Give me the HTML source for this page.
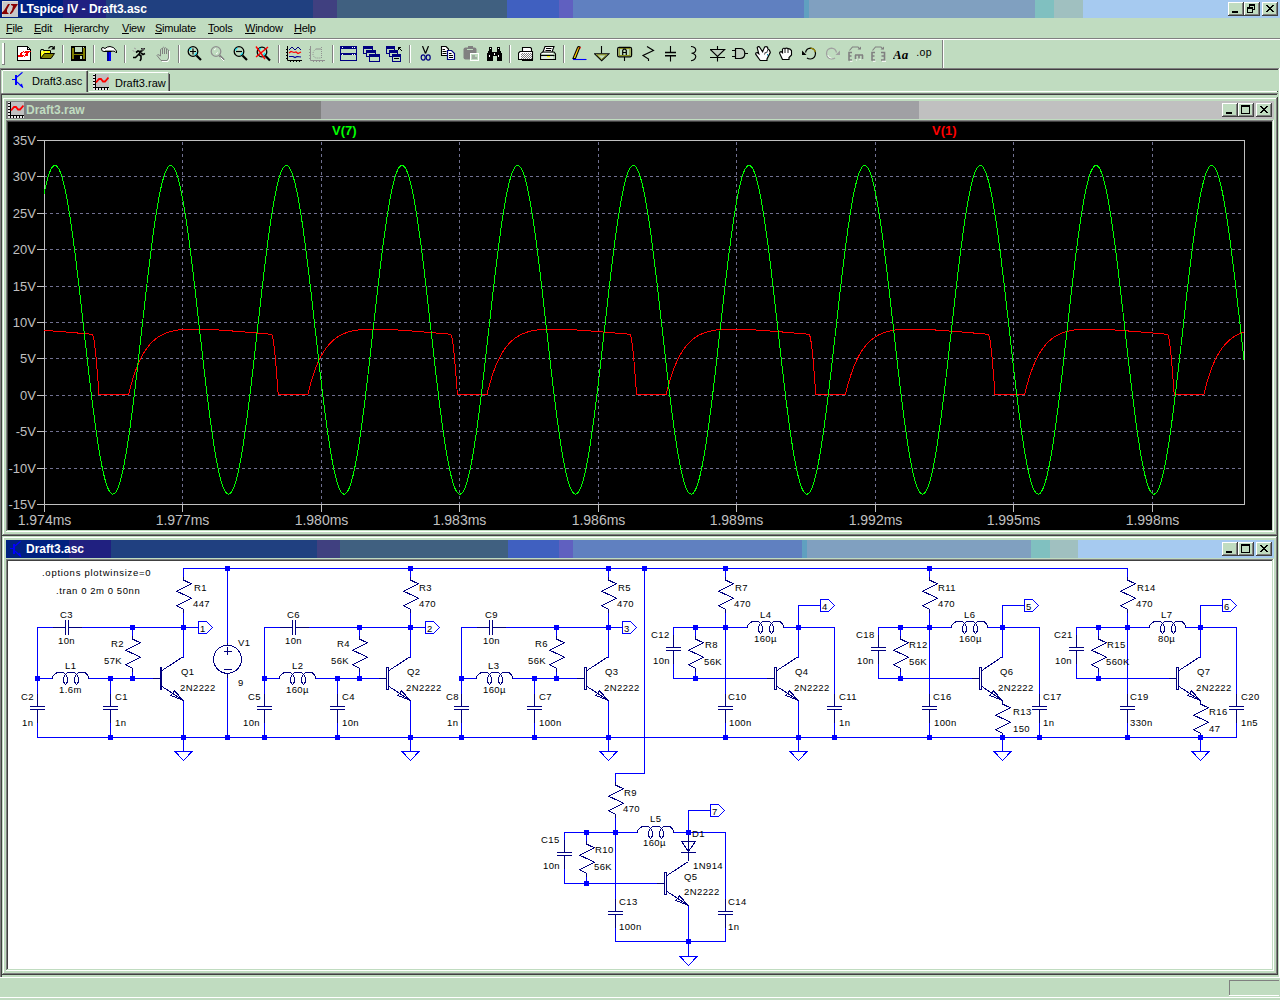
<!DOCTYPE html><html><head><meta charset="utf-8"><style>
html,body{margin:0;padding:0;}
body{width:1280px;height:1000px;position:relative;overflow:hidden;background:#c0dcc0;font-family:"Liberation Sans", sans-serif;}
div,span,svg{position:absolute;}
.t{position:absolute;white-space:nowrap;line-height:1;}
</style></head><body><div style="position:absolute;left:0px;top:0px;width:63px;height:18px;background:#002080"></div><div style="position:absolute;left:63px;top:0px;width:43px;height:18px;background:#202080"></div><div style="position:absolute;left:106px;top:0px;width:207px;height:18px;background:#204080"></div><div style="position:absolute;left:313px;top:0px;width:24px;height:18px;background:#404080"></div><div style="position:absolute;left:337px;top:0px;width:170px;height:18px;background:#406080"></div><div style="position:absolute;left:507px;top:0px;width:52px;height:18px;background:#4060c0"></div><div style="position:absolute;left:559px;top:0px;width:14px;height:18px;background:#6060c0"></div><div style="position:absolute;left:573px;top:0px;width:231px;height:18px;background:#6080c0"></div><div style="position:absolute;left:804px;top:0px;width:5px;height:18px;background:#60a0c0"></div><div style="position:absolute;left:809px;top:0px;width:226px;height:18px;background:#80a0c0"></div><div style="position:absolute;left:1035px;top:0px;width:19px;height:18px;background:#80c0c0"></div><div style="position:absolute;left:1054px;top:0px;width:29px;height:18px;background:#a0c0c0"></div><div style="position:absolute;left:1083px;top:0px;width:197px;height:18px;background:#a6caf0"></div><svg style="left:2px;top:1px" width="16" height="16" viewBox="0 0 16 16"><rect x="0" y="0" width="16" height="16" fill="#c8c8c8"/><rect x="0" y="0" width="16" height="1" fill="#e0dcd0"/><rect x="0" y="0" width="1" height="16" fill="#e0dcd0"/><path d="M6 3 H8 L5 8.5 L5 11 L7 13 H0 V11.5 L2 9.5 Z" fill="#880000"/><path d="M9 3 H16 L15 4.5 L12 9 L11 11 L9 13 H8 V12 L10 9 L11 5 L9 4 Z" fill="#880000"/></svg><span class="t" style="left:20px;top:3px;font-size:12px;font-weight:bold;color:#fff;">LTspice IV - Draft3.asc</span><div style="position:absolute;left:1228px;top:2px;width:16px;height:14px;background:#c0dcc0"></div><div style="position:absolute;left:1228px;top:2px;width:15px;height:1px;background:#fff"></div><div style="position:absolute;left:1228px;top:2px;width:1px;height:13px;background:#fff"></div><div style="position:absolute;left:1228px;top:15px;width:16px;height:1px;background:#404040"></div><div style="position:absolute;left:1243px;top:2px;width:1px;height:14px;background:#404040"></div><div style="position:absolute;left:1229px;top:14px;width:14px;height:1px;background:#808080"></div><div style="position:absolute;left:1242px;top:3px;width:1px;height:12px;background:#808080"></div><div style="position:absolute;left:1232px;top:11px;width:6px;height:2px;background:#000"></div><div style="position:absolute;left:1244px;top:2px;width:16px;height:14px;background:#c0dcc0"></div><div style="position:absolute;left:1244px;top:2px;width:15px;height:1px;background:#fff"></div><div style="position:absolute;left:1244px;top:2px;width:1px;height:13px;background:#fff"></div><div style="position:absolute;left:1244px;top:15px;width:16px;height:1px;background:#404040"></div><div style="position:absolute;left:1259px;top:2px;width:1px;height:14px;background:#404040"></div><div style="position:absolute;left:1245px;top:14px;width:14px;height:1px;background:#808080"></div><div style="position:absolute;left:1258px;top:3px;width:1px;height:12px;background:#808080"></div><div style="position:absolute;left:1249px;top:4px;width:6px;height:6px;border:1px solid #000;border-top-width:2px;box-sizing:border-box"></div><div style="position:absolute;left:1247px;top:7px;width:6px;height:6px;background:#c0dcc0;border:1px solid #000;border-top-width:2px;box-sizing:border-box"></div><div style="position:absolute;left:1262px;top:2px;width:16px;height:14px;background:#c0dcc0"></div><div style="position:absolute;left:1262px;top:2px;width:15px;height:1px;background:#fff"></div><div style="position:absolute;left:1262px;top:2px;width:1px;height:13px;background:#fff"></div><div style="position:absolute;left:1262px;top:15px;width:16px;height:1px;background:#404040"></div><div style="position:absolute;left:1277px;top:2px;width:1px;height:14px;background:#404040"></div><div style="position:absolute;left:1263px;top:14px;width:14px;height:1px;background:#808080"></div><div style="position:absolute;left:1276px;top:3px;width:1px;height:12px;background:#808080"></div><svg style="position:absolute;left:1266px;top:5px" width="8" height="7" shape-rendering="crispEdges"><path d="M0 0h2l2 2.5l2-2.5h2l-3 3.5l3 3.5h-2l-2-2.5l-2 2.5h-2l3-3.5z" fill="#000"/></svg><span class="t" style="left:6px;top:23px;font-size:11px;letter-spacing:-0.25px;color:#000;"><u>F</u>ile</span><span class="t" style="left:34px;top:23px;font-size:11px;letter-spacing:-0.25px;color:#000;"><u>E</u>dit</span><span class="t" style="left:64px;top:23px;font-size:11px;letter-spacing:-0.25px;color:#000;">H<u>i</u>erarchy</span><span class="t" style="left:122px;top:23px;font-size:11px;letter-spacing:-0.25px;color:#000;"><u>V</u>iew</span><span class="t" style="left:155px;top:23px;font-size:11px;letter-spacing:-0.25px;color:#000;"><u>S</u>imulate</span><span class="t" style="left:208px;top:23px;font-size:11px;letter-spacing:-0.25px;color:#000;"><u>T</u>ools</span><span class="t" style="left:245px;top:23px;font-size:11px;letter-spacing:-0.25px;color:#000;"><u>W</u>indow</span><span class="t" style="left:294px;top:23px;font-size:11px;letter-spacing:-0.25px;color:#000;"><u>H</u>elp</span><div style="position:absolute;left:0px;top:38px;width:1280px;height:1px;background:#808080"></div><div style="position:absolute;left:0px;top:39px;width:1280px;height:1px;background:#fff"></div><div style="position:absolute;left:2px;top:43px;width:2px;height:21px;background:#fff"></div><div style="position:absolute;left:4px;top:43px;width:1px;height:22px;background:#808080"></div><div style="position:absolute;left:2px;top:64px;width:3px;height:1px;background:#808080"></div><div style="position:absolute;left:62px;top:45px;width:1px;height:18px;background:#808080"></div><div style="position:absolute;left:63px;top:45px;width:1px;height:18px;background:#fff"></div><div style="position:absolute;left:93px;top:45px;width:1px;height:18px;background:#808080"></div><div style="position:absolute;left:94px;top:45px;width:1px;height:18px;background:#fff"></div><div style="position:absolute;left:124px;top:45px;width:1px;height:18px;background:#808080"></div><div style="position:absolute;left:125px;top:45px;width:1px;height:18px;background:#fff"></div><div style="position:absolute;left:178px;top:45px;width:1px;height:18px;background:#808080"></div><div style="position:absolute;left:179px;top:45px;width:1px;height:18px;background:#fff"></div><div style="position:absolute;left:278px;top:45px;width:1px;height:18px;background:#808080"></div><div style="position:absolute;left:279px;top:45px;width:1px;height:18px;background:#fff"></div><div style="position:absolute;left:332px;top:45px;width:1px;height:18px;background:#808080"></div><div style="position:absolute;left:333px;top:45px;width:1px;height:18px;background:#fff"></div><div style="position:absolute;left:409px;top:45px;width:1px;height:18px;background:#808080"></div><div style="position:absolute;left:410px;top:45px;width:1px;height:18px;background:#fff"></div><div style="position:absolute;left:509px;top:45px;width:1px;height:18px;background:#808080"></div><div style="position:absolute;left:510px;top:45px;width:1px;height:18px;background:#fff"></div><div style="position:absolute;left:563px;top:45px;width:1px;height:18px;background:#808080"></div><div style="position:absolute;left:564px;top:45px;width:1px;height:18px;background:#fff"></div><div style="position:absolute;left:942px;top:40px;width:1px;height:28px;background:#808080"></div><div style="position:absolute;left:943px;top:40px;width:1px;height:28px;background:#fff"></div><svg style="left:17px;top:46px" width="16" height="16" viewBox="0 0 16 16" shape-rendering="crispEdges"><path d="M0.5 0.5 H10.5 L13.5 3.5 V14.5 H0.5 Z" fill="#fff" stroke="#000"/><path d="M10.5 0.5 V3.5 H13.5" fill="none" stroke="#000"/><rect x="11" y="2" width="1" height="1" fill="#fff"/><rect x="6" y="5" width="1" height="1" fill="#ff0000"/><rect x="8" y="5" width="6" height="1" fill="#ff0000"/><rect x="4" y="6" width="2" height="1" fill="#ff0000"/><rect x="7" y="6" width="5" height="1" fill="#ff0000"/><rect x="3" y="7" width="2" height="1" fill="#ff0000"/><rect x="9" y="7" width="2" height="1" fill="#ff0000"/><rect x="3" y="8" width="2" height="1" fill="#ff0000"/><rect x="8" y="8" width="3" height="1" fill="#ff0000"/><rect x="1" y="9" width="6" height="1" fill="#ff0000"/><rect x="8" y="9" width="3" height="1" fill="#ff0000"/><rect x="1" y="10" width="5" height="1" fill="#ff0000"/><rect x="7" y="10" width="1" height="1" fill="#ff0000"/></svg><svg style="left:40px;top:46px" width="16" height="16" viewBox="0 0 16 16"><path d="M1 5 H10 V7.5 H4.5 L1 12 Z" fill="#ffff00"/><path d="M0.5 12.5 V4.5 H1 V3.5 H3.5 V4.5 H10.5 V7.5" fill="none" stroke="#000"/><path d="M4.5 7.5 H14.5 L11 12.5 H0.5 Z" fill="#808000" stroke="#000"/><path d="M1 6 H3 M5 6 H7 M2 8 H3" stroke="#fff" stroke-width="0.6"/><path d="M8.5 2.5 Q9.5 0.5 11.5 0.5 Q12.5 0.5 13.5 1.5" fill="none" stroke="#000" stroke-width="1.2"/><path d="M11 3.5 H14.8 V-0.5 Z" fill="#000"/></svg><svg style="left:71px;top:46px" width="16" height="16" viewBox="0 0 16 16" shape-rendering="crispEdges"><rect x="0" y="0" width="15" height="15" fill="#000"/><rect x="1" y="2" width="2" height="11" fill="#808000"/><rect x="12" y="2" width="2" height="11" fill="#808000"/><rect x="4" y="1" width="7" height="5" fill="#c0dcc0"/><rect x="3" y="8" width="9" height="1" fill="#808000"/><rect x="9" y="10" width="2" height="3" fill="#c0dcc0"/><rect x="12" y="1" width="1" height="1" fill="#c0dcc0"/></svg><svg style="left:101px;top:46px" width="17" height="16" viewBox="0 0 17 16"><path d="M0.5 3 Q0.5 1.5 2 1.5 L4 2.5 Q6 0.5 9 0.5 Q13 0.5 15.5 5 V7 L14 5.5 Q12 4.5 10 5.5 H5 L3 5.5 Q0.5 5.5 0.5 3 Z" fill="#fff" stroke="#000"/><path d="M4 4.5 H13" stroke="#a0a0a0"/><rect x="6" y="6" width="4" height="9" fill="#0000a0"/><rect x="8" y="6" width="2" height="9" fill="#0000ff"/></svg><svg style="left:132px;top:46px" width="16" height="16" viewBox="0 0 16 16"><path d="M1 11.5 H3.5 L7 8 L9 5 L10.5 5 M9 6 L6 5 L4 6.5 M9 7 L11 8.5 L13 7.5 M7 8.5 L9 10 L9 13 L8 15" fill="none" stroke="#000" stroke-width="1.6"/><path d="M9 2 H13 L12 4.5 H10 Z" fill="#000"/><circle cx="11" cy="3" r="0.7" fill="#fff"/><path d="M2 2 L4 3 M0.5 4.5 L2.5 5.5" stroke="#a0a0a0"/></svg><svg style="left:156px;top:46px" width="16" height="16" viewBox="0 0 16 16"><path d="M4.5 10 V3.5 Q5.5 2 6.5 3.5 V8 V2 Q7.5 0.5 8.5 2 V8 V2.5 Q9.5 1 10.5 2.5 V8 V4 Q11.5 2.5 12.5 4 V12 L11 14.5 H5 L1 9.5 Q1.5 8 3 9 Z" fill="none" stroke="#808080"/><path d="M13.5 5 V13 L12 15.5 H6" fill="none" stroke="#fff"/></svg><svg style="left:187px;top:46px" width="16" height="16" viewBox="0 0 16 16"><circle cx="6" cy="5.5" r="4.8" fill="none" stroke="#000" stroke-width="1.3"/><path d="M2.5 4.5 Q3 2.5 4.5 2 M9.5 6.5 Q9 8.5 7.5 9" stroke="#00e0ff" stroke-width="1.1" fill="none"/><path d="M3 5.5 H9 M6 2.5 V8.5" stroke="#000" stroke-width="1.2"/><path d="M9.5 9.5 L14 14" stroke="#000" stroke-width="2.2"/></svg><svg style="left:210px;top:46px" width="16" height="16" viewBox="0 0 16 16"><circle cx="6" cy="5.5" r="4.8" fill="none" stroke="#909090" stroke-width="1.3"/><path d="M4 4 L6 2.5 M6 8 L8 6.5" stroke="#fff"/><path d="M9.5 9.5 L14 14" stroke="#808080" stroke-width="2.2"/><path d="M10.5 11.5 L14 15" stroke="#fff"/></svg><svg style="left:233px;top:46px" width="16" height="16" viewBox="0 0 16 16"><circle cx="6" cy="5.5" r="4.8" fill="none" stroke="#000" stroke-width="1.3"/><path d="M2.5 4.5 Q3 2.5 4.5 2 M9.5 6.5 Q9 8.5 7.5 9" stroke="#00e0ff" stroke-width="1.1" fill="none"/><path d="M3 5.5 H9" stroke="#000" stroke-width="1.2"/><path d="M9.5 9.5 L14 14" stroke="#000" stroke-width="2.2"/></svg><svg style="left:255px;top:46px" width="16" height="16" viewBox="0 0 16 16"><circle cx="7" cy="6" r="4.8" fill="none" stroke="#000" stroke-width="1.3"/><path d="M4 4 Q5 2.5 6 2.5 M10 7 Q9 9 8 9" stroke="#00e0ff" stroke-width="1.5" fill="none"/><path d="M10.5 10 L15 14.5" stroke="#000" stroke-width="2.2"/><path d="M1 0.5 L10 13 M13 1 L1 11" stroke="#ff0000" stroke-width="1.4"/></svg><svg style="left:286px;top:46px" width="17" height="16" viewBox="0 0 17 16"><path d="M1.5 0 V14.5 H16" fill="none" stroke="#000"/><path d="M0 3.5 H1 M0 6.5 H1 M0 9.5 H1 M0 12.5 H1 M4.5 15 V16 M7.5 15 V16 M10.5 15 V16 M13.5 15 V16" stroke="#000"/><polyline points="3,4 6,1 9,4 12,1 15,4" fill="none" stroke="#000080"/><polyline points="3,7 5,5.5 8,6.5 10,6 12,7.5 15,6" fill="none" stroke="#ff0000" stroke-width="1.2"/><polyline points="3,10.5 7,10.5 9,11.5 11,10.5 15,11" fill="none" stroke="#0000a0" stroke-width="1.2"/></svg><svg style="left:309px;top:46px" width="17" height="16" viewBox="0 0 17 16"><path d="M1.5 0 V14.5 H16" fill="none" stroke="#909090"/><path d="M0 3.5 H1 M0 6.5 H1 M0 9.5 H1 M0 12.5 H1 M4.5 15 V16 M7.5 15 V16 M10.5 15 V16 M13.5 15 V16" stroke="#909090"/><path d="M12.5 1 V13 M7 3 Q4 5 4 8 Q4 11 7 12 H12" fill="none" stroke="#909090" stroke-dasharray="1 1"/><path d="M7 3 H12" stroke="#909090"/></svg><svg style="left:340px;top:46px" width="17" height="16" viewBox="0 0 17 16" shape-rendering="crispEdges"><rect x="0.5" y="0.5" width="16" height="14" fill="#c0dcc0" stroke="#000080"/><rect x="1" y="1" width="15" height="2" fill="#000080"/><rect x="1" y="7" width="15" height="2" fill="#000080"/><rect x="2" y="1" width="1" height="1" fill="#fff"/><rect x="12" y="1" width="1" height="1" fill="#fff"/><rect x="14" y="1" width="1" height="1" fill="#fff"/><rect x="2" y="8" width="1" height="1" fill="#fff"/><rect x="12" y="8" width="1" height="1" fill="#fff"/><rect x="14" y="8" width="1" height="1" fill="#fff"/></svg><svg style="left:363px;top:46px" width="17" height="16" viewBox="0 0 17 16" shape-rendering="crispEdges"><rect x="0.5" y="0.5" width="9" height="7" fill="#c0dcc0" stroke="#000080"/><rect x="1" y="1" width="9" height="2" fill="#000080"/><rect x="3.5" y="4.5" width="9" height="6" fill="#c0dcc0" stroke="#000080"/><rect x="4" y="5" width="9" height="2" fill="#000080"/><rect x="6.5" y="8.5" width="10" height="7" fill="#c0dcc0" stroke="#000080"/><rect x="7" y="9" width="10" height="2" fill="#000080"/></svg><svg style="left:386px;top:46px" width="17" height="16" viewBox="0 0 17 16" shape-rendering="crispEdges"><rect x="0.5" y="0.5" width="8" height="7" fill="#c0dcc0" stroke="#000080"/><rect x="1" y="1" width="8" height="2" fill="#000080"/><rect x="3.5" y="4.5" width="8" height="6" fill="#c0dcc0" stroke="#000080"/><rect x="4" y="5" width="8" height="2" fill="#000080"/><rect x="6.5" y="8.5" width="8" height="7" fill="#c0dcc0" stroke="#000080"/><rect x="7" y="9" width="8" height="2" fill="#000080"/><rect x="8" y="12" width="5" height="1" fill="#000"/><path d="M12.5 1.5 L16 5 M12.5 1.5 V4 M12.5 1.5 H15" stroke="#000" fill="none" stroke-width="1.1"/></svg><svg style="left:420px;top:46px" width="12" height="16" viewBox="0 0 12 16"><path d="M2.5 0 L5.5 7.5 M8.5 0 L5.5 7.5" stroke="#000" stroke-width="1.2"/><ellipse cx="3.2" cy="11.5" rx="2" ry="2.6" fill="none" stroke="#000080" stroke-width="1.2"/><ellipse cx="8.2" cy="11.5" rx="2" ry="2.6" fill="none" stroke="#000080" stroke-width="1.2"/></svg><svg style="left:440px;top:46px" width="17" height="16" viewBox="0 0 17 16"><path d="M1.5 0.5 H6 L8.5 3 V9.5 H1.5 Z" fill="#fff" stroke="#000" stroke-width="1.1"/><path d="M2.5 3.5 H5 M2.5 5.5 H6.5 M2.5 7.5 H6.5" stroke="#000"/><path d="M7.5 4.5 H11.5 L14.5 7.5 V13.5 H7.5 Z" fill="#fff" stroke="#000080" stroke-width="1.2"/><path d="M9 7.5 H11.5 M9 9.5 H13 M9 11.5 H13" stroke="#000"/></svg><svg style="left:463px;top:46px" width="17" height="16" viewBox="0 0 17 16"><rect x="0.5" y="1.5" width="13" height="12" rx="2" fill="#808080"/><rect x="5" y="0" width="5" height="2" fill="#808080"/><path d="M4 3.5 H10" stroke="#c0dcc0"/><rect x="7.5" y="7.5" width="8" height="7" fill="#c0dcc0" stroke="#fff"/><path d="M9 10 H12 M9 12 H14" stroke="#808080"/></svg><svg style="left:487px;top:46px" width="16" height="16" viewBox="0 0 16 16" shape-rendering="crispEdges"><path d="M0 15 V8 L2 4 V1 H5 V6 H10 V1 H13 V4 L15 8 V15 H9.5 V10 H5.5 V15 Z" fill="#000"/><rect x="2" y="9" width="1" height="2" fill="#fff"/><rect x="11" y="9" width="1" height="2" fill="#fff"/><rect x="3" y="2" width="1" height="1" fill="#fff"/><rect x="11" y="2" width="1" height="1" fill="#fff"/><rect x="7" y="7" width="1" height="2" fill="#fff"/></svg><svg style="left:518px;top:46px" width="16" height="16" viewBox="0 0 16 16"><path d="M4.5 5 V1.5 H12.5 L13.5 2.5 V5" fill="#fff" stroke="#000" stroke-width="1.1"/><path d="M0.5 13.5 V7 L2 5.5 H14.5 V13.5 Z" fill="#fff" stroke="#000" stroke-width="1.1"/><rect x="4" y="7" width="1" height="1" fill="#808080"/><rect x="6" y="7" width="1" height="1" fill="#808080"/><rect x="8" y="7" width="1" height="1" fill="#808080"/><rect x="10" y="7" width="1" height="1" fill="#808080"/><rect x="12" y="7" width="1" height="1" fill="#808080"/><rect x="3" y="8" width="1" height="1" fill="#808080"/><rect x="5" y="8" width="1" height="1" fill="#808080"/><rect x="7" y="8" width="1" height="1" fill="#808080"/><rect x="9" y="8" width="1" height="1" fill="#808080"/><rect x="11" y="8" width="1" height="1" fill="#808080"/><rect x="13" y="8" width="1" height="1" fill="#808080"/><rect x="4" y="9" width="1" height="1" fill="#808080"/><rect x="6" y="9" width="1" height="1" fill="#808080"/><rect x="8" y="9" width="1" height="1" fill="#808080"/><rect x="10" y="9" width="1" height="1" fill="#808080"/><rect x="12" y="9" width="1" height="1" fill="#808080"/><rect x="3" y="10" width="1" height="1" fill="#808080"/><rect x="5" y="10" width="1" height="1" fill="#808080"/><rect x="7" y="10" width="1" height="1" fill="#808080"/><rect x="9" y="10" width="1" height="1" fill="#808080"/><rect x="11" y="10" width="1" height="1" fill="#808080"/><rect x="13" y="10" width="1" height="1" fill="#808080"/><rect x="4" y="11" width="1" height="1" fill="#808080"/><rect x="6" y="11" width="1" height="1" fill="#808080"/><rect x="8" y="11" width="1" height="1" fill="#808080"/><rect x="10" y="11" width="1" height="1" fill="#808080"/><rect x="12" y="11" width="1" height="1" fill="#808080"/><rect x="3" y="12" width="1" height="1" fill="#808080"/><rect x="5" y="12" width="1" height="1" fill="#808080"/><rect x="7" y="12" width="1" height="1" fill="#808080"/><rect x="9" y="12" width="1" height="1" fill="#808080"/><rect x="11" y="12" width="1" height="1" fill="#808080"/><rect x="13" y="12" width="1" height="1" fill="#808080"/><rect x="4" y="13.5" width="11" height="1.5" fill="#000"/></svg><svg style="left:540px;top:46px" width="17" height="16" viewBox="0 0 17 16"><path d="M3 6 L5 0.5 H14 L12 6" fill="#fff" stroke="#000" stroke-width="1.1"/><path d="M6 2.5 H11.5 M5.5 4.5 H11" stroke="#000" stroke-width="1"/><path d="M0.5 13.5 V8 L2.5 6 H14 L15.5 8 V13.5 Z" fill="#c0dcc0" stroke="#000" stroke-width="1.1"/><path d="M1.5 7.5 H13 M1.5 12 H13" stroke="#fff" stroke-width="1"/><path d="M1 9.5 H14.5" stroke="#000" stroke-width="1.2"/><path d="M1.5 10.7 H13" stroke="#e0f0e0" stroke-width="1"/><rect x="7" y="10" width="3" height="1.2" fill="#ffff00"/></svg><svg style="left:572px;top:46px" width="16" height="16" viewBox="0 0 16 16"><path d="M1 12.5 L5.5 1.5 Q6.5 0 8 1 L3.5 12.5 Z" fill="#ffff00" stroke="#000" stroke-width="1.1"/><path d="M2.5 10 L6.5 2" stroke="#ff0000" stroke-width="0.7" stroke-dasharray="1 1.5"/><rect x="7.5" y="1" width="1.2" height="1.5" fill="#ff0000"/><path d="M1 13.5 H14.5" stroke="#0000ff" stroke-width="1.1"/></svg><svg style="left:594px;top:46px" width="16" height="16" viewBox="0 0 16 16"><path d="M7.5 0 V7.5" stroke="#000" stroke-width="1.1"/><path d="M0.5 7.8 H15 L7.7 14.7 Z" fill="#c0dcc0" stroke="#000" stroke-width="1.1"/><path d="M2.8 8.8 H12.6 L7.7 13.3 Z" fill="none" stroke="#808000" stroke-width="0.9"/></svg><svg style="left:617px;top:46px" width="16" height="16" viewBox="0 0 16 16"><rect x="0.6" y="1.3" width="14" height="9.6" rx="1.6" fill="#c0dcc0" stroke="#000" stroke-width="1.2"/><rect x="2.2" y="2.6" width="10.8" height="7" fill="none" stroke="#808000" stroke-width="0.9"/><path d="M5.7 9 V4.5 L6.7 3.2 H8.3 L9.3 4.5 V9 M5.7 6.5 H9.3" fill="none" stroke="#000" stroke-width="1.2"/><path d="M7.5 11 V15" stroke="#000" stroke-width="1.1"/></svg><svg style="left:642px;top:46px" width="14" height="16" viewBox="0 0 14 16"><polyline points="5,0.5 11.5,4.5 1,9.5 6.5,13 6.5,15" fill="none" stroke="#000" stroke-width="1.15"/></svg><svg style="left:663px;top:46px" width="16" height="16" viewBox="0 0 16 16"><path d="M7.5 0 V6 M7.5 10 V15.5" stroke="#000" stroke-width="1.1"/><path d="M2 6.5 H13 M2 9.8 H13" stroke="#000" stroke-width="1.6"/></svg><svg style="left:690px;top:46px" width="10" height="16" viewBox="0 0 10 16"><path d="M1 0.5 Q5.5 1 5.8 4 Q5.5 7 1.5 7.2 Q5.5 7.6 5.8 10.5 Q5.5 14 1 14.7" fill="none" stroke="#000" stroke-width="1.15"/></svg><svg style="left:710px;top:46px" width="16" height="16" viewBox="0 0 16 16"><path d="M7.5 0 V3.5 M7.5 10 V15.5 M0 11.5 H15" stroke="#000" stroke-width="1.1"/><path d="M0.3 3.5 H14.7 L7.5 10.5 Z" fill="#c0d0c0" stroke="#000" stroke-width="1.1"/></svg><svg style="left:732px;top:46px" width="17" height="16" viewBox="0 0 17 16"><path d="M3.5 2.5 H8 Q12.8 2.5 12.8 7.5 Q12.8 12.5 8 12.5 H3.5 Z" fill="#c0d0c0" stroke="#000" stroke-width="1.2"/><path d="M0 4.5 H3.5 M0 10.5 H3.5 M12.8 7.5 H16" stroke="#000" stroke-width="1.1"/></svg><svg style="left:755px;top:46px" width="17" height="16" viewBox="0 0 17 16"><path d="M5.2 14.5 L0.7 8.2 Q0.5 6.5 2.2 6.6 L3.8 7.8 L2.2 1.6 Q2.8 0.2 4.3 0.7 L7.6 5.8 L9.6 1.1 Q11.2 0.1 12.6 1.3 L12.8 3 Q14.8 3.5 15.3 6.6 L12 13 V14.5 Z" fill="#fff" stroke="#000" stroke-width="1.15"/><path d="M10.5 6 L9.5 8.5 M12.8 4 L11.5 7" stroke="#000" stroke-width="0.8"/><rect x="12" y="8" width="1" height="1.5" fill="#00a0c0"/></svg><svg style="left:779px;top:46px" width="15" height="16" viewBox="0 0 15 16"><path d="M3.5 13.5 L0.6 7.2 Q0.6 5.6 2.5 5.7 L3.5 6.6 V3.2 Q4.5 1.6 6 2.6 Q7.5 1.6 9 2.6 Q11 2.4 12.5 4.6 V9 L10 11.5 V13.5 Z" fill="#fff" stroke="#000" stroke-width="1.15"/><path d="M6 3 V7 M9 3 V7" stroke="#000" stroke-width="0.9"/></svg><svg style="left:801px;top:46px" width="16" height="16" viewBox="0 0 16 16"><path d="M4.5 6.5 Q5.5 2.5 9.5 2.2 Q14.3 2.5 14.5 7.5 Q14.2 12.5 9.5 13 Q7.2 13 6 12" fill="none" stroke="#000" stroke-width="1.2"/><path d="M9.5 2.2 Q13.5 2.5 14.3 6" fill="none" stroke="#a09000" stroke-width="1.2"/><path d="M1 4.5 V9 H5.5 Z" fill="#000"/></svg><svg style="left:825px;top:46px" width="16" height="16" viewBox="0 0 16 16"><path d="M11.5 6.5 Q10.5 2.5 6.5 2.2 Q1.7 2.5 1.5 7.5 Q1.8 12.5 6.5 13 Q8.8 13 10 12" fill="none" stroke="#a0a0a0" stroke-width="1.2"/><path d="M15 4.5 V9 H10.5 Z" fill="#a0a0a0"/><path d="M2.8 9 Q3.5 12 6.5 12.2" fill="none" stroke="#fff" stroke-width="0.8"/></svg><svg style="left:847px;top:46px" width="17" height="16" viewBox="0 0 17 16"><path d="M2 6.5 V14 M1.2 6.5 H5 M1.2 10 H4.5 M1.2 14 H5 M8 9 H16 M8.5 9 V13 M12 9 V12.5 M15.5 9 V13" fill="none" stroke="#808080" stroke-width="1.6"/><path d="M3 15.3 H5.5 M9.5 13.5 V14.5 M13 12.8 V14" stroke="#fff"/><path d="M2.5 4.5 L5.5 1 H11 L12.5 3" fill="none" stroke="#808080" stroke-width="1.1"/><path d="M10.5 3.5 H14 V0.5 Z" fill="#808080"/></svg><svg style="left:870px;top:46px" width="17" height="16" viewBox="0 0 17 16"><path d="M2 6.5 V14 M1.2 6.5 H5 M1.2 10 H4.5 M1.2 14 H5 M14.5 6.5 V14 M11 6.5 H15.3 M11.5 10 H15.3 M11 14 H15.3" fill="none" stroke="#808080" stroke-width="1.6"/><path d="M3 15.3 H5.5 M12 15.3 H16" stroke="#fff"/><path d="M2.5 4.5 L5.5 1 H11 L12.5 3" fill="none" stroke="#808080" stroke-width="1.1"/><path d="M10.5 3.5 H14 V0.5 Z" fill="#808080"/></svg><svg style="left:893px;top:46px" width="18" height="16" viewBox="0 0 18 16"><text x="0" y="12.5" font-size="13" font-family="Liberation Serif" font-style="italic" font-weight="bold" fill="#000">Aa</text></svg><svg style="left:916px;top:46px" width="18" height="16" viewBox="0 0 18 16"><text x="0.3" y="10" font-size="10.5" letter-spacing="0.4" font-family="Liberation Sans" fill="#000">.op</text></svg><div style="position:absolute;left:0px;top:68px;width:1279px;height:1px;background:#808080"></div><div style="position:absolute;left:0px;top:69px;width:1278px;height:1px;background:#404040"></div><div style="position:absolute;left:89px;top:72px;width:80px;height:19px;background:#c0dcc0"></div><div style="position:absolute;left:89px;top:72px;width:79px;height:1px;background:#fff"></div><div style="position:absolute;left:168px;top:73px;width:1px;height:18px;background:#808080"></div><div style="position:absolute;left:169px;top:74px;width:1px;height:17px;background:#404040"></div><div style="position:absolute;left:89px;top:91px;width:1188px;height:1px;background:#fff"></div><div style="position:absolute;left:1277px;top:91px;width:1px;height:1px;background:#404040"></div><div style="position:absolute;left:0px;top:68px;width:1px;height:25px;background:#808080"></div><div style="position:absolute;left:2px;top:70px;width:86px;height:23px;background:#c0dcc0"></div><div style="position:absolute;left:3px;top:70px;width:84px;height:1px;background:#fff"></div><div style="position:absolute;left:2px;top:71px;width:1px;height:22px;background:#fff"></div><div style="position:absolute;left:87px;top:71px;width:1px;height:21px;background:#404040"></div><div style="position:absolute;left:86px;top:71px;width:1px;height:21px;background:#808080"></div><svg style="left:12px;top:72px" width="13" height="17" viewBox="0 0 13 17"><rect x="3" y="3" width="2" height="10" fill="#0000ff"/><rect x="0" y="7" width="3" height="1" fill="#0000ff"/><path d="M5 5 L10.5 0.3 M5 10 L11 15.7" stroke="#0000ff" stroke-width="1.1" fill="none"/><path d="M7.5 13.5 L10 11.5 L11 15.5 Z" fill="#0000ff"/></svg><span class="t" style="left:32px;top:76px;font-size:11px;color:#000;">Draft3.asc</span><svg style="left:93px;top:74px" width="16" height="16" viewBox="0 0 16 16"><rect x="0" y="0" width="2" height="16" fill="#e8e8e8"/><rect x="0" y="14" width="16" height="2" fill="#e8e8e8"/><rect x="3" y="0" width="13" height="13" fill="#c0c0c0"/><rect x="2" y="0" width="1" height="16" fill="#000"/><rect x="0" y="13" width="16" height="1" fill="#000"/><rect x="0" y="1" width="2" height="1" fill="#000"/><rect x="0" y="4" width="2" height="1" fill="#000"/><rect x="0" y="7" width="2" height="1" fill="#000"/><rect x="0" y="10" width="2" height="1" fill="#000"/><rect x="5" y="14" width="1" height="2" fill="#000"/><rect x="8" y="14" width="1" height="2" fill="#000"/><rect x="11" y="14" width="1" height="2" fill="#000"/><rect x="14" y="14" width="1" height="2" fill="#000"/><polyline points="3,8.5 6,5 8,5 10,7.5 12,7.5 15.5,3.5" fill="none" stroke="#ff0000" stroke-width="1.8"/></svg><span class="t" style="left:115px;top:78px;font-size:11px;color:#000;">Draft3.raw</span><div style="position:absolute;left:0px;top:93px;width:1278px;height:1px;background:#808080"></div><div style="position:absolute;left:0px;top:94px;width:1277px;height:1px;background:#404040"></div><div style="position:absolute;left:1279px;top:68px;width:1px;height:910px;background:#fff"></div><div style="position:absolute;left:0px;top:93px;width:1px;height:885px;background:#808080"></div><div style="position:absolute;left:1px;top:94px;width:1px;height:883px;background:#404040"></div><div style="position:absolute;left:2px;top:97px;width:1276px;height:439px;background:#c0dcc0"></div><div style="position:absolute;left:3px;top:98px;width:1273px;height:1px;background:#fff"></div><div style="position:absolute;left:3px;top:98px;width:1px;height:436px;background:#fff"></div><div style="position:absolute;left:3px;top:534px;width:1274px;height:1px;background:#808080"></div><div style="position:absolute;left:1276px;top:98px;width:1px;height:437px;background:#808080"></div><div style="position:absolute;left:2px;top:535px;width:1276px;height:1px;background:#404040"></div><div style="position:absolute;left:1277px;top:97px;width:1px;height:439px;background:#404040"></div><div style="position:absolute;left:6px;top:101px;width:315px;height:18px;background:#808080"></div><div style="position:absolute;left:321px;top:101px;width:598px;height:18px;background:#a0a0a4"></div><div style="position:absolute;left:919px;top:101px;width:355px;height:18px;background:#c0c0c0"></div><svg style="left:8px;top:102px" width="16" height="16" viewBox="0 0 16 16"><rect x="0" y="0" width="2" height="16" fill="#e8e8e8"/><rect x="0" y="14" width="16" height="2" fill="#e8e8e8"/><rect x="3" y="0" width="13" height="13" fill="#c0c0c0"/><rect x="2" y="0" width="1" height="16" fill="#000"/><rect x="0" y="13" width="16" height="1" fill="#000"/><rect x="0" y="1" width="2" height="1" fill="#000"/><rect x="0" y="4" width="2" height="1" fill="#000"/><rect x="0" y="7" width="2" height="1" fill="#000"/><rect x="0" y="10" width="2" height="1" fill="#000"/><rect x="5" y="14" width="1" height="2" fill="#000"/><rect x="8" y="14" width="1" height="2" fill="#000"/><rect x="11" y="14" width="1" height="2" fill="#000"/><rect x="14" y="14" width="1" height="2" fill="#000"/><polyline points="3,8.5 6,5 8,5 10,7.5 12,7.5 15.5,3.5" fill="none" stroke="#ff0000" stroke-width="1.8"/></svg><span class="t" style="left:26px;top:104px;font-size:12px;font-weight:bold;color:#c0dcc0;">Draft3.raw</span><div style="position:absolute;left:1222px;top:103px;width:16px;height:14px;background:#c0dcc0"></div><div style="position:absolute;left:1222px;top:103px;width:15px;height:1px;background:#fff"></div><div style="position:absolute;left:1222px;top:103px;width:1px;height:13px;background:#fff"></div><div style="position:absolute;left:1222px;top:116px;width:16px;height:1px;background:#404040"></div><div style="position:absolute;left:1237px;top:103px;width:1px;height:14px;background:#404040"></div><div style="position:absolute;left:1223px;top:115px;width:14px;height:1px;background:#808080"></div><div style="position:absolute;left:1236px;top:104px;width:1px;height:12px;background:#808080"></div><div style="position:absolute;left:1226px;top:112px;width:6px;height:2px;background:#000"></div><div style="position:absolute;left:1238px;top:103px;width:16px;height:14px;background:#c0dcc0"></div><div style="position:absolute;left:1238px;top:103px;width:15px;height:1px;background:#fff"></div><div style="position:absolute;left:1238px;top:103px;width:1px;height:13px;background:#fff"></div><div style="position:absolute;left:1238px;top:116px;width:16px;height:1px;background:#404040"></div><div style="position:absolute;left:1253px;top:103px;width:1px;height:14px;background:#404040"></div><div style="position:absolute;left:1239px;top:115px;width:14px;height:1px;background:#808080"></div><div style="position:absolute;left:1252px;top:104px;width:1px;height:12px;background:#808080"></div><div style="position:absolute;left:1241px;top:105px;width:9px;height:9px;border:1px solid #000;border-top-width:2px;box-sizing:border-box"></div><div style="position:absolute;left:1256px;top:103px;width:16px;height:14px;background:#c0dcc0"></div><div style="position:absolute;left:1256px;top:103px;width:15px;height:1px;background:#fff"></div><div style="position:absolute;left:1256px;top:103px;width:1px;height:13px;background:#fff"></div><div style="position:absolute;left:1256px;top:116px;width:16px;height:1px;background:#404040"></div><div style="position:absolute;left:1271px;top:103px;width:1px;height:14px;background:#404040"></div><div style="position:absolute;left:1257px;top:115px;width:14px;height:1px;background:#808080"></div><div style="position:absolute;left:1270px;top:104px;width:1px;height:12px;background:#808080"></div><svg style="position:absolute;left:1260px;top:106px" width="8" height="7" shape-rendering="crispEdges"><path d="M0 0h2l2 2.5l2-2.5h2l-3 3.5l3 3.5h-2l-2-2.5l-2 2.5h-2l3-3.5z" fill="#000"/></svg><div style="position:absolute;left:6px;top:120px;width:1267px;height:1px;background:#808080"></div><div style="position:absolute;left:6px;top:120px;width:1px;height:411px;background:#808080"></div><div style="position:absolute;left:7px;top:121px;width:1265px;height:1px;background:#404040"></div><div style="position:absolute;left:7px;top:121px;width:1px;height:409px;background:#404040"></div><div style="position:absolute;left:7px;top:530px;width:1266px;height:1px;background:#c0dcc0"></div><div style="position:absolute;left:1272px;top:121px;width:1px;height:410px;background:#c0dcc0"></div><div style="position:absolute;left:6px;top:531px;width:1268px;height:1px;background:#fff"></div><div style="position:absolute;left:1273px;top:120px;width:1px;height:412px;background:#fff"></div><div style="position:absolute;left:8px;top:122px;width:1264px;height:408px;background:#000"></div><svg style="left:8px;top:122px" width="1264" height="408" viewBox="8 122 1264 408" shape-rendering="crispEdges" font-family="Liberation Sans" font-size="13" fill="#c0c0c0"><line x1="45" y1="176.5" x2="1244" y2="176.5" stroke="#707090" stroke-dasharray="3 3" stroke-dashoffset="-5"/><line x1="45" y1="213.5" x2="1244" y2="213.5" stroke="#707090" stroke-dasharray="3 3" stroke-dashoffset="-5"/><line x1="45" y1="249.5" x2="1244" y2="249.5" stroke="#707090" stroke-dasharray="3 3" stroke-dashoffset="-5"/><line x1="45" y1="286.5" x2="1244" y2="286.5" stroke="#707090" stroke-dasharray="3 3" stroke-dashoffset="-5"/><line x1="45" y1="322.5" x2="1244" y2="322.5" stroke="#707090" stroke-dasharray="3 3" stroke-dashoffset="-5"/><line x1="45" y1="358.5" x2="1244" y2="358.5" stroke="#707090" stroke-dasharray="3 3" stroke-dashoffset="-5"/><line x1="45" y1="395.5" x2="1244" y2="395.5" stroke="#707090" stroke-dasharray="3 3" stroke-dashoffset="-5"/><line x1="45" y1="431.5" x2="1244" y2="431.5" stroke="#707090" stroke-dasharray="3 3" stroke-dashoffset="-5"/><line x1="45" y1="468.5" x2="1244" y2="468.5" stroke="#707090" stroke-dasharray="3 3" stroke-dashoffset="-5"/><line x1="182.5" y1="141" x2="182.5" y2="504" stroke="#707090" stroke-dasharray="3 3" stroke-dashoffset="-1"/><line x1="321.5" y1="141" x2="321.5" y2="504" stroke="#707090" stroke-dasharray="3 3" stroke-dashoffset="-1"/><line x1="459.5" y1="141" x2="459.5" y2="504" stroke="#707090" stroke-dasharray="3 3" stroke-dashoffset="-1"/><line x1="598.5" y1="141" x2="598.5" y2="504" stroke="#707090" stroke-dasharray="3 3" stroke-dashoffset="-1"/><line x1="736.5" y1="141" x2="736.5" y2="504" stroke="#707090" stroke-dasharray="3 3" stroke-dashoffset="-1"/><line x1="875.5" y1="141" x2="875.5" y2="504" stroke="#707090" stroke-dasharray="3 3" stroke-dashoffset="-1"/><line x1="1013.5" y1="141" x2="1013.5" y2="504" stroke="#707090" stroke-dasharray="3 3" stroke-dashoffset="-1"/><line x1="1152.5" y1="141" x2="1152.5" y2="504" stroke="#707090" stroke-dasharray="3 3" stroke-dashoffset="-1"/><rect x="44.5" y="140.5" width="1200" height="364" fill="none" stroke="#c0c0c0"/><line x1="37" y1="140.5" x2="44" y2="140.5" stroke="#c0c0c0"/><text x="36" y="145" text-anchor="end">35V</text><line x1="37" y1="176.5" x2="44" y2="176.5" stroke="#c0c0c0"/><text x="36" y="181" text-anchor="end">30V</text><line x1="37" y1="213.5" x2="44" y2="213.5" stroke="#c0c0c0"/><text x="36" y="218" text-anchor="end">25V</text><line x1="37" y1="249.5" x2="44" y2="249.5" stroke="#c0c0c0"/><text x="36" y="254" text-anchor="end">20V</text><line x1="37" y1="286.5" x2="44" y2="286.5" stroke="#c0c0c0"/><text x="36" y="291" text-anchor="end">15V</text><line x1="37" y1="322.5" x2="44" y2="322.5" stroke="#c0c0c0"/><text x="36" y="327" text-anchor="end">10V</text><line x1="37" y1="358.5" x2="44" y2="358.5" stroke="#c0c0c0"/><text x="36" y="363" text-anchor="end">5V</text><line x1="37" y1="395.5" x2="44" y2="395.5" stroke="#c0c0c0"/><text x="36" y="400" text-anchor="end">0V</text><line x1="37" y1="431.5" x2="44" y2="431.5" stroke="#c0c0c0"/><text x="36" y="436" text-anchor="end">-5V</text><line x1="37" y1="468.5" x2="44" y2="468.5" stroke="#c0c0c0"/><text x="36" y="473" text-anchor="end">-10V</text><line x1="37" y1="504.5" x2="44" y2="504.5" stroke="#c0c0c0"/><text x="36" y="509" text-anchor="end">-15V</text><line x1="44.5" y1="504" x2="44.5" y2="512" stroke="#c0c0c0"/><text x="44.5" y="525" text-anchor="middle" style="font-size:14px">1.974ms</text><line x1="182.5" y1="504" x2="182.5" y2="512" stroke="#c0c0c0"/><text x="182.5" y="525" text-anchor="middle" style="font-size:14px">1.977ms</text><line x1="321.5" y1="504" x2="321.5" y2="512" stroke="#c0c0c0"/><text x="321.5" y="525" text-anchor="middle" style="font-size:14px">1.980ms</text><line x1="459.5" y1="504" x2="459.5" y2="512" stroke="#c0c0c0"/><text x="459.5" y="525" text-anchor="middle" style="font-size:14px">1.983ms</text><line x1="598.5" y1="504" x2="598.5" y2="512" stroke="#c0c0c0"/><text x="598.5" y="525" text-anchor="middle" style="font-size:14px">1.986ms</text><line x1="736.5" y1="504" x2="736.5" y2="512" stroke="#c0c0c0"/><text x="736.5" y="525" text-anchor="middle" style="font-size:14px">1.989ms</text><line x1="875.5" y1="504" x2="875.5" y2="512" stroke="#c0c0c0"/><text x="875.5" y="525" text-anchor="middle" style="font-size:14px">1.992ms</text><line x1="1013.5" y1="504" x2="1013.5" y2="512" stroke="#c0c0c0"/><text x="1013.5" y="525" text-anchor="middle" style="font-size:14px">1.995ms</text><line x1="1152.5" y1="504" x2="1152.5" y2="512" stroke="#c0c0c0"/><text x="1152.5" y="525" text-anchor="middle" style="font-size:14px">1.998ms</text><polyline points="44.00,330.32 44.25,330.34 44.50,330.35 44.75,330.37 45.00,330.39 45.25,330.41 45.50,330.43 45.75,330.44 46.00,330.46 46.25,330.48 46.50,330.50 46.75,330.52 47.00,330.54 47.25,330.55 47.50,330.57 47.75,330.59 48.00,330.61 48.25,330.63 48.50,330.65 48.75,330.67 49.00,330.68 49.25,330.70 49.50,330.72 49.75,330.74 50.00,330.76 50.25,330.78 50.50,330.80 50.75,330.82 51.00,330.84 51.25,330.86 51.50,330.87 51.75,330.89 52.00,330.91 52.25,330.93 52.50,330.95 52.75,330.97 53.00,330.99 53.25,331.01 53.50,331.03 53.75,331.05 54.00,331.07 54.25,331.09 54.50,331.11 54.75,331.13 55.00,331.15 55.25,331.17 55.50,331.19 55.75,331.21 56.00,331.23 56.25,331.25 56.50,331.27 56.75,331.29 57.00,331.31 57.25,331.33 57.50,331.35 57.75,331.37 58.00,331.39 58.25,331.41 58.50,331.43 58.75,331.45 59.00,331.47 59.25,331.49 59.50,331.51 59.75,331.53 60.00,331.55 60.25,331.57 60.50,331.59 60.75,331.61 61.00,331.63 61.25,331.65 61.50,331.67 61.75,331.69 62.00,331.71 62.25,331.73 62.50,331.75 62.75,331.77 63.00,331.79 63.25,331.81 63.50,331.83 63.75,331.85 64.00,331.87 64.25,331.89 64.50,331.91 64.75,331.93 65.00,331.96 65.25,331.98 65.50,332.00 65.75,332.02 66.00,332.04 66.25,332.06 66.50,332.08 66.75,332.10 67.00,332.12 67.25,332.14 67.50,332.16 67.75,332.18 68.00,332.20 68.25,332.23 68.50,332.25 68.75,332.27 69.00,332.29 69.25,332.31 69.50,332.33 69.75,332.35 70.00,332.37 70.25,332.39 70.50,332.41 70.75,332.43 71.00,332.46 71.25,332.48 71.50,332.50 71.75,332.52 72.00,332.54 72.25,332.56 72.50,332.58 72.75,332.60 73.00,332.62 73.25,332.65 73.50,332.67 73.75,332.69 74.00,332.71 74.25,332.73 74.50,332.75 74.75,332.77 75.00,332.79 75.25,332.81 75.50,332.84 75.75,332.86 76.00,332.88 76.25,332.90 76.50,332.92 76.75,332.94 77.00,332.96 77.25,332.98 77.50,333.01 77.75,333.03 78.00,333.05 78.25,333.07 78.50,333.09 78.75,333.11 79.00,333.13 79.25,333.15 79.50,333.18 79.75,333.20 80.00,333.22 80.25,333.24 80.50,333.26 80.75,333.28 81.00,333.30 81.25,333.33 81.50,333.35 81.75,333.37 82.00,333.39 82.25,333.41 82.50,333.43 82.75,333.45 83.00,333.48 83.25,333.50 83.50,333.52 83.75,333.54 84.00,333.56 84.25,333.58 84.50,333.60 84.75,333.63 85.00,333.65 85.25,333.67 85.50,333.69 85.75,333.71 86.00,333.73 86.25,333.75 86.50,333.78 86.75,333.80 87.00,333.82 87.25,333.84 87.50,333.86 87.75,333.88 88.00,333.90 88.25,333.93 88.50,333.95 88.75,333.97 89.00,333.99 89.25,334.01 89.50,334.03 89.75,334.06 90.00,334.08 90.25,334.10 90.50,334.12 90.75,334.14 91.00,334.16 91.25,334.19 91.50,334.21 91.75,334.23 92.00,334.25 92.25,334.35 92.50,334.63 92.75,335.11 93.00,335.77 93.25,336.62 93.50,337.65 93.75,338.86 94.00,340.25 94.25,341.81 94.50,343.53 94.75,345.42 95.00,347.46 95.25,349.65 95.50,351.98 95.75,354.45 96.00,357.05 96.25,359.76 96.50,362.59 96.75,365.51 97.00,368.53 97.25,371.63 97.50,374.80 97.75,378.04 98.00,381.33 98.25,384.66 98.50,388.02 98.75,391.40 99.00,394.80 99.25,394.80 99.50,394.80 99.75,394.80 100.00,394.80 100.25,394.80 100.50,394.80 100.75,394.80 101.00,394.80 101.25,394.80 101.50,394.80 101.75,394.80 102.00,394.80 102.25,394.80 102.50,394.80 102.75,394.80 103.00,394.80 103.25,394.80 103.50,394.80 103.75,394.80 104.00,394.80 104.25,394.80 104.50,394.80 104.75,394.80 105.00,394.80 105.25,394.80 105.50,394.80 105.75,394.80 106.00,394.80 106.25,394.80 106.50,394.80 106.75,394.80 107.00,394.80 107.25,394.80 107.50,394.80 107.75,394.80 108.00,394.80 108.25,394.80 108.50,394.80 108.75,394.80 109.00,394.80 109.25,394.80 109.50,394.80 109.75,394.80 110.00,394.80 110.25,394.80 110.50,394.80 110.75,394.80 111.00,394.80 111.25,394.80 111.50,394.80 111.75,394.80 112.00,394.80 112.25,394.80 112.50,394.80 112.75,394.80 113.00,394.80 113.25,394.80 113.50,394.80 113.75,394.80 114.00,394.80 114.25,394.80 114.50,394.80 114.75,394.80 115.00,394.80 115.25,394.80 115.50,394.80 115.75,394.80 116.00,394.80 116.25,394.80 116.50,394.80 116.75,394.80 117.00,394.80 117.25,394.80 117.50,394.80 117.75,394.80 118.00,394.80 118.25,394.80 118.50,394.80 118.75,394.80 119.00,394.80 119.25,394.80 119.50,394.80 119.75,394.80 120.00,394.80 120.25,394.80 120.50,394.80 120.75,394.80 121.00,394.80 121.25,394.80 121.50,394.80 121.75,394.80 122.00,394.80 122.25,394.80 122.50,394.80 122.75,394.80 123.00,394.80 123.25,394.80 123.50,394.80 123.75,394.80 124.00,394.80 124.25,394.80 124.50,394.80 124.75,394.80 125.00,394.80 125.25,394.80 125.50,394.80 125.75,394.80 126.00,394.80 126.25,394.80 126.50,394.80 126.75,394.80 127.00,394.80 127.25,394.82 127.50,394.84 127.75,394.87 128.00,394.89 128.25,394.91 128.50,394.93 128.75,393.88 129.00,392.85 129.25,391.84 129.50,390.84 129.75,389.85 130.00,388.88 130.25,387.93 130.50,386.99 130.75,386.06 131.00,385.14 131.25,384.24 131.50,383.36 131.75,382.48 132.00,381.62 132.25,380.78 132.50,379.94 132.75,379.12 133.00,378.31 133.25,377.51 133.50,376.72 133.75,375.95 134.00,375.19 134.25,374.44 134.50,373.70 134.75,372.97 135.00,372.25 135.25,371.54 135.50,370.85 135.75,370.16 136.00,369.49 136.25,368.82 136.50,368.17 136.75,367.52 137.00,366.89 137.25,366.26 137.50,365.64 137.75,365.04 138.00,364.44 138.25,363.85 138.50,363.27 138.75,362.70 139.00,362.14 139.25,361.58 139.50,361.04 139.75,360.50 140.00,359.97 140.25,359.45 140.50,358.93 140.75,358.43 141.00,357.93 141.25,357.44 141.50,356.96 141.75,356.48 142.00,356.02 142.25,355.55 142.50,355.10 142.75,354.65 143.00,354.21 143.25,353.78 143.50,353.35 143.75,352.93 144.00,352.52 144.25,352.11 144.50,351.71 144.75,351.32 145.00,350.93 145.25,350.54 145.50,350.17 145.75,349.80 146.00,349.43 146.25,349.07 146.50,348.72 146.75,348.37 147.00,348.03 147.25,347.69 147.50,347.36 147.75,347.03 148.00,346.71 148.25,346.39 148.50,346.08 148.75,345.77 149.00,345.47 149.25,345.17 149.50,344.87 149.75,344.59 150.00,344.30 150.25,344.02 150.50,343.75 150.75,343.48 151.00,343.21 151.25,342.95 151.50,342.69 151.75,342.43 152.00,342.18 152.25,341.94 152.50,341.69 152.75,341.46 153.00,341.22 153.25,340.99 153.50,340.76 153.75,340.54 154.00,340.32 154.25,340.10 154.50,339.89 154.75,339.68 155.00,339.47 155.25,339.27 155.50,339.07 155.75,338.88 156.00,338.68 156.25,338.49 156.50,338.31 156.75,338.12 157.00,337.94 157.25,337.76 157.50,337.59 157.75,337.42 158.00,337.25 158.25,337.08 158.50,336.92 158.75,336.76 159.00,336.60 159.25,336.44 159.50,336.29 159.75,336.14 160.00,335.99 160.25,335.84 160.50,335.70 160.75,335.56 161.00,335.42 161.25,335.29 161.50,335.15 161.75,335.02 162.00,334.89 162.25,334.76 162.50,334.64 162.75,334.52 163.00,334.40 163.25,334.28 163.50,334.16 163.75,334.05 164.00,333.93 164.25,333.82 164.50,333.71 164.75,333.61 165.00,333.50 165.25,333.40 165.50,333.30 165.75,333.20 166.00,333.10 166.25,333.01 166.50,332.91 166.75,332.82 167.00,332.73 167.25,332.64 167.50,332.55 167.75,332.47 168.00,332.38 168.25,332.30 168.50,332.22 168.75,332.14 169.00,332.06 169.25,331.98 169.50,331.91 169.75,331.83 170.00,331.76 170.25,331.69 170.50,331.62 170.75,331.55 171.00,331.49 171.25,331.42 171.50,331.36 171.75,331.29 172.00,331.23 172.25,331.17 172.50,331.11 172.75,331.05 173.00,330.99 173.25,330.94 173.50,330.88 173.75,330.83 174.00,330.78 174.25,330.72 174.50,330.67 174.75,330.62 175.00,330.58 175.25,330.53 175.50,330.48 175.75,330.44 176.00,330.39 176.25,330.35 176.50,330.31 176.75,330.26 177.00,330.22 177.25,330.18 177.50,330.15 177.75,330.11 178.00,330.07 178.25,330.03 178.50,330.00 178.75,329.96 179.00,329.93 179.25,329.90 179.50,329.87 179.75,329.83 180.00,329.80 180.25,329.77 180.50,329.74 180.75,329.72 181.00,329.69 181.25,329.66 181.50,329.64 181.75,329.61 182.00,329.59 182.25,329.56 182.50,329.54 182.75,329.52 183.00,329.49 183.25,329.47 183.50,329.45 183.75,329.43 184.00,329.41 184.25,329.39 184.50,329.37 184.75,329.36 185.00,329.34 185.25,329.32 185.50,329.31 185.75,329.29 186.00,329.28 186.25,329.26 186.50,329.25 186.75,329.23 187.00,329.22 187.25,329.21 187.50,329.20 187.75,329.19 188.00,329.17 188.25,329.16 188.50,329.15 188.75,329.14 189.00,329.14 189.25,329.13 189.50,329.12 189.75,329.11 190.00,329.10 190.25,329.10 190.50,329.09 190.75,329.08 191.00,329.08 191.25,329.07 191.50,329.07 191.75,329.06 192.00,329.06 192.25,329.06 192.50,329.05 192.75,329.05 193.00,329.05 193.25,329.05 193.50,329.04 193.75,329.04 194.00,329.04 194.25,329.04 194.50,329.04 194.75,329.04 195.00,329.04 195.25,329.04 195.50,329.04 195.75,329.04 196.00,329.04 196.25,329.05 196.50,329.05 196.75,329.05 197.00,329.05 197.25,329.06 197.50,329.06 197.75,329.06 198.00,329.07 198.25,329.07 198.50,329.07 198.75,329.08 199.00,329.08 199.25,329.09 199.50,329.09 199.75,329.10 200.00,329.10 200.25,329.11 200.50,329.12 200.75,329.12 201.00,329.13 201.25,329.14 201.50,329.14 201.75,329.15 202.00,329.16 202.25,329.17 202.50,329.17 202.75,329.18 203.00,329.19 203.25,329.20 203.50,329.21 203.75,329.22 204.00,329.22 204.25,329.23 204.50,329.24 204.75,329.25 205.00,329.26 205.25,329.27 205.50,329.28 205.75,329.29 206.00,329.30 206.25,329.31 206.50,329.33 206.75,329.34 207.00,329.35 207.25,329.36 207.50,329.37 207.75,329.38 208.00,329.39 208.25,329.41 208.50,329.42 208.75,329.43 209.00,329.44 209.25,329.45 209.50,329.47 209.75,329.48 210.00,329.49 210.25,329.51 210.50,329.52 210.75,329.53 211.00,329.55 211.25,329.56 211.50,329.57 211.75,329.59 212.00,329.60 212.25,329.61 212.50,329.63 212.75,329.64 213.00,329.66 213.25,329.67 213.50,329.69 213.75,329.70 214.00,329.72 214.25,329.73 214.50,329.74 214.75,329.76 215.00,329.78 215.25,329.79 215.50,329.81 215.75,329.82 216.00,329.84 216.25,329.85 216.50,329.87 216.75,329.88 217.00,329.90 217.25,329.92 217.50,329.93 217.75,329.95 218.00,329.96 218.25,329.98 218.50,330.00 218.75,330.01 219.00,330.03 219.25,330.05 219.50,330.06 219.75,330.08 220.00,330.10 220.25,330.11 220.50,330.13 220.75,330.15 221.00,330.16 221.25,330.18 221.50,330.20 221.75,330.22 222.00,330.23 222.25,330.25 222.50,330.27 222.75,330.29 223.00,330.30 223.25,330.32 223.50,330.34 223.75,330.36 224.00,330.38 224.25,330.39 224.50,330.41 224.75,330.43 225.00,330.45 225.25,330.47 225.50,330.48 225.75,330.50 226.00,330.52 226.25,330.54 226.50,330.56 226.75,330.58 227.00,330.59 227.25,330.61 227.50,330.63 227.75,330.65 228.00,330.67 228.25,330.69 228.50,330.71 228.75,330.73 229.00,330.74 229.25,330.76 229.50,330.78 229.75,330.80 230.00,330.82 230.25,330.84 230.50,330.86 230.75,330.88 231.00,330.90 231.25,330.92 231.50,330.94 231.75,330.96 232.00,330.97 232.25,330.99 232.50,331.01 232.75,331.03 233.00,331.05 233.25,331.07 233.50,331.09 233.75,331.11 234.00,331.13 234.25,331.15 234.50,331.17 234.75,331.19 235.00,331.21 235.25,331.23 235.50,331.25 235.75,331.27 236.00,331.29 236.25,331.31 236.50,331.33 236.75,331.35 237.00,331.37 237.25,331.39 237.50,331.41 237.75,331.43 238.00,331.45 238.25,331.47 238.50,331.49 238.75,331.51 239.00,331.53 239.25,331.55 239.50,331.57 239.75,331.59 240.00,331.61 240.25,331.63 240.50,331.65 240.75,331.67 241.00,331.69 241.25,331.71 241.50,331.73 241.75,331.75 242.00,331.77 242.25,331.80 242.50,331.82 242.75,331.84 243.00,331.86 243.25,331.88 243.50,331.90 243.75,331.92 244.00,331.94 244.25,331.96 244.50,331.98 244.75,332.00 245.00,332.02 245.25,332.04 245.50,332.06 245.75,332.08 246.00,332.10 246.25,332.13 246.50,332.15 246.75,332.17 247.00,332.19 247.25,332.21 247.50,332.23 247.75,332.25 248.00,332.27 248.25,332.29 248.50,332.31 248.75,332.33 249.00,332.36 249.25,332.38 249.50,332.40 249.75,332.42 250.00,332.44 250.25,332.46 250.50,332.48 250.75,332.50 251.00,332.52 251.25,332.54 251.50,332.57 251.75,332.59 252.00,332.61 252.25,332.63 252.50,332.65 252.75,332.67 253.00,332.69 253.25,332.71 253.50,332.73 253.75,332.76 254.00,332.78 254.25,332.80 254.50,332.82 254.75,332.84 255.00,332.86 255.25,332.88 255.50,332.90 255.75,332.92 256.00,332.95 256.25,332.97 256.50,332.99 256.75,333.01 257.00,333.03 257.25,333.05 257.50,333.07 257.75,333.09 258.00,333.12 258.25,333.14 258.50,333.16 258.75,333.18 259.00,333.20 259.25,333.22 259.50,333.24 259.75,333.27 260.00,333.29 260.25,333.31 260.50,333.33 260.75,333.35 261.00,333.37 261.25,333.39 261.50,333.42 261.75,333.44 262.00,333.46 262.25,333.48 262.50,333.50 262.75,333.52 263.00,333.54 263.25,333.57 263.50,333.59 263.75,333.61 264.00,333.63 264.25,333.65 264.50,333.67 264.75,333.69 265.00,333.72 265.25,333.74 265.50,333.76 265.75,333.78 266.00,333.80 266.25,333.82 266.50,333.84 266.75,333.87 267.00,333.89 267.25,333.91 267.50,333.93 267.75,333.95 268.00,333.97 268.25,334.00 268.50,334.02 268.75,334.04 269.00,334.06 269.25,334.08 269.50,334.10 269.75,334.12 270.00,334.15 270.25,334.17 270.50,334.19 270.75,334.21 271.00,334.23 271.25,334.25 271.50,334.39 271.75,334.71 272.00,335.22 272.25,335.92 272.50,336.81 272.75,337.88 273.00,339.12 273.25,340.54 273.50,342.14 273.75,343.90 274.00,345.81 274.25,347.89 274.50,350.11 274.75,352.47 275.00,354.96 275.25,357.58 275.50,360.32 275.75,363.16 276.00,366.11 276.25,369.14 276.50,372.26 276.75,375.44 277.00,378.69 277.25,381.99 277.50,385.33 277.75,388.70 278.00,392.08 278.25,394.80 278.50,394.80 278.75,394.80 279.00,394.80 279.25,394.80 279.50,394.80 279.75,394.80 280.00,394.80 280.25,394.80 280.50,394.80 280.75,394.80 281.00,394.80 281.25,394.80 281.50,394.80 281.75,394.80 282.00,394.80 282.25,394.80 282.50,394.80 282.75,394.80 283.00,394.80 283.25,394.80 283.50,394.80 283.75,394.80 284.00,394.80 284.25,394.80 284.50,394.80 284.75,394.80 285.00,394.80 285.25,394.80 285.50,394.80 285.75,394.80 286.00,394.80 286.25,394.80 286.50,394.80 286.75,394.80 287.00,394.80 287.25,394.80 287.50,394.80 287.75,394.80 288.00,394.80 288.25,394.80 288.50,394.80 288.75,394.80 289.00,394.80 289.25,394.80 289.50,394.80 289.75,394.80 290.00,394.80 290.25,394.80 290.50,394.80 290.75,394.80 291.00,394.80 291.25,394.80 291.50,394.80 291.75,394.80 292.00,394.80 292.25,394.80 292.50,394.80 292.75,394.80 293.00,394.80 293.25,394.80 293.50,394.80 293.75,394.80 294.00,394.80 294.25,394.80 294.50,394.80 294.75,394.80 295.00,394.80 295.25,394.80 295.50,394.80 295.75,394.80 296.00,394.80 296.25,394.80 296.50,394.80 296.75,394.80 297.00,394.80 297.25,394.80 297.50,394.80 297.75,394.80 298.00,394.80 298.25,394.80 298.50,394.80 298.75,394.80 299.00,394.80 299.25,394.80 299.50,394.80 299.75,394.80 300.00,394.80 300.25,394.80 300.50,394.80 300.75,394.80 301.00,394.80 301.25,394.80 301.50,394.80 301.75,394.80 302.00,394.80 302.25,394.80 302.50,394.80 302.75,394.80 303.00,394.80 303.25,394.80 303.50,394.80 303.75,394.80 304.00,394.80 304.25,394.80 304.50,394.80 304.75,394.80 305.00,394.80 305.25,394.80 305.50,394.80 305.75,394.80 306.00,394.80 306.25,394.80 306.50,394.83 306.75,394.85 307.00,394.87 307.25,394.89 307.50,394.91 307.75,394.72 308.00,393.68 308.25,392.65 308.50,391.64 308.75,390.64 309.00,389.66 309.25,388.69 309.50,387.74 309.75,386.80 310.00,385.87 310.25,384.96 310.50,384.07 310.75,383.18 311.00,382.31 311.25,381.45 311.50,380.61 311.75,379.78 312.00,378.96 312.25,378.15 312.50,377.35 312.75,376.57 313.00,375.80 313.25,375.04 313.50,374.29 313.75,373.55 314.00,372.82 314.25,372.11 314.50,371.40 314.75,370.71 315.00,370.03 315.25,369.35 315.50,368.69 315.75,368.04 316.00,367.39 316.25,366.76 316.50,366.14 316.75,365.52 317.00,364.92 317.25,364.32 317.50,363.73 317.75,363.15 318.00,362.58 318.25,362.02 318.50,361.47 318.75,360.93 319.00,360.39 319.25,359.86 319.50,359.34 319.75,358.83 320.00,358.33 320.25,357.83 320.50,357.34 320.75,356.86 321.00,356.39 321.25,355.92 321.50,355.46 321.75,355.01 322.00,354.56 322.25,354.13 322.50,353.69 322.75,353.27 323.00,352.85 323.25,352.44 323.50,352.03 323.75,351.63 324.00,351.24 324.25,350.85 324.50,350.47 324.75,350.09 325.00,349.72 325.25,349.36 325.50,349.00 325.75,348.65 326.00,348.30 326.25,347.96 326.50,347.62 326.75,347.29 327.00,346.96 327.25,346.64 327.50,346.32 327.75,346.01 328.00,345.71 328.25,345.41 328.50,345.11 328.75,344.82 329.00,344.53 329.25,344.24 329.50,343.97 329.75,343.69 330.00,343.42 330.25,343.16 330.50,342.89 330.75,342.64 331.00,342.38 331.25,342.13 331.50,341.89 331.75,341.65 332.00,341.41 332.25,341.18 332.50,340.94 332.75,340.72 333.00,340.50 333.25,340.28 333.50,340.06 333.75,339.85 334.00,339.64 334.25,339.43 334.50,339.23 334.75,339.03 335.00,338.84 335.25,338.64 335.50,338.45 335.75,338.27 336.00,338.09 336.25,337.91 336.50,337.73 336.75,337.55 337.00,337.38 337.25,337.21 337.50,337.05 337.75,336.88 338.00,336.72 338.25,336.57 338.50,336.41 338.75,336.26 339.00,336.11 339.25,335.96 339.50,335.81 339.75,335.67 340.00,335.53 340.25,335.39 340.50,335.26 340.75,335.13 341.00,334.99 341.25,334.87 341.50,334.74 341.75,334.61 342.00,334.49 342.25,334.37 342.50,334.25 342.75,334.14 343.00,334.02 343.25,333.91 343.50,333.80 343.75,333.69 344.00,333.59 344.25,333.48 344.50,333.38 344.75,333.28 345.00,333.18 345.25,333.08 345.50,332.99 345.75,332.89 346.00,332.80 346.25,332.71 346.50,332.62 346.75,332.54 347.00,332.45 347.25,332.37 347.50,332.28 347.75,332.20 348.00,332.12 348.25,332.05 348.50,331.97 348.75,331.89 349.00,331.82 349.25,331.75 349.50,331.68 349.75,331.61 350.00,331.54 350.25,331.47 350.50,331.41 350.75,331.34 351.00,331.28 351.25,331.22 351.50,331.16 351.75,331.10 352.00,331.04 352.25,330.98 352.50,330.93 352.75,330.87 353.00,330.82 353.25,330.77 353.50,330.71 353.75,330.66 354.00,330.61 354.25,330.57 354.50,330.52 354.75,330.47 355.00,330.43 355.25,330.38 355.50,330.34 355.75,330.30 356.00,330.26 356.25,330.22 356.50,330.18 356.75,330.14 357.00,330.10 357.25,330.06 357.50,330.03 357.75,329.99 358.00,329.96 358.25,329.92 358.50,329.89 358.75,329.86 359.00,329.83 359.25,329.80 359.50,329.77 359.75,329.74 360.00,329.71 360.25,329.68 360.50,329.66 360.75,329.63 361.00,329.61 361.25,329.58 361.50,329.56 361.75,329.53 362.00,329.51 362.25,329.49 362.50,329.47 362.75,329.45 363.00,329.43 363.25,329.41 363.50,329.39 363.75,329.37 364.00,329.35 364.25,329.34 364.50,329.32 364.75,329.30 365.00,329.29 365.25,329.27 365.50,329.26 365.75,329.24 366.00,329.23 366.25,329.22 366.50,329.21 366.75,329.19 367.00,329.18 367.25,329.17 367.50,329.16 367.75,329.15 368.00,329.14 368.25,329.13 368.50,329.13 368.75,329.12 369.00,329.11 369.25,329.10 369.50,329.10 369.75,329.09 370.00,329.08 370.25,329.08 370.50,329.07 370.75,329.07 371.00,329.06 371.25,329.06 371.50,329.06 371.75,329.05 372.00,329.05 372.25,329.05 372.50,329.05 372.75,329.04 373.00,329.04 373.25,329.04 373.50,329.04 373.75,329.04 374.00,329.04 374.25,329.04 374.50,329.04 374.75,329.04 375.00,329.04 375.25,329.04 375.50,329.05 375.75,329.05 376.00,329.05 376.25,329.05 376.50,329.06 376.75,329.06 377.00,329.06 377.25,329.07 377.50,329.07 377.75,329.07 378.00,329.08 378.25,329.08 378.50,329.09 378.75,329.09 379.00,329.10 379.25,329.11 379.50,329.11 379.75,329.12 380.00,329.12 380.25,329.13 380.50,329.14 380.75,329.14 381.00,329.15 381.25,329.16 381.50,329.17 381.75,329.17 382.00,329.18 382.25,329.19 382.50,329.20 382.75,329.21 383.00,329.22 383.25,329.23 383.50,329.24 383.75,329.25 384.00,329.26 384.25,329.26 384.50,329.27 384.75,329.29 385.00,329.30 385.25,329.31 385.50,329.32 385.75,329.33 386.00,329.34 386.25,329.35 386.50,329.36 386.75,329.37 387.00,329.38 387.25,329.40 387.50,329.41 387.75,329.42 388.00,329.43 388.25,329.44 388.50,329.46 388.75,329.47 389.00,329.48 389.25,329.50 389.50,329.51 389.75,329.52 390.00,329.53 390.25,329.55 390.50,329.56 390.75,329.58 391.00,329.59 391.25,329.60 391.50,329.62 391.75,329.63 392.00,329.65 392.25,329.66 392.50,329.67 392.75,329.69 393.00,329.70 393.25,329.72 393.50,329.73 393.75,329.75 394.00,329.76 394.25,329.78 394.50,329.79 394.75,329.81 395.00,329.82 395.25,329.84 395.50,329.86 395.75,329.87 396.00,329.89 396.25,329.90 396.50,329.92 396.75,329.93 397.00,329.95 397.25,329.97 397.50,329.98 397.75,330.00 398.00,330.02 398.25,330.03 398.50,330.05 398.75,330.07 399.00,330.08 399.25,330.10 399.50,330.12 399.75,330.13 400.00,330.15 400.25,330.17 400.50,330.19 400.75,330.20 401.00,330.22 401.25,330.24 401.50,330.26 401.75,330.27 402.00,330.29 402.25,330.31 402.50,330.33 402.75,330.34 403.00,330.36 403.25,330.38 403.50,330.40 403.75,330.42 404.00,330.43 404.25,330.45 404.50,330.47 404.75,330.49 405.00,330.51 405.25,330.52 405.50,330.54 405.75,330.56 406.00,330.58 406.25,330.60 406.50,330.62 406.75,330.64 407.00,330.65 407.25,330.67 407.50,330.69 407.75,330.71 408.00,330.73 408.25,330.75 408.50,330.77 408.75,330.79 409.00,330.81 409.25,330.82 409.50,330.84 409.75,330.86 410.00,330.88 410.25,330.90 410.50,330.92 410.75,330.94 411.00,330.96 411.25,330.98 411.50,331.00 411.75,331.02 412.00,331.04 412.25,331.06 412.50,331.08 412.75,331.10 413.00,331.12 413.25,331.14 413.50,331.15 413.75,331.17 414.00,331.19 414.25,331.21 414.50,331.23 414.75,331.25 415.00,331.27 415.25,331.29 415.50,331.31 415.75,331.33 416.00,331.35 416.25,331.37 416.50,331.39 416.75,331.41 417.00,331.43 417.25,331.45 417.50,331.47 417.75,331.49 418.00,331.51 418.25,331.53 418.50,331.55 418.75,331.57 419.00,331.60 419.25,331.62 419.50,331.64 419.75,331.66 420.00,331.68 420.25,331.70 420.50,331.72 420.75,331.74 421.00,331.76 421.25,331.78 421.50,331.80 421.75,331.82 422.00,331.84 422.25,331.86 422.50,331.88 422.75,331.90 423.00,331.92 423.25,331.94 423.50,331.96 423.75,331.98 424.00,332.01 424.25,332.03 424.50,332.05 424.75,332.07 425.00,332.09 425.25,332.11 425.50,332.13 425.75,332.15 426.00,332.17 426.25,332.19 426.50,332.21 426.75,332.23 427.00,332.25 427.25,332.28 427.50,332.30 427.75,332.32 428.00,332.34 428.25,332.36 428.50,332.38 428.75,332.40 429.00,332.42 429.25,332.44 429.50,332.46 429.75,332.49 430.00,332.51 430.25,332.53 430.50,332.55 430.75,332.57 431.00,332.59 431.25,332.61 431.50,332.63 431.75,332.65 432.00,332.67 432.25,332.70 432.50,332.72 432.75,332.74 433.00,332.76 433.25,332.78 433.50,332.80 433.75,332.82 434.00,332.84 434.25,332.87 434.50,332.89 434.75,332.91 435.00,332.93 435.25,332.95 435.50,332.97 435.75,332.99 436.00,333.01 436.25,333.04 436.50,333.06 436.75,333.08 437.00,333.10 437.25,333.12 437.50,333.14 437.75,333.16 438.00,333.18 438.25,333.21 438.50,333.23 438.75,333.25 439.00,333.27 439.25,333.29 439.50,333.31 439.75,333.33 440.00,333.36 440.25,333.38 440.50,333.40 440.75,333.42 441.00,333.44 441.25,333.46 441.50,333.48 441.75,333.51 442.00,333.53 442.25,333.55 442.50,333.57 442.75,333.59 443.00,333.61 443.25,333.63 443.50,333.66 443.75,333.68 444.00,333.70 444.25,333.72 444.50,333.74 444.75,333.76 445.00,333.78 445.25,333.81 445.50,333.83 445.75,333.85 446.00,333.87 446.25,333.89 446.50,333.91 446.75,333.93 447.00,333.96 447.25,333.98 447.50,334.00 447.75,334.02 448.00,334.04 448.25,334.06 448.50,334.09 448.75,334.11 449.00,334.13 449.25,334.15 449.50,334.17 449.75,334.19 450.00,334.22 450.25,334.24 450.50,334.27 450.75,334.44 451.00,334.80 451.25,335.35 451.50,336.09 451.75,337.01 452.00,338.11 452.25,339.39 452.50,340.85 452.75,342.48 453.00,344.27 453.25,346.22 453.50,348.32 453.75,350.57 454.00,352.96 454.25,355.48 454.50,358.12 454.75,360.88 455.00,363.74 455.25,366.71 455.50,369.76 455.75,372.89 456.00,376.09 456.25,379.35 456.50,382.65 456.75,386.00 457.00,389.37 457.25,392.76 457.50,394.80 457.75,394.80 458.00,394.80 458.25,394.80 458.50,394.80 458.75,394.80 459.00,394.80 459.25,394.80 459.50,394.80 459.75,394.80 460.00,394.80 460.25,394.80 460.50,394.80 460.75,394.80 461.00,394.80 461.25,394.80 461.50,394.80 461.75,394.80 462.00,394.80 462.25,394.80 462.50,394.80 462.75,394.80 463.00,394.80 463.25,394.80 463.50,394.80 463.75,394.80 464.00,394.80 464.25,394.80 464.50,394.80 464.75,394.80 465.00,394.80 465.25,394.80 465.50,394.80 465.75,394.80 466.00,394.80 466.25,394.80 466.50,394.80 466.75,394.80 467.00,394.80 467.25,394.80 467.50,394.80 467.75,394.80 468.00,394.80 468.25,394.80 468.50,394.80 468.75,394.80 469.00,394.80 469.25,394.80 469.50,394.80 469.75,394.80 470.00,394.80 470.25,394.80 470.50,394.80 470.75,394.80 471.00,394.80 471.25,394.80 471.50,394.80 471.75,394.80 472.00,394.80 472.25,394.80 472.50,394.80 472.75,394.80 473.00,394.80 473.25,394.80 473.50,394.80 473.75,394.80 474.00,394.80 474.25,394.80 474.50,394.80 474.75,394.80 475.00,394.80 475.25,394.80 475.50,394.80 475.75,394.80 476.00,394.80 476.25,394.80 476.50,394.80 476.75,394.80 477.00,394.80 477.25,394.80 477.50,394.80 477.75,394.80 478.00,394.80 478.25,394.80 478.50,394.80 478.75,394.80 479.00,394.80 479.25,394.80 479.50,394.80 479.75,394.80 480.00,394.80 480.25,394.80 480.50,394.80 480.75,394.80 481.00,394.80 481.25,394.80 481.50,394.80 481.75,394.80 482.00,394.80 482.25,394.80 482.50,394.80 482.75,394.80 483.00,394.80 483.25,394.80 483.50,394.80 483.75,394.80 484.00,394.80 484.25,394.80 484.50,394.80 484.75,394.80 485.00,394.80 485.25,394.80 485.50,394.81 485.75,394.83 486.00,394.85 486.25,394.87 486.50,394.90 486.75,394.92 487.00,394.51 487.25,393.47 487.50,392.45 487.75,391.44 488.00,390.44 488.25,389.46 488.50,388.50 488.75,387.55 489.00,386.61 489.25,385.69 489.50,384.78 489.75,383.89 490.00,383.01 490.25,382.14 490.50,381.28 490.75,380.44 491.00,379.61 491.25,378.79 491.50,377.99 491.75,377.19 492.00,376.41 492.25,375.64 492.50,374.89 492.75,374.14 493.00,373.40 493.25,372.68 493.50,371.97 493.75,371.26 494.00,370.57 494.25,369.89 494.50,369.22 494.75,368.56 495.00,367.91 495.25,367.27 495.50,366.63 495.75,366.01 496.00,365.40 496.25,364.80 496.50,364.20 496.75,363.62 497.00,363.04 497.25,362.47 497.50,361.91 497.75,361.36 498.00,360.82 498.25,360.29 498.50,359.76 498.75,359.24 499.00,358.73 499.25,358.23 499.50,357.73 499.75,357.25 500.00,356.77 500.25,356.30 500.50,355.83 500.75,355.37 501.00,354.92 501.25,354.48 501.50,354.04 501.75,353.61 502.00,353.18 502.25,352.77 502.50,352.36 502.75,351.95 503.00,351.55 503.25,351.16 503.50,350.77 503.75,350.39 504.00,350.02 504.25,349.65 504.50,349.29 504.75,348.93 505.00,348.58 505.25,348.23 505.50,347.89 505.75,347.55 506.00,347.22 506.25,346.90 506.50,346.58 506.75,346.26 507.00,345.95 507.25,345.65 507.50,345.35 507.75,345.05 508.00,344.76 508.25,344.47 508.50,344.19 508.75,343.91 509.00,343.64 509.25,343.37 509.50,343.10 509.75,342.84 510.00,342.59 510.25,342.33 510.50,342.08 510.75,341.84 511.00,341.60 511.25,341.36 511.50,341.13 511.75,340.90 512.00,340.67 512.25,340.45 512.50,340.23 512.75,340.02 513.00,339.81 513.25,339.60 513.50,339.39 513.75,339.19 514.00,338.99 514.25,338.80 514.50,338.61 514.75,338.42 515.00,338.23 515.25,338.05 515.50,337.87 515.75,337.69 516.00,337.52 516.25,337.35 516.50,337.18 516.75,337.01 517.00,336.85 517.25,336.69 517.50,336.53 517.75,336.38 518.00,336.23 518.25,336.08 518.50,335.93 518.75,335.79 519.00,335.64 519.25,335.50 519.50,335.37 519.75,335.23 520.00,335.10 520.25,334.97 520.50,334.84 520.75,334.71 521.00,334.59 521.25,334.47 521.50,334.35 521.75,334.23 522.00,334.11 522.25,334.00 522.50,333.89 522.75,333.78 523.00,333.67 523.25,333.57 523.50,333.46 523.75,333.36 524.00,333.26 524.25,333.16 524.50,333.06 524.75,332.97 525.00,332.88 525.25,332.78 525.50,332.69 525.75,332.60 526.00,332.52 526.25,332.43 526.50,332.35 526.75,332.27 527.00,332.19 527.25,332.11 527.50,332.03 527.75,331.95 528.00,331.88 528.25,331.81 528.50,331.73 528.75,331.66 529.00,331.59 529.25,331.53 529.50,331.46 529.75,331.39 530.00,331.33 530.25,331.27 530.50,331.21 530.75,331.14 531.00,331.09 531.25,331.03 531.50,330.97 531.75,330.92 532.00,330.86 532.25,330.81 532.50,330.76 532.75,330.70 533.00,330.65 533.25,330.60 533.50,330.56 533.75,330.51 534.00,330.46 534.25,330.42 534.50,330.37 534.75,330.33 535.00,330.29 535.25,330.25 535.50,330.21 535.75,330.17 536.00,330.13 536.25,330.09 536.50,330.06 536.75,330.02 537.00,329.98 537.25,329.95 537.50,329.92 537.75,329.88 538.00,329.85 538.25,329.82 538.50,329.79 538.75,329.76 539.00,329.73 539.25,329.70 539.50,329.68 539.75,329.65 540.00,329.63 540.25,329.60 540.50,329.58 540.75,329.55 541.00,329.53 541.25,329.51 541.50,329.48 541.75,329.46 542.00,329.44 542.25,329.42 542.50,329.40 542.75,329.38 543.00,329.37 543.25,329.35 543.50,329.33 543.75,329.32 544.00,329.30 544.25,329.28 544.50,329.27 544.75,329.26 545.00,329.24 545.25,329.23 545.50,329.22 545.75,329.20 546.00,329.19 546.25,329.18 546.50,329.17 546.75,329.16 547.00,329.15 547.25,329.14 547.50,329.13 547.75,329.12 548.00,329.12 548.25,329.11 548.50,329.10 548.75,329.09 549.00,329.09 549.25,329.08 549.50,329.08 549.75,329.07 550.00,329.07 550.25,329.06 550.50,329.06 550.75,329.06 551.00,329.05 551.25,329.05 551.50,329.05 551.75,329.05 552.00,329.04 552.25,329.04 552.50,329.04 552.75,329.04 553.00,329.04 553.25,329.04 553.50,329.04 553.75,329.04 554.00,329.04 554.25,329.04 554.50,329.04 554.75,329.05 555.00,329.05 555.25,329.05 555.50,329.05 555.75,329.06 556.00,329.06 556.25,329.06 556.50,329.07 556.75,329.07 557.00,329.08 557.25,329.08 557.50,329.08 557.75,329.09 558.00,329.10 558.25,329.10 558.50,329.11 558.75,329.11 559.00,329.12 559.25,329.13 559.50,329.13 559.75,329.14 560.00,329.15 560.25,329.15 560.50,329.16 560.75,329.17 561.00,329.18 561.25,329.18 561.50,329.19 561.75,329.20 562.00,329.21 562.25,329.22 562.50,329.23 562.75,329.24 563.00,329.25 563.25,329.26 563.50,329.27 563.75,329.28 564.00,329.29 564.25,329.30 564.50,329.31 564.75,329.32 565.00,329.33 565.25,329.34 565.50,329.35 565.75,329.36 566.00,329.37 566.25,329.39 566.50,329.40 566.75,329.41 567.00,329.42 567.25,329.43 567.50,329.45 567.75,329.46 568.00,329.47 568.25,329.48 568.50,329.50 568.75,329.51 569.00,329.52 569.25,329.54 569.50,329.55 569.75,329.56 570.00,329.58 570.25,329.59 570.50,329.61 570.75,329.62 571.00,329.63 571.25,329.65 571.50,329.66 571.75,329.68 572.00,329.69 572.25,329.71 572.50,329.72 572.75,329.74 573.00,329.75 573.25,329.77 573.50,329.78 573.75,329.80 574.00,329.81 574.25,329.83 574.50,329.84 574.75,329.86 575.00,329.87 575.25,329.89 575.50,329.91 575.75,329.92 576.00,329.94 576.25,329.95 576.50,329.97 576.75,329.99 577.00,330.00 577.25,330.02 577.50,330.04 577.75,330.05 578.00,330.07 578.25,330.09 578.50,330.10 578.75,330.12 579.00,330.14 579.25,330.15 579.50,330.17 579.75,330.19 580.00,330.21 580.25,330.22 580.50,330.24 580.75,330.26 581.00,330.28 581.25,330.29 581.50,330.31 581.75,330.33 582.00,330.35 582.25,330.36 582.50,330.38 582.75,330.40 583.00,330.42 583.25,330.44 583.50,330.46 583.75,330.47 584.00,330.49 584.25,330.51 584.50,330.53 584.75,330.55 585.00,330.57 585.25,330.58 585.50,330.60 585.75,330.62 586.00,330.64 586.25,330.66 586.50,330.68 586.75,330.70 587.00,330.71 587.25,330.73 587.50,330.75 587.75,330.77 588.00,330.79 588.25,330.81 588.50,330.83 588.75,330.85 589.00,330.87 589.25,330.89 589.50,330.91 589.75,330.92 590.00,330.94 590.25,330.96 590.50,330.98 590.75,331.00 591.00,331.02 591.25,331.04 591.50,331.06 591.75,331.08 592.00,331.10 592.25,331.12 592.50,331.14 592.75,331.16 593.00,331.18 593.25,331.20 593.50,331.22 593.75,331.24 594.00,331.26 594.25,331.28 594.50,331.30 594.75,331.32 595.00,331.34 595.25,331.36 595.50,331.38 595.75,331.40 596.00,331.42 596.25,331.44 596.50,331.46 596.75,331.48 597.00,331.50 597.25,331.52 597.50,331.54 597.75,331.56 598.00,331.58 598.25,331.60 598.50,331.62 598.75,331.64 599.00,331.66 599.25,331.68 599.50,331.70 599.75,331.72 600.00,331.74 600.25,331.76 600.50,331.78 600.75,331.80 601.00,331.82 601.25,331.84 601.50,331.86 601.75,331.89 602.00,331.91 602.25,331.93 602.50,331.95 602.75,331.97 603.00,331.99 603.25,332.01 603.50,332.03 603.75,332.05 604.00,332.07 604.25,332.09 604.50,332.11 604.75,332.13 605.00,332.15 605.25,332.18 605.50,332.20 605.75,332.22 606.00,332.24 606.25,332.26 606.50,332.28 606.75,332.30 607.00,332.32 607.25,332.34 607.50,332.36 607.75,332.38 608.00,332.41 608.25,332.43 608.50,332.45 608.75,332.47 609.00,332.49 609.25,332.51 609.50,332.53 609.75,332.55 610.00,332.57 610.25,332.59 610.50,332.62 610.75,332.64 611.00,332.66 611.25,332.68 611.50,332.70 611.75,332.72 612.00,332.74 612.25,332.76 612.50,332.78 612.75,332.81 613.00,332.83 613.25,332.85 613.50,332.87 613.75,332.89 614.00,332.91 614.25,332.93 614.50,332.95 614.75,332.98 615.00,333.00 615.25,333.02 615.50,333.04 615.75,333.06 616.00,333.08 616.25,333.10 616.50,333.12 616.75,333.15 617.00,333.17 617.25,333.19 617.50,333.21 617.75,333.23 618.00,333.25 618.25,333.27 618.50,333.30 618.75,333.32 619.00,333.34 619.25,333.36 619.50,333.38 619.75,333.40 620.00,333.42 620.25,333.45 620.50,333.47 620.75,333.49 621.00,333.51 621.25,333.53 621.50,333.55 621.75,333.57 622.00,333.60 622.25,333.62 622.50,333.64 622.75,333.66 623.00,333.68 623.25,333.70 623.50,333.72 623.75,333.75 624.00,333.77 624.25,333.79 624.50,333.81 624.75,333.83 625.00,333.85 625.25,333.87 625.50,333.90 625.75,333.92 626.00,333.94 626.25,333.96 626.50,333.98 626.75,334.00 627.00,334.03 627.25,334.05 627.50,334.07 627.75,334.09 628.00,334.11 628.25,334.13 628.50,334.15 628.75,334.18 629.00,334.20 629.25,334.22 629.50,334.24 629.75,334.28 630.00,334.49 630.25,334.89 630.50,335.48 630.75,336.25 631.00,337.21 631.25,338.35 631.50,339.67 631.75,341.16 632.00,342.82 632.25,344.64 632.50,346.62 632.75,348.76 633.00,351.03 633.25,353.45 633.50,355.99 633.75,358.66 634.00,361.44 634.25,364.33 634.50,367.31 634.75,370.38 635.00,373.52 635.25,376.74 635.50,380.01 635.75,383.32 636.00,386.67 636.25,390.05 636.50,393.44 636.75,394.80 637.00,394.80 637.25,394.80 637.50,394.80 637.75,394.80 638.00,394.80 638.25,394.80 638.50,394.80 638.75,394.80 639.00,394.80 639.25,394.80 639.50,394.80 639.75,394.80 640.00,394.80 640.25,394.80 640.50,394.80 640.75,394.80 641.00,394.80 641.25,394.80 641.50,394.80 641.75,394.80 642.00,394.80 642.25,394.80 642.50,394.80 642.75,394.80 643.00,394.80 643.25,394.80 643.50,394.80 643.75,394.80 644.00,394.80 644.25,394.80 644.50,394.80 644.75,394.80 645.00,394.80 645.25,394.80 645.50,394.80 645.75,394.80 646.00,394.80 646.25,394.80 646.50,394.80 646.75,394.80 647.00,394.80 647.25,394.80 647.50,394.80 647.75,394.80 648.00,394.80 648.25,394.80 648.50,394.80 648.75,394.80 649.00,394.80 649.25,394.80 649.50,394.80 649.75,394.80 650.00,394.80 650.25,394.80 650.50,394.80 650.75,394.80 651.00,394.80 651.25,394.80 651.50,394.80 651.75,394.80 652.00,394.80 652.25,394.80 652.50,394.80 652.75,394.80 653.00,394.80 653.25,394.80 653.50,394.80 653.75,394.80 654.00,394.80 654.25,394.80 654.50,394.80 654.75,394.80 655.00,394.80 655.25,394.80 655.50,394.80 655.75,394.80 656.00,394.80 656.25,394.80 656.50,394.80 656.75,394.80 657.00,394.80 657.25,394.80 657.50,394.80 657.75,394.80 658.00,394.80 658.25,394.80 658.50,394.80 658.75,394.80 659.00,394.80 659.25,394.80 659.50,394.80 659.75,394.80 660.00,394.80 660.25,394.80 660.50,394.80 660.75,394.80 661.00,394.80 661.25,394.80 661.50,394.80 661.75,394.80 662.00,394.80 662.25,394.80 662.50,394.80 662.75,394.80 663.00,394.80 663.25,394.80 663.50,394.80 663.75,394.80 664.00,394.80 664.25,394.80 664.50,394.80 664.75,394.81 665.00,394.83 665.25,394.86 665.50,394.88 665.75,394.90 666.00,394.92 666.25,394.30 666.50,393.26 666.75,392.24 667.00,391.24 667.25,390.25 667.50,389.27 667.75,388.31 668.00,387.36 668.25,386.43 668.50,385.51 668.75,384.60 669.00,383.71 669.25,382.83 669.50,381.97 669.75,381.11 670.00,380.27 670.25,379.45 670.50,378.63 670.75,377.83 671.00,377.04 671.25,376.26 671.50,375.49 671.75,374.74 672.00,373.99 672.25,373.26 672.50,372.54 672.75,371.83 673.00,371.13 673.25,370.44 673.50,369.76 673.75,369.09 674.00,368.43 674.25,367.78 674.50,367.14 674.75,366.51 675.00,365.89 675.25,365.28 675.50,364.68 675.75,364.08 676.00,363.50 676.25,362.93 676.50,362.36 676.75,361.80 677.00,361.25 677.25,360.71 677.50,360.18 677.75,359.66 678.00,359.14 678.25,358.63 678.50,358.13 678.75,357.64 679.00,357.15 679.25,356.67 679.50,356.20 679.75,355.74 680.00,355.28 680.25,354.83 680.50,354.39 680.75,353.95 681.00,353.52 681.25,353.10 681.50,352.68 681.75,352.27 682.00,351.87 682.25,351.47 682.50,351.08 682.75,350.70 683.00,350.32 683.25,349.94 683.50,349.58 683.75,349.21 684.00,348.86 684.25,348.51 684.50,348.16 684.75,347.82 685.00,347.49 685.25,347.16 685.50,346.83 685.75,346.51 686.00,346.20 686.25,345.89 686.50,345.59 686.75,345.29 687.00,344.99 687.25,344.70 687.50,344.41 687.75,344.13 688.00,343.86 688.25,343.58 688.50,343.31 688.75,343.05 689.00,342.79 689.25,342.53 689.50,342.28 689.75,342.04 690.00,341.79 690.25,341.55 690.50,341.31 690.75,341.08 691.00,340.85 691.25,340.63 691.50,340.41 691.75,340.19 692.00,339.98 692.25,339.76 692.50,339.56 692.75,339.35 693.00,339.15 693.25,338.95 693.50,338.76 693.75,338.57 694.00,338.38 694.25,338.19 694.50,338.01 694.75,337.83 695.00,337.66 695.25,337.48 695.50,337.31 695.75,337.15 696.00,336.98 696.25,336.82 696.50,336.66 696.75,336.50 697.00,336.35 697.25,336.20 697.50,336.05 697.75,335.90 698.00,335.76 698.25,335.62 698.50,335.48 698.75,335.34 699.00,335.20 699.25,335.07 699.50,334.94 699.75,334.81 700.00,334.69 700.25,334.57 700.50,334.44 700.75,334.32 701.00,334.21 701.25,334.09 701.50,333.98 701.75,333.87 702.00,333.76 702.25,333.65 702.50,333.54 702.75,333.44 703.00,333.34 703.25,333.24 703.50,333.14 703.75,333.04 704.00,332.95 704.25,332.86 704.50,332.77 704.75,332.68 705.00,332.59 705.25,332.50 705.50,332.42 705.75,332.33 706.00,332.25 706.25,332.17 706.50,332.09 706.75,332.01 707.00,331.94 707.25,331.86 707.50,331.79 707.75,331.72 708.00,331.65 708.25,331.58 708.50,331.51 708.75,331.45 709.00,331.38 709.25,331.32 709.50,331.25 709.75,331.19 710.00,331.13 710.25,331.07 710.50,331.02 710.75,330.96 711.00,330.90 711.25,330.85 711.50,330.80 711.75,330.74 712.00,330.69 712.25,330.64 712.50,330.60 712.75,330.55 713.00,330.50 713.25,330.45 713.50,330.41 713.75,330.37 714.00,330.32 714.25,330.28 714.50,330.24 714.75,330.20 715.00,330.16 715.25,330.12 715.50,330.08 715.75,330.05 716.00,330.01 716.25,329.98 716.50,329.94 716.75,329.91 717.00,329.88 717.25,329.85 717.50,329.82 717.75,329.79 718.00,329.76 718.25,329.73 718.50,329.70 718.75,329.67 719.00,329.65 719.25,329.62 719.50,329.60 719.75,329.57 720.00,329.55 720.25,329.52 720.50,329.50 720.75,329.48 721.00,329.46 721.25,329.44 721.50,329.42 721.75,329.40 722.00,329.38 722.25,329.36 722.50,329.35 722.75,329.33 723.00,329.31 723.25,329.30 723.50,329.28 723.75,329.27 724.00,329.25 724.25,329.24 724.50,329.23 724.75,329.21 725.00,329.20 725.25,329.19 725.50,329.18 725.75,329.17 726.00,329.16 726.25,329.15 726.50,329.14 726.75,329.13 727.00,329.12 727.25,329.11 727.50,329.11 727.75,329.10 728.00,329.09 728.25,329.09 728.50,329.08 728.75,329.08 729.00,329.07 729.25,329.07 729.50,329.06 729.75,329.06 730.00,329.05 730.25,329.05 730.50,329.05 730.75,329.05 731.00,329.04 731.25,329.04 731.50,329.04 731.75,329.04 732.00,329.04 732.25,329.04 732.50,329.04 732.75,329.04 733.00,329.04 733.25,329.04 733.50,329.04 733.75,329.04 734.00,329.05 734.25,329.05 734.50,329.05 734.75,329.05 735.00,329.06 735.25,329.06 735.50,329.06 735.75,329.07 736.00,329.07 736.25,329.08 736.50,329.08 736.75,329.09 737.00,329.09 737.25,329.10 737.50,329.10 737.75,329.11 738.00,329.11 738.25,329.12 738.50,329.13 738.75,329.13 739.00,329.14 739.25,329.15 739.50,329.15 739.75,329.16 740.00,329.17 740.25,329.18 740.50,329.19 740.75,329.19 741.00,329.20 741.25,329.21 741.50,329.22 741.75,329.23 742.00,329.24 742.25,329.25 742.50,329.26 742.75,329.27 743.00,329.28 743.25,329.29 743.50,329.30 743.75,329.31 744.00,329.32 744.25,329.33 744.50,329.34 744.75,329.35 745.00,329.37 745.25,329.38 745.50,329.39 745.75,329.40 746.00,329.41 746.25,329.42 746.50,329.44 746.75,329.45 747.00,329.46 747.25,329.47 747.50,329.49 747.75,329.50 748.00,329.51 748.25,329.53 748.50,329.54 748.75,329.55 749.00,329.57 749.25,329.58 749.50,329.59 749.75,329.61 750.00,329.62 750.25,329.64 750.50,329.65 750.75,329.67 751.00,329.68 751.25,329.69 751.50,329.71 751.75,329.72 752.00,329.74 752.25,329.75 752.50,329.77 752.75,329.78 753.00,329.80 753.25,329.81 753.50,329.83 753.75,329.85 754.00,329.86 754.25,329.88 754.50,329.89 754.75,329.91 755.00,329.93 755.25,329.94 755.50,329.96 755.75,329.97 756.00,329.99 756.25,330.01 756.50,330.02 756.75,330.04 757.00,330.06 757.25,330.07 757.50,330.09 757.75,330.11 758.00,330.12 758.25,330.14 758.50,330.16 758.75,330.18 759.00,330.19 759.25,330.21 759.50,330.23 759.75,330.24 760.00,330.26 760.25,330.28 760.50,330.30 760.75,330.32 761.00,330.33 761.25,330.35 761.50,330.37 761.75,330.39 762.00,330.40 762.25,330.42 762.50,330.44 762.75,330.46 763.00,330.48 763.25,330.50 763.50,330.51 763.75,330.53 764.00,330.55 764.25,330.57 764.50,330.59 764.75,330.61 765.00,330.62 765.25,330.64 765.50,330.66 765.75,330.68 766.00,330.70 766.25,330.72 766.50,330.74 766.75,330.76 767.00,330.78 767.25,330.79 767.50,330.81 767.75,330.83 768.00,330.85 768.25,330.87 768.50,330.89 768.75,330.91 769.00,330.93 769.25,330.95 769.50,330.97 769.75,330.99 770.00,331.01 770.25,331.03 770.50,331.04 770.75,331.06 771.00,331.08 771.25,331.10 771.50,331.12 771.75,331.14 772.00,331.16 772.25,331.18 772.50,331.20 772.75,331.22 773.00,331.24 773.25,331.26 773.50,331.28 773.75,331.30 774.00,331.32 774.25,331.34 774.50,331.36 774.75,331.38 775.00,331.40 775.25,331.42 775.50,331.44 775.75,331.46 776.00,331.48 776.25,331.50 776.50,331.52 776.75,331.54 777.00,331.56 777.25,331.58 777.50,331.60 777.75,331.62 778.00,331.64 778.25,331.66 778.50,331.68 778.75,331.71 779.00,331.73 779.25,331.75 779.50,331.77 779.75,331.79 780.00,331.81 780.25,331.83 780.50,331.85 780.75,331.87 781.00,331.89 781.25,331.91 781.50,331.93 781.75,331.95 782.00,331.97 782.25,331.99 782.50,332.01 782.75,332.03 783.00,332.05 783.25,332.08 783.50,332.10 783.75,332.12 784.00,332.14 784.25,332.16 784.50,332.18 784.75,332.20 785.00,332.22 785.25,332.24 785.50,332.26 785.75,332.28 786.00,332.30 786.25,332.33 786.50,332.35 786.75,332.37 787.00,332.39 787.25,332.41 787.50,332.43 787.75,332.45 788.00,332.47 788.25,332.49 788.50,332.51 788.75,332.54 789.00,332.56 789.25,332.58 789.50,332.60 789.75,332.62 790.00,332.64 790.25,332.66 790.50,332.68 790.75,332.70 791.00,332.73 791.25,332.75 791.50,332.77 791.75,332.79 792.00,332.81 792.25,332.83 792.50,332.85 792.75,332.87 793.00,332.89 793.25,332.92 793.50,332.94 793.75,332.96 794.00,332.98 794.25,333.00 794.50,333.02 794.75,333.04 795.00,333.07 795.25,333.09 795.50,333.11 795.75,333.13 796.00,333.15 796.25,333.17 796.50,333.19 796.75,333.21 797.00,333.24 797.25,333.26 797.50,333.28 797.75,333.30 798.00,333.32 798.25,333.34 798.50,333.36 798.75,333.39 799.00,333.41 799.25,333.43 799.50,333.45 799.75,333.47 800.00,333.49 800.25,333.51 800.50,333.54 800.75,333.56 801.00,333.58 801.25,333.60 801.50,333.62 801.75,333.64 802.00,333.66 802.25,333.69 802.50,333.71 802.75,333.73 803.00,333.75 803.25,333.77 803.50,333.79 803.75,333.81 804.00,333.84 804.25,333.86 804.50,333.88 804.75,333.90 805.00,333.92 805.25,333.94 805.50,333.97 805.75,333.99 806.00,334.01 806.25,334.03 806.50,334.05 806.75,334.07 807.00,334.09 807.25,334.12 807.50,334.14 807.75,334.16 808.00,334.18 808.25,334.20 808.50,334.22 808.75,334.25 809.00,334.31 809.25,334.56 809.50,335.00 809.75,335.62 810.00,336.43 810.25,337.43 810.50,338.60 810.75,339.95 811.00,341.48 811.25,343.17 811.50,345.03 811.75,347.04 812.00,349.20 812.25,351.51 812.50,353.95 812.75,356.52 813.00,359.21 813.25,362.01 813.50,364.92 813.75,367.92 814.00,371.00 814.25,374.16 814.50,377.39 814.75,380.66 815.00,383.99 815.25,387.35 815.50,390.73 815.75,394.12 816.00,394.80 816.25,394.80 816.50,394.80 816.75,394.80 817.00,394.80 817.25,394.80 817.50,394.80 817.75,394.80 818.00,394.80 818.25,394.80 818.50,394.80 818.75,394.80 819.00,394.80 819.25,394.80 819.50,394.80 819.75,394.80 820.00,394.80 820.25,394.80 820.50,394.80 820.75,394.80 821.00,394.80 821.25,394.80 821.50,394.80 821.75,394.80 822.00,394.80 822.25,394.80 822.50,394.80 822.75,394.80 823.00,394.80 823.25,394.80 823.50,394.80 823.75,394.80 824.00,394.80 824.25,394.80 824.50,394.80 824.75,394.80 825.00,394.80 825.25,394.80 825.50,394.80 825.75,394.80 826.00,394.80 826.25,394.80 826.50,394.80 826.75,394.80 827.00,394.80 827.25,394.80 827.50,394.80 827.75,394.80 828.00,394.80 828.25,394.80 828.50,394.80 828.75,394.80 829.00,394.80 829.25,394.80 829.50,394.80 829.75,394.80 830.00,394.80 830.25,394.80 830.50,394.80 830.75,394.80 831.00,394.80 831.25,394.80 831.50,394.80 831.75,394.80 832.00,394.80 832.25,394.80 832.50,394.80 832.75,394.80 833.00,394.80 833.25,394.80 833.50,394.80 833.75,394.80 834.00,394.80 834.25,394.80 834.50,394.80 834.75,394.80 835.00,394.80 835.25,394.80 835.50,394.80 835.75,394.80 836.00,394.80 836.25,394.80 836.50,394.80 836.75,394.80 837.00,394.80 837.25,394.80 837.50,394.80 837.75,394.80 838.00,394.80 838.25,394.80 838.50,394.80 838.75,394.80 839.00,394.80 839.25,394.80 839.50,394.80 839.75,394.80 840.00,394.80 840.25,394.80 840.50,394.80 840.75,394.80 841.00,394.80 841.25,394.80 841.50,394.80 841.75,394.80 842.00,394.80 842.25,394.80 842.50,394.80 842.75,394.80 843.00,394.80 843.25,394.80 843.50,394.80 843.75,394.80 844.00,394.82 844.25,394.84 844.50,394.86 844.75,394.88 845.00,394.90 845.25,394.93 845.50,394.09 845.75,393.06 846.00,392.04 846.25,391.04 846.50,390.05 846.75,389.08 847.00,388.12 847.25,387.17 847.50,386.24 847.75,385.33 848.00,384.42 848.25,383.53 848.50,382.66 848.75,381.79 849.00,380.94 849.25,380.11 849.50,379.28 849.75,378.47 850.00,377.67 850.25,376.88 850.50,376.10 850.75,375.34 851.00,374.59 851.25,373.84 851.50,373.11 851.75,372.39 852.00,371.68 852.25,370.99 852.50,370.30 852.75,369.62 853.00,368.95 853.25,368.30 853.50,367.65 853.75,367.01 854.00,366.38 854.25,365.77 854.50,365.16 854.75,364.56 855.00,363.97 855.25,363.38 855.50,362.81 855.75,362.25 856.00,361.69 856.25,361.14 856.50,360.60 856.75,360.07 857.00,359.55 857.25,359.04 857.50,358.53 857.75,358.03 858.00,357.54 858.25,357.05 858.50,356.58 858.75,356.11 859.00,355.65 859.25,355.19 859.50,354.74 859.75,354.30 860.00,353.87 860.25,353.44 860.50,353.02 860.75,352.60 861.00,352.19 861.25,351.79 861.50,351.39 861.75,351.00 862.00,350.62 862.25,350.24 862.50,349.87 862.75,349.50 863.00,349.14 863.25,348.79 863.50,348.44 863.75,348.09 864.00,347.75 864.25,347.42 864.50,347.09 864.75,346.77 865.00,346.45 865.25,346.14 865.50,345.83 865.75,345.53 866.00,345.23 866.25,344.93 866.50,344.64 866.75,344.36 867.00,344.08 867.25,343.80 867.50,343.53 867.75,343.26 868.00,343.00 868.25,342.74 868.50,342.48 868.75,342.23 869.00,341.99 869.25,341.74 869.50,341.50 869.75,341.27 870.00,341.04 870.25,340.81 870.50,340.58 870.75,340.36 871.00,340.15 871.25,339.93 871.50,339.72 871.75,339.52 872.00,339.31 872.25,339.11 872.50,338.91 872.75,338.72 873.00,338.53 873.25,338.34 873.50,338.16 873.75,337.98 874.00,337.80 874.25,337.62 874.50,337.45 874.75,337.28 875.00,337.11 875.25,336.95 875.50,336.79 875.75,336.63 876.00,336.47 876.25,336.32 876.50,336.17 876.75,336.02 877.00,335.87 877.25,335.73 877.50,335.59 877.75,335.45 878.00,335.31 878.25,335.18 878.50,335.05 878.75,334.92 879.00,334.79 879.25,334.66 879.50,334.54 879.75,334.42 880.00,334.30 880.25,334.18 880.50,334.07 880.75,333.96 881.00,333.85 881.25,333.74 881.50,333.63 881.75,333.52 882.00,333.42 882.25,333.32 882.50,333.22 882.75,333.12 883.00,333.03 883.25,332.93 883.50,332.84 883.75,332.75 884.00,332.66 884.25,332.57 884.50,332.48 884.75,332.40 885.00,332.32 885.25,332.23 885.50,332.15 885.75,332.08 886.00,332.00 886.25,331.92 886.50,331.85 886.75,331.78 887.00,331.70 887.25,331.63 887.50,331.57 887.75,331.50 888.00,331.43 888.25,331.37 888.50,331.30 888.75,331.24 889.00,331.18 889.25,331.12 889.50,331.06 889.75,331.01 890.00,330.95 890.25,330.89 890.50,330.84 890.75,330.79 891.00,330.73 891.25,330.68 891.50,330.63 891.75,330.59 892.00,330.54 892.25,330.49 892.50,330.45 892.75,330.40 893.00,330.36 893.25,330.31 893.50,330.27 893.75,330.23 894.00,330.19 894.25,330.15 894.50,330.11 894.75,330.08 895.00,330.04 895.25,330.01 895.50,329.97 895.75,329.94 896.00,329.90 896.25,329.87 896.50,329.84 896.75,329.81 897.00,329.78 897.25,329.75 897.50,329.72 897.75,329.69 898.00,329.67 898.25,329.64 898.50,329.62 898.75,329.59 899.00,329.57 899.25,329.54 899.50,329.52 899.75,329.50 900.00,329.48 900.25,329.45 900.50,329.43 900.75,329.41 901.00,329.40 901.25,329.38 901.50,329.36 901.75,329.34 902.00,329.33 902.25,329.31 902.50,329.29 902.75,329.28 903.00,329.26 903.25,329.25 903.50,329.24 903.75,329.22 904.00,329.21 904.25,329.20 904.50,329.19 904.75,329.18 905.00,329.17 905.25,329.16 905.50,329.15 905.75,329.14 906.00,329.13 906.25,329.12 906.50,329.11 906.75,329.11 907.00,329.10 907.25,329.09 907.50,329.09 907.75,329.08 908.00,329.07 908.25,329.07 908.50,329.07 908.75,329.06 909.00,329.06 909.25,329.05 909.50,329.05 909.75,329.05 910.00,329.05 910.25,329.04 910.50,329.04 910.75,329.04 911.00,329.04 911.25,329.04 911.50,329.04 911.75,329.04 912.00,329.04 912.25,329.04 912.50,329.04 912.75,329.04 913.00,329.05 913.25,329.05 913.50,329.05 913.75,329.05 914.00,329.05 914.25,329.06 914.50,329.06 914.75,329.06 915.00,329.07 915.25,329.07 915.50,329.08 915.75,329.08 916.00,329.09 916.25,329.09 916.50,329.10 916.75,329.10 917.00,329.11 917.25,329.11 917.50,329.12 917.75,329.13 918.00,329.13 918.25,329.14 918.50,329.15 918.75,329.16 919.00,329.16 919.25,329.17 919.50,329.18 919.75,329.19 920.00,329.20 920.25,329.21 920.50,329.21 920.75,329.22 921.00,329.23 921.25,329.24 921.50,329.25 921.75,329.26 922.00,329.27 922.25,329.28 922.50,329.29 922.75,329.30 923.00,329.31 923.25,329.32 923.50,329.33 923.75,329.35 924.00,329.36 924.25,329.37 924.50,329.38 924.75,329.39 925.00,329.40 925.25,329.41 925.50,329.43 925.75,329.44 926.00,329.45 926.25,329.46 926.50,329.48 926.75,329.49 927.00,329.50 927.25,329.52 927.50,329.53 927.75,329.54 928.00,329.56 928.25,329.57 928.50,329.58 928.75,329.60 929.00,329.61 929.25,329.63 929.50,329.64 929.75,329.65 930.00,329.67 930.25,329.68 930.50,329.70 930.75,329.71 931.00,329.73 931.25,329.74 931.50,329.76 931.75,329.77 932.00,329.79 932.25,329.80 932.50,329.82 932.75,329.83 933.00,329.85 933.25,329.86 933.50,329.88 933.75,329.90 934.00,329.91 934.25,329.93 934.50,329.94 934.75,329.96 935.00,329.98 935.25,329.99 935.50,330.01 935.75,330.03 936.00,330.04 936.25,330.06 936.50,330.08 936.75,330.09 937.00,330.11 937.25,330.13 937.50,330.14 937.75,330.16 938.00,330.18 938.25,330.20 938.50,330.21 938.75,330.23 939.00,330.25 939.25,330.27 939.50,330.28 939.75,330.30 940.00,330.32 940.25,330.34 940.50,330.35 940.75,330.37 941.00,330.39 941.25,330.41 941.50,330.43 941.75,330.44 942.00,330.46 942.25,330.48 942.50,330.50 942.75,330.52 943.00,330.54 943.25,330.55 943.50,330.57 943.75,330.59 944.00,330.61 944.25,330.63 944.50,330.65 944.75,330.67 945.00,330.68 945.25,330.70 945.50,330.72 945.75,330.74 946.00,330.76 946.25,330.78 946.50,330.80 946.75,330.82 947.00,330.84 947.25,330.86 947.50,330.87 947.75,330.89 948.00,330.91 948.25,330.93 948.50,330.95 948.75,330.97 949.00,330.99 949.25,331.01 949.50,331.03 949.75,331.05 950.00,331.07 950.25,331.09 950.50,331.11 950.75,331.13 951.00,331.15 951.25,331.17 951.50,331.19 951.75,331.21 952.00,331.23 952.25,331.25 952.50,331.27 952.75,331.29 953.00,331.31 953.25,331.33 953.50,331.35 953.75,331.37 954.00,331.39 954.25,331.41 954.50,331.43 954.75,331.45 955.00,331.47 955.25,331.49 955.50,331.51 955.75,331.53 956.00,331.55 956.25,331.57 956.50,331.59 956.75,331.61 957.00,331.63 957.25,331.65 957.50,331.67 957.75,331.69 958.00,331.71 958.25,331.73 958.50,331.75 958.75,331.77 959.00,331.79 959.25,331.81 959.50,331.83 959.75,331.85 960.00,331.87 960.25,331.89 960.50,331.91 960.75,331.93 961.00,331.96 961.25,331.98 961.50,332.00 961.75,332.02 962.00,332.04 962.25,332.06 962.50,332.08 962.75,332.10 963.00,332.12 963.25,332.14 963.50,332.16 963.75,332.18 964.00,332.20 964.25,332.23 964.50,332.25 964.75,332.27 965.00,332.29 965.25,332.31 965.50,332.33 965.75,332.35 966.00,332.37 966.25,332.39 966.50,332.41 966.75,332.43 967.00,332.46 967.25,332.48 967.50,332.50 967.75,332.52 968.00,332.54 968.25,332.56 968.50,332.58 968.75,332.60 969.00,332.62 969.25,332.65 969.50,332.67 969.75,332.69 970.00,332.71 970.25,332.73 970.50,332.75 970.75,332.77 971.00,332.79 971.25,332.81 971.50,332.84 971.75,332.86 972.00,332.88 972.25,332.90 972.50,332.92 972.75,332.94 973.00,332.96 973.25,332.98 973.50,333.01 973.75,333.03 974.00,333.05 974.25,333.07 974.50,333.09 974.75,333.11 975.00,333.13 975.25,333.15 975.50,333.18 975.75,333.20 976.00,333.22 976.25,333.24 976.50,333.26 976.75,333.28 977.00,333.30 977.25,333.33 977.50,333.35 977.75,333.37 978.00,333.39 978.25,333.41 978.50,333.43 978.75,333.45 979.00,333.48 979.25,333.50 979.50,333.52 979.75,333.54 980.00,333.56 980.25,333.58 980.50,333.60 980.75,333.63 981.00,333.65 981.25,333.67 981.50,333.69 981.75,333.71 982.00,333.73 982.25,333.75 982.50,333.78 982.75,333.80 983.00,333.82 983.25,333.84 983.50,333.86 983.75,333.88 984.00,333.90 984.25,333.93 984.50,333.95 984.75,333.97 985.00,333.99 985.25,334.01 985.50,334.03 985.75,334.06 986.00,334.08 986.25,334.10 986.50,334.12 986.75,334.14 987.00,334.16 987.25,334.19 987.50,334.21 987.75,334.23 988.00,334.25 988.25,334.35 988.50,334.63 988.75,335.11 989.00,335.77 989.25,336.62 989.50,337.65 989.75,338.86 990.00,340.25 990.25,341.81 990.50,343.53 990.75,345.42 991.00,347.46 991.25,349.65 991.50,351.98 991.75,354.45 992.00,357.05 992.25,359.76 992.50,362.59 992.75,365.51 993.00,368.53 993.25,371.63 993.50,374.80 993.75,378.04 994.00,381.33 994.25,384.66 994.50,388.02 994.75,391.40 995.00,394.80 995.25,394.80 995.50,394.80 995.75,394.80 996.00,394.80 996.25,394.80 996.50,394.80 996.75,394.80 997.00,394.80 997.25,394.80 997.50,394.80 997.75,394.80 998.00,394.80 998.25,394.80 998.50,394.80 998.75,394.80 999.00,394.80 999.25,394.80 999.50,394.80 999.75,394.80 1000.00,394.80 1000.25,394.80 1000.50,394.80 1000.75,394.80 1001.00,394.80 1001.25,394.80 1001.50,394.80 1001.75,394.80 1002.00,394.80 1002.25,394.80 1002.50,394.80 1002.75,394.80 1003.00,394.80 1003.25,394.80 1003.50,394.80 1003.75,394.80 1004.00,394.80 1004.25,394.80 1004.50,394.80 1004.75,394.80 1005.00,394.80 1005.25,394.80 1005.50,394.80 1005.75,394.80 1006.00,394.80 1006.25,394.80 1006.50,394.80 1006.75,394.80 1007.00,394.80 1007.25,394.80 1007.50,394.80 1007.75,394.80 1008.00,394.80 1008.25,394.80 1008.50,394.80 1008.75,394.80 1009.00,394.80 1009.25,394.80 1009.50,394.80 1009.75,394.80 1010.00,394.80 1010.25,394.80 1010.50,394.80 1010.75,394.80 1011.00,394.80 1011.25,394.80 1011.50,394.80 1011.75,394.80 1012.00,394.80 1012.25,394.80 1012.50,394.80 1012.75,394.80 1013.00,394.80 1013.25,394.80 1013.50,394.80 1013.75,394.80 1014.00,394.80 1014.25,394.80 1014.50,394.80 1014.75,394.80 1015.00,394.80 1015.25,394.80 1015.50,394.80 1015.75,394.80 1016.00,394.80 1016.25,394.80 1016.50,394.80 1016.75,394.80 1017.00,394.80 1017.25,394.80 1017.50,394.80 1017.75,394.80 1018.00,394.80 1018.25,394.80 1018.50,394.80 1018.75,394.80 1019.00,394.80 1019.25,394.80 1019.50,394.80 1019.75,394.80 1020.00,394.80 1020.25,394.80 1020.50,394.80 1020.75,394.80 1021.00,394.80 1021.25,394.80 1021.50,394.80 1021.75,394.80 1022.00,394.80 1022.25,394.80 1022.50,394.80 1022.75,394.80 1023.00,394.80 1023.25,394.82 1023.50,394.84 1023.75,394.87 1024.00,394.89 1024.25,394.91 1024.50,394.93 1024.75,393.88 1025.00,392.85 1025.25,391.84 1025.50,390.84 1025.75,389.85 1026.00,388.88 1026.25,387.93 1026.50,386.99 1026.75,386.06 1027.00,385.14 1027.25,384.24 1027.50,383.36 1027.75,382.48 1028.00,381.62 1028.25,380.78 1028.50,379.94 1028.75,379.12 1029.00,378.31 1029.25,377.51 1029.50,376.72 1029.75,375.95 1030.00,375.19 1030.25,374.44 1030.50,373.70 1030.75,372.97 1031.00,372.25 1031.25,371.54 1031.50,370.85 1031.75,370.16 1032.00,369.49 1032.25,368.82 1032.50,368.17 1032.75,367.52 1033.00,366.89 1033.25,366.26 1033.50,365.64 1033.75,365.04 1034.00,364.44 1034.25,363.85 1034.50,363.27 1034.75,362.70 1035.00,362.14 1035.25,361.58 1035.50,361.04 1035.75,360.50 1036.00,359.97 1036.25,359.45 1036.50,358.93 1036.75,358.43 1037.00,357.93 1037.25,357.44 1037.50,356.96 1037.75,356.48 1038.00,356.02 1038.25,355.55 1038.50,355.10 1038.75,354.65 1039.00,354.21 1039.25,353.78 1039.50,353.35 1039.75,352.93 1040.00,352.52 1040.25,352.11 1040.50,351.71 1040.75,351.32 1041.00,350.93 1041.25,350.54 1041.50,350.17 1041.75,349.80 1042.00,349.43 1042.25,349.07 1042.50,348.72 1042.75,348.37 1043.00,348.03 1043.25,347.69 1043.50,347.36 1043.75,347.03 1044.00,346.71 1044.25,346.39 1044.50,346.08 1044.75,345.77 1045.00,345.47 1045.25,345.17 1045.50,344.87 1045.75,344.59 1046.00,344.30 1046.25,344.02 1046.50,343.75 1046.75,343.48 1047.00,343.21 1047.25,342.95 1047.50,342.69 1047.75,342.43 1048.00,342.18 1048.25,341.94 1048.50,341.69 1048.75,341.46 1049.00,341.22 1049.25,340.99 1049.50,340.76 1049.75,340.54 1050.00,340.32 1050.25,340.10 1050.50,339.89 1050.75,339.68 1051.00,339.47 1051.25,339.27 1051.50,339.07 1051.75,338.88 1052.00,338.68 1052.25,338.49 1052.50,338.31 1052.75,338.12 1053.00,337.94 1053.25,337.76 1053.50,337.59 1053.75,337.42 1054.00,337.25 1054.25,337.08 1054.50,336.92 1054.75,336.76 1055.00,336.60 1055.25,336.44 1055.50,336.29 1055.75,336.14 1056.00,335.99 1056.25,335.84 1056.50,335.70 1056.75,335.56 1057.00,335.42 1057.25,335.29 1057.50,335.15 1057.75,335.02 1058.00,334.89 1058.25,334.76 1058.50,334.64 1058.75,334.52 1059.00,334.40 1059.25,334.28 1059.50,334.16 1059.75,334.05 1060.00,333.93 1060.25,333.82 1060.50,333.71 1060.75,333.61 1061.00,333.50 1061.25,333.40 1061.50,333.30 1061.75,333.20 1062.00,333.10 1062.25,333.01 1062.50,332.91 1062.75,332.82 1063.00,332.73 1063.25,332.64 1063.50,332.55 1063.75,332.47 1064.00,332.38 1064.25,332.30 1064.50,332.22 1064.75,332.14 1065.00,332.06 1065.25,331.98 1065.50,331.91 1065.75,331.83 1066.00,331.76 1066.25,331.69 1066.50,331.62 1066.75,331.55 1067.00,331.49 1067.25,331.42 1067.50,331.36 1067.75,331.29 1068.00,331.23 1068.25,331.17 1068.50,331.11 1068.75,331.05 1069.00,330.99 1069.25,330.94 1069.50,330.88 1069.75,330.83 1070.00,330.78 1070.25,330.72 1070.50,330.67 1070.75,330.62 1071.00,330.58 1071.25,330.53 1071.50,330.48 1071.75,330.44 1072.00,330.39 1072.25,330.35 1072.50,330.31 1072.75,330.26 1073.00,330.22 1073.25,330.18 1073.50,330.15 1073.75,330.11 1074.00,330.07 1074.25,330.03 1074.50,330.00 1074.75,329.96 1075.00,329.93 1075.25,329.90 1075.50,329.87 1075.75,329.83 1076.00,329.80 1076.25,329.77 1076.50,329.74 1076.75,329.72 1077.00,329.69 1077.25,329.66 1077.50,329.64 1077.75,329.61 1078.00,329.59 1078.25,329.56 1078.50,329.54 1078.75,329.52 1079.00,329.49 1079.25,329.47 1079.50,329.45 1079.75,329.43 1080.00,329.41 1080.25,329.39 1080.50,329.37 1080.75,329.36 1081.00,329.34 1081.25,329.32 1081.50,329.31 1081.75,329.29 1082.00,329.28 1082.25,329.26 1082.50,329.25 1082.75,329.23 1083.00,329.22 1083.25,329.21 1083.50,329.20 1083.75,329.19 1084.00,329.17 1084.25,329.16 1084.50,329.15 1084.75,329.14 1085.00,329.14 1085.25,329.13 1085.50,329.12 1085.75,329.11 1086.00,329.10 1086.25,329.10 1086.50,329.09 1086.75,329.08 1087.00,329.08 1087.25,329.07 1087.50,329.07 1087.75,329.06 1088.00,329.06 1088.25,329.06 1088.50,329.05 1088.75,329.05 1089.00,329.05 1089.25,329.05 1089.50,329.04 1089.75,329.04 1090.00,329.04 1090.25,329.04 1090.50,329.04 1090.75,329.04 1091.00,329.04 1091.25,329.04 1091.50,329.04 1091.75,329.04 1092.00,329.04 1092.25,329.05 1092.50,329.05 1092.75,329.05 1093.00,329.05 1093.25,329.06 1093.50,329.06 1093.75,329.06 1094.00,329.07 1094.25,329.07 1094.50,329.07 1094.75,329.08 1095.00,329.08 1095.25,329.09 1095.50,329.09 1095.75,329.10 1096.00,329.10 1096.25,329.11 1096.50,329.12 1096.75,329.12 1097.00,329.13 1097.25,329.14 1097.50,329.14 1097.75,329.15 1098.00,329.16 1098.25,329.17 1098.50,329.17 1098.75,329.18 1099.00,329.19 1099.25,329.20 1099.50,329.21 1099.75,329.22 1100.00,329.22 1100.25,329.23 1100.50,329.24 1100.75,329.25 1101.00,329.26 1101.25,329.27 1101.50,329.28 1101.75,329.29 1102.00,329.30 1102.25,329.31 1102.50,329.33 1102.75,329.34 1103.00,329.35 1103.25,329.36 1103.50,329.37 1103.75,329.38 1104.00,329.39 1104.25,329.41 1104.50,329.42 1104.75,329.43 1105.00,329.44 1105.25,329.45 1105.50,329.47 1105.75,329.48 1106.00,329.49 1106.25,329.51 1106.50,329.52 1106.75,329.53 1107.00,329.55 1107.25,329.56 1107.50,329.57 1107.75,329.59 1108.00,329.60 1108.25,329.61 1108.50,329.63 1108.75,329.64 1109.00,329.66 1109.25,329.67 1109.50,329.69 1109.75,329.70 1110.00,329.72 1110.25,329.73 1110.50,329.74 1110.75,329.76 1111.00,329.78 1111.25,329.79 1111.50,329.81 1111.75,329.82 1112.00,329.84 1112.25,329.85 1112.50,329.87 1112.75,329.88 1113.00,329.90 1113.25,329.92 1113.50,329.93 1113.75,329.95 1114.00,329.96 1114.25,329.98 1114.50,330.00 1114.75,330.01 1115.00,330.03 1115.25,330.05 1115.50,330.06 1115.75,330.08 1116.00,330.10 1116.25,330.11 1116.50,330.13 1116.75,330.15 1117.00,330.16 1117.25,330.18 1117.50,330.20 1117.75,330.22 1118.00,330.23 1118.25,330.25 1118.50,330.27 1118.75,330.29 1119.00,330.30 1119.25,330.32 1119.50,330.34 1119.75,330.36 1120.00,330.38 1120.25,330.39 1120.50,330.41 1120.75,330.43 1121.00,330.45 1121.25,330.47 1121.50,330.48 1121.75,330.50 1122.00,330.52 1122.25,330.54 1122.50,330.56 1122.75,330.58 1123.00,330.59 1123.25,330.61 1123.50,330.63 1123.75,330.65 1124.00,330.67 1124.25,330.69 1124.50,330.71 1124.75,330.73 1125.00,330.74 1125.25,330.76 1125.50,330.78 1125.75,330.80 1126.00,330.82 1126.25,330.84 1126.50,330.86 1126.75,330.88 1127.00,330.90 1127.25,330.92 1127.50,330.94 1127.75,330.96 1128.00,330.97 1128.25,330.99 1128.50,331.01 1128.75,331.03 1129.00,331.05 1129.25,331.07 1129.50,331.09 1129.75,331.11 1130.00,331.13 1130.25,331.15 1130.50,331.17 1130.75,331.19 1131.00,331.21 1131.25,331.23 1131.50,331.25 1131.75,331.27 1132.00,331.29 1132.25,331.31 1132.50,331.33 1132.75,331.35 1133.00,331.37 1133.25,331.39 1133.50,331.41 1133.75,331.43 1134.00,331.45 1134.25,331.47 1134.50,331.49 1134.75,331.51 1135.00,331.53 1135.25,331.55 1135.50,331.57 1135.75,331.59 1136.00,331.61 1136.25,331.63 1136.50,331.65 1136.75,331.67 1137.00,331.69 1137.25,331.71 1137.50,331.73 1137.75,331.75 1138.00,331.77 1138.25,331.80 1138.50,331.82 1138.75,331.84 1139.00,331.86 1139.25,331.88 1139.50,331.90 1139.75,331.92 1140.00,331.94 1140.25,331.96 1140.50,331.98 1140.75,332.00 1141.00,332.02 1141.25,332.04 1141.50,332.06 1141.75,332.08 1142.00,332.10 1142.25,332.13 1142.50,332.15 1142.75,332.17 1143.00,332.19 1143.25,332.21 1143.50,332.23 1143.75,332.25 1144.00,332.27 1144.25,332.29 1144.50,332.31 1144.75,332.33 1145.00,332.36 1145.25,332.38 1145.50,332.40 1145.75,332.42 1146.00,332.44 1146.25,332.46 1146.50,332.48 1146.75,332.50 1147.00,332.52 1147.25,332.54 1147.50,332.57 1147.75,332.59 1148.00,332.61 1148.25,332.63 1148.50,332.65 1148.75,332.67 1149.00,332.69 1149.25,332.71 1149.50,332.73 1149.75,332.76 1150.00,332.78 1150.25,332.80 1150.50,332.82 1150.75,332.84 1151.00,332.86 1151.25,332.88 1151.50,332.90 1151.75,332.92 1152.00,332.95 1152.25,332.97 1152.50,332.99 1152.75,333.01 1153.00,333.03 1153.25,333.05 1153.50,333.07 1153.75,333.09 1154.00,333.12 1154.25,333.14 1154.50,333.16 1154.75,333.18 1155.00,333.20 1155.25,333.22 1155.50,333.24 1155.75,333.27 1156.00,333.29 1156.25,333.31 1156.50,333.33 1156.75,333.35 1157.00,333.37 1157.25,333.39 1157.50,333.42 1157.75,333.44 1158.00,333.46 1158.25,333.48 1158.50,333.50 1158.75,333.52 1159.00,333.54 1159.25,333.57 1159.50,333.59 1159.75,333.61 1160.00,333.63 1160.25,333.65 1160.50,333.67 1160.75,333.69 1161.00,333.72 1161.25,333.74 1161.50,333.76 1161.75,333.78 1162.00,333.80 1162.25,333.82 1162.50,333.84 1162.75,333.87 1163.00,333.89 1163.25,333.91 1163.50,333.93 1163.75,333.95 1164.00,333.97 1164.25,334.00 1164.50,334.02 1164.75,334.04 1165.00,334.06 1165.25,334.08 1165.50,334.10 1165.75,334.12 1166.00,334.15 1166.25,334.17 1166.50,334.19 1166.75,334.21 1167.00,334.23 1167.25,334.25 1167.50,334.39 1167.75,334.71 1168.00,335.22 1168.25,335.92 1168.50,336.81 1168.75,337.88 1169.00,339.12 1169.25,340.54 1169.50,342.14 1169.75,343.90 1170.00,345.81 1170.25,347.89 1170.50,350.11 1170.75,352.47 1171.00,354.96 1171.25,357.58 1171.50,360.32 1171.75,363.16 1172.00,366.11 1172.25,369.14 1172.50,372.26 1172.75,375.44 1173.00,378.69 1173.25,381.99 1173.50,385.33 1173.75,388.70 1174.00,392.08 1174.25,394.80 1174.50,394.80 1174.75,394.80 1175.00,394.80 1175.25,394.80 1175.50,394.80 1175.75,394.80 1176.00,394.80 1176.25,394.80 1176.50,394.80 1176.75,394.80 1177.00,394.80 1177.25,394.80 1177.50,394.80 1177.75,394.80 1178.00,394.80 1178.25,394.80 1178.50,394.80 1178.75,394.80 1179.00,394.80 1179.25,394.80 1179.50,394.80 1179.75,394.80 1180.00,394.80 1180.25,394.80 1180.50,394.80 1180.75,394.80 1181.00,394.80 1181.25,394.80 1181.50,394.80 1181.75,394.80 1182.00,394.80 1182.25,394.80 1182.50,394.80 1182.75,394.80 1183.00,394.80 1183.25,394.80 1183.50,394.80 1183.75,394.80 1184.00,394.80 1184.25,394.80 1184.50,394.80 1184.75,394.80 1185.00,394.80 1185.25,394.80 1185.50,394.80 1185.75,394.80 1186.00,394.80 1186.25,394.80 1186.50,394.80 1186.75,394.80 1187.00,394.80 1187.25,394.80 1187.50,394.80 1187.75,394.80 1188.00,394.80 1188.25,394.80 1188.50,394.80 1188.75,394.80 1189.00,394.80 1189.25,394.80 1189.50,394.80 1189.75,394.80 1190.00,394.80 1190.25,394.80 1190.50,394.80 1190.75,394.80 1191.00,394.80 1191.25,394.80 1191.50,394.80 1191.75,394.80 1192.00,394.80 1192.25,394.80 1192.50,394.80 1192.75,394.80 1193.00,394.80 1193.25,394.80 1193.50,394.80 1193.75,394.80 1194.00,394.80 1194.25,394.80 1194.50,394.80 1194.75,394.80 1195.00,394.80 1195.25,394.80 1195.50,394.80 1195.75,394.80 1196.00,394.80 1196.25,394.80 1196.50,394.80 1196.75,394.80 1197.00,394.80 1197.25,394.80 1197.50,394.80 1197.75,394.80 1198.00,394.80 1198.25,394.80 1198.50,394.80 1198.75,394.80 1199.00,394.80 1199.25,394.80 1199.50,394.80 1199.75,394.80 1200.00,394.80 1200.25,394.80 1200.50,394.80 1200.75,394.80 1201.00,394.80 1201.25,394.80 1201.50,394.80 1201.75,394.80 1202.00,394.80 1202.25,394.80 1202.50,394.83 1202.75,394.85 1203.00,394.87 1203.25,394.89 1203.50,394.91 1203.75,394.72 1204.00,393.68 1204.25,392.65 1204.50,391.64 1204.75,390.64 1205.00,389.66 1205.25,388.69 1205.50,387.74 1205.75,386.80 1206.00,385.87 1206.25,384.96 1206.50,384.07 1206.75,383.18 1207.00,382.31 1207.25,381.45 1207.50,380.61 1207.75,379.78 1208.00,378.96 1208.25,378.15 1208.50,377.35 1208.75,376.57 1209.00,375.80 1209.25,375.04 1209.50,374.29 1209.75,373.55 1210.00,372.82 1210.25,372.11 1210.50,371.40 1210.75,370.71 1211.00,370.03 1211.25,369.35 1211.50,368.69 1211.75,368.04 1212.00,367.39 1212.25,366.76 1212.50,366.14 1212.75,365.52 1213.00,364.92 1213.25,364.32 1213.50,363.73 1213.75,363.15 1214.00,362.58 1214.25,362.02 1214.50,361.47 1214.75,360.93 1215.00,360.39 1215.25,359.86 1215.50,359.34 1215.75,358.83 1216.00,358.33 1216.25,357.83 1216.50,357.34 1216.75,356.86 1217.00,356.39 1217.25,355.92 1217.50,355.46 1217.75,355.01 1218.00,354.56 1218.25,354.13 1218.50,353.69 1218.75,353.27 1219.00,352.85 1219.25,352.44 1219.50,352.03 1219.75,351.63 1220.00,351.24 1220.25,350.85 1220.50,350.47 1220.75,350.09 1221.00,349.72 1221.25,349.36 1221.50,349.00 1221.75,348.65 1222.00,348.30 1222.25,347.96 1222.50,347.62 1222.75,347.29 1223.00,346.96 1223.25,346.64 1223.50,346.32 1223.75,346.01 1224.00,345.71 1224.25,345.41 1224.50,345.11 1224.75,344.82 1225.00,344.53 1225.25,344.24 1225.50,343.97 1225.75,343.69 1226.00,343.42 1226.25,343.16 1226.50,342.89 1226.75,342.64 1227.00,342.38 1227.25,342.13 1227.50,341.89 1227.75,341.65 1228.00,341.41 1228.25,341.18 1228.50,340.94 1228.75,340.72 1229.00,340.50 1229.25,340.28 1229.50,340.06 1229.75,339.85 1230.00,339.64 1230.25,339.43 1230.50,339.23 1230.75,339.03 1231.00,338.84 1231.25,338.64 1231.50,338.45 1231.75,338.27 1232.00,338.09 1232.25,337.91 1232.50,337.73 1232.75,337.55 1233.00,337.38 1233.25,337.21 1233.50,337.05 1233.75,336.88 1234.00,336.72 1234.25,336.57 1234.50,336.41 1234.75,336.26 1235.00,336.11 1235.25,335.96 1235.50,335.81 1235.75,335.67 1236.00,335.53 1236.25,335.39 1236.50,335.26 1236.75,335.13 1237.00,334.99 1237.25,334.87 1237.50,334.74 1237.75,334.61 1238.00,334.49 1238.25,334.37 1238.50,334.25 1238.75,334.14 1239.00,334.02 1239.25,333.91 1239.50,333.80 1239.75,333.69 1240.00,333.59 1240.25,333.48 1240.50,333.38 1240.75,333.28 1241.00,333.18 1241.25,333.08 1241.50,332.99 1241.75,332.89 1242.00,332.80 1242.25,332.71 1242.50,332.62 1242.75,332.54 1243.00,332.45 1243.25,332.37 1243.50,332.28 1243.75,332.20 1244.00,332.12" fill="none" stroke="#ff0000" stroke-width="1"/><polyline points="44.00,193.95 44.25,192.71 44.50,191.49 44.75,190.30 45.00,189.13 45.25,187.99 45.50,186.88 45.75,185.79 46.00,184.73 46.25,183.69 46.50,182.69 46.75,181.70 47.00,180.75 47.25,179.83 47.50,178.93 47.75,178.06 48.00,177.22 48.25,176.40 48.50,175.62 48.75,174.86 49.00,174.13 49.25,173.43 49.50,172.76 49.75,172.12 50.00,171.50 50.25,170.92 50.50,170.36 50.75,169.84 51.00,169.34 51.25,168.88 51.50,168.44 51.75,168.03 52.00,167.66 52.25,167.31 52.50,166.99 52.75,166.71 53.00,166.45 53.25,166.22 53.50,166.03 53.75,165.86 54.00,165.72 54.25,165.62 54.50,165.54 54.75,165.50 55.00,165.48 55.25,165.50 55.50,165.54 55.75,165.62 56.00,165.72 56.25,165.86 56.50,166.03 56.75,166.22 57.00,166.45 57.25,166.71 57.50,166.99 57.75,167.31 58.00,167.66 58.25,168.03 58.50,168.44 58.75,168.88 59.00,169.34 59.25,169.84 59.50,170.36 59.75,170.92 60.00,171.50 60.25,172.12 60.50,172.76 60.75,173.43 61.00,174.13 61.25,174.86 61.50,175.62 61.75,176.40 62.00,177.22 62.25,178.06 62.50,178.93 62.75,179.83 63.00,180.75 63.25,181.70 63.50,182.69 63.75,183.69 64.00,184.73 64.25,185.79 64.50,186.88 64.75,187.99 65.00,189.13 65.25,190.30 65.50,191.49 65.75,192.71 66.00,193.95 66.25,195.22 66.50,196.51 66.75,197.83 67.00,199.17 67.25,200.53 67.50,201.92 67.75,203.34 68.00,204.77 68.25,206.23 68.50,207.71 68.75,209.22 69.00,210.75 69.25,212.30 69.50,213.87 69.75,215.46 70.00,217.07 70.25,218.70 70.50,220.36 70.75,222.03 71.00,223.73 71.25,225.44 71.50,227.17 71.75,228.93 72.00,230.70 72.25,232.49 72.50,234.29 72.75,236.12 73.00,237.96 73.25,239.82 73.50,241.69 73.75,243.59 74.00,245.49 74.25,247.42 74.50,249.35 74.75,251.31 75.00,253.27 75.25,255.26 75.50,257.25 75.75,259.26 76.00,261.28 76.25,263.32 76.50,265.36 76.75,267.42 77.00,269.49 77.25,271.57 77.50,273.66 77.75,275.77 78.00,277.88 78.25,280.00 78.50,282.13 78.75,284.27 79.00,286.42 79.25,288.58 79.50,290.74 79.75,292.91 80.00,295.09 80.25,297.27 80.50,299.46 80.75,301.66 81.00,303.86 81.25,306.06 81.50,308.27 81.75,310.49 82.00,312.71 82.25,314.93 82.50,317.15 82.75,319.38 83.00,321.60 83.25,323.83 83.50,326.06 83.75,328.29 84.00,330.53 84.25,332.76 84.50,334.99 84.75,337.22 85.00,339.45 85.25,341.67 85.50,343.90 85.75,346.12 86.00,348.34 86.25,350.55 86.50,352.76 86.75,354.97 87.00,357.17 87.25,359.37 87.50,361.56 87.75,363.75 88.00,365.93 88.25,368.10 88.50,370.27 88.75,372.43 89.00,374.58 89.25,376.72 89.50,378.85 89.75,380.98 90.00,383.10 90.25,385.20 90.50,387.30 90.75,389.38 91.00,391.46 91.25,393.52 91.50,395.57 91.75,397.61 92.00,399.63 92.25,401.65 92.50,403.65 92.75,405.63 93.00,407.60 93.25,409.56 93.50,411.51 93.75,413.43 94.00,415.35 94.25,417.24 94.50,419.12 94.75,420.99 95.00,422.84 95.25,424.67 95.50,426.48 95.75,428.28 96.00,430.05 96.25,431.81 96.50,433.55 96.75,435.27 97.00,436.97 97.25,438.65 97.50,440.31 97.75,441.96 98.00,443.58 98.25,445.17 98.50,446.75 98.75,448.31 99.00,449.84 99.25,451.36 99.50,452.85 99.75,454.31 100.00,455.76 100.25,457.18 100.50,458.58 100.75,459.95 101.00,461.30 101.25,462.62 101.50,463.93 101.75,465.20 102.00,466.45 102.25,467.68 102.50,468.88 102.75,470.05 103.00,471.20 103.25,472.33 103.50,473.42 103.75,474.49 104.00,475.54 104.25,476.55 104.50,477.54 104.75,478.51 105.00,479.44 105.25,480.35 105.50,481.23 105.75,482.08 106.00,482.90 106.25,483.70 106.50,484.47 106.75,485.20 107.00,485.91 107.25,486.60 107.50,487.25 107.75,487.87 108.00,488.46 108.25,489.03 108.50,489.56 108.75,490.07 109.00,490.55 109.25,490.99 109.50,491.41 109.75,491.80 110.00,492.15 110.25,492.48 110.50,492.78 110.75,493.05 111.00,493.28 111.25,493.49 111.50,493.67 111.75,493.81 112.00,493.93 112.25,494.02 112.50,494.07 112.75,494.10 113.00,494.09 113.25,494.06 113.50,493.99 113.75,493.90 114.00,493.77 114.25,493.61 114.50,493.43 114.75,493.21 115.00,492.96 115.25,492.69 115.50,492.38 115.75,492.04 116.00,491.68 116.25,491.28 116.50,490.85 116.75,490.40 117.00,489.91 117.25,489.40 117.50,488.85 117.75,488.28 118.00,487.67 118.25,487.04 118.50,486.38 118.75,485.69 119.00,484.97 119.25,484.22 119.50,483.45 119.75,482.64 120.00,481.81 120.25,480.95 120.50,480.06 120.75,479.15 121.00,478.20 121.25,477.23 121.50,476.23 121.75,475.21 122.00,474.15 122.25,473.08 122.50,471.97 122.75,470.84 123.00,469.68 123.25,468.50 123.50,467.29 123.75,466.06 124.00,464.80 124.25,463.51 124.50,462.20 124.75,460.87 125.00,459.51 125.25,458.13 125.50,456.73 125.75,455.30 126.00,453.85 126.25,452.37 126.50,450.87 126.75,449.35 127.00,447.81 127.25,446.25 127.50,444.67 127.75,443.06 128.00,441.43 128.25,439.79 128.50,438.12 128.75,436.43 129.00,434.72 129.25,433.00 129.50,431.25 129.75,429.49 130.00,427.70 130.25,425.90 130.50,424.08 130.75,422.25 131.00,420.39 131.25,418.52 131.50,416.64 131.75,414.74 132.00,412.82 132.25,410.89 132.50,408.94 132.75,406.98 133.00,405.00 133.25,403.01 133.50,401.00 133.75,398.99 134.00,396.96 134.25,394.91 134.50,392.86 134.75,390.79 135.00,388.72 135.25,386.63 135.50,384.53 135.75,382.42 136.00,380.30 136.25,378.17 136.50,376.04 136.75,373.89 137.00,371.74 137.25,369.58 137.50,367.41 137.75,365.23 138.00,363.05 138.25,360.86 138.50,358.67 138.75,356.47 139.00,354.27 139.25,352.06 139.50,349.84 139.75,347.63 140.00,345.41 140.25,343.18 140.50,340.96 140.75,338.73 141.00,336.50 141.25,334.27 141.50,332.04 141.75,329.81 142.00,327.58 142.25,325.35 142.50,323.12 142.75,320.89 143.00,318.66 143.25,316.44 143.50,314.22 143.75,312.00 144.00,309.78 144.25,307.57 144.50,305.36 144.75,303.15 145.00,300.95 145.25,298.76 145.50,296.57 145.75,294.39 146.00,292.21 146.25,290.05 146.50,287.88 146.75,285.73 147.00,283.59 147.25,281.45 147.50,279.32 147.75,277.20 148.00,275.09 148.25,272.99 148.50,270.91 148.75,268.83 149.00,266.76 149.25,264.71 149.50,262.66 149.75,260.63 150.00,258.62 150.25,256.61 150.50,254.62 150.75,252.64 151.00,250.68 151.25,248.73 151.50,246.80 151.75,244.88 152.00,242.98 152.25,241.09 152.50,239.22 152.75,237.37 153.00,235.53 153.25,233.71 153.50,231.91 153.75,230.13 154.00,228.36 154.25,226.62 154.50,224.89 154.75,223.18 155.00,221.50 155.25,219.83 155.50,218.18 155.75,216.55 156.00,214.95 156.25,213.36 156.50,211.80 156.75,210.26 157.00,208.74 157.25,207.24 157.50,205.76 157.75,204.31 158.00,202.88 158.25,201.48 158.50,200.09 158.75,198.74 159.00,197.40 159.25,196.09 159.50,194.81 159.75,193.55 160.00,192.31 160.25,191.10 160.50,189.92 160.75,188.76 161.00,187.63 161.25,186.53 161.50,185.45 161.75,184.39 162.00,183.37 162.25,182.37 162.50,181.40 162.75,180.45 163.00,179.54 163.25,178.65 163.50,177.79 163.75,176.95 164.00,176.15 164.25,175.37 164.50,174.62 164.75,173.90 165.00,173.21 165.25,172.55 165.50,171.92 165.75,171.31 166.00,170.74 166.25,170.19 166.50,169.68 166.75,169.19 167.00,168.73 167.25,168.31 167.50,167.91 167.75,167.54 168.00,167.21 168.25,166.90 168.50,166.62 168.75,166.37 169.00,166.16 169.25,165.97 169.50,165.81 169.75,165.69 170.00,165.59 170.25,165.52 170.50,165.49 170.75,165.48 171.00,165.51 171.25,165.56 171.50,165.65 171.75,165.76 172.00,165.91 172.25,166.08 172.50,166.29 172.75,166.53 173.00,166.79 173.25,167.09 173.50,167.42 173.75,167.77 174.00,168.16 174.25,168.58 174.50,169.02 174.75,169.50 175.00,170.00 175.25,170.54 175.50,171.10 175.75,171.70 176.00,172.32 176.25,172.97 176.50,173.65 176.75,174.36 177.00,175.10 177.25,175.86 177.50,176.66 177.75,177.48 178.00,178.33 178.25,179.21 178.50,180.12 178.75,181.05 179.00,182.02 179.25,183.00 179.50,184.02 179.75,185.06 180.00,186.13 180.25,187.23 180.50,188.35 180.75,189.50 181.00,190.68 181.25,191.88 181.50,193.10 181.75,194.35 182.00,195.63 182.25,196.93 182.50,198.25 182.75,199.60 183.00,200.98 183.25,202.37 183.50,203.79 183.75,205.24 184.00,206.70 184.25,208.19 184.50,209.71 184.75,211.24 185.00,212.80 185.25,214.37 185.50,215.97 185.75,217.59 186.00,219.23 186.25,220.89 186.50,222.57 186.75,224.27 187.00,225.99 187.25,227.73 187.50,229.49 187.75,231.27 188.00,233.06 188.25,234.88 188.50,236.71 188.75,238.55 189.00,240.42 189.25,242.30 189.50,244.19 189.75,246.11 190.00,248.03 190.25,249.98 190.50,251.94 190.75,253.91 191.00,255.89 191.25,257.89 191.50,259.91 191.75,261.93 192.00,263.97 192.25,266.02 192.50,268.08 192.75,270.16 193.00,272.24 193.25,274.34 193.50,276.44 193.75,278.56 194.00,280.68 194.25,282.82 194.50,284.96 194.75,287.11 195.00,289.27 195.25,291.43 195.50,293.61 195.75,295.79 196.00,297.97 196.25,300.16 196.50,302.36 196.75,304.56 197.00,306.77 197.25,308.98 197.50,311.20 197.75,313.42 198.00,315.64 198.25,317.86 198.50,320.09 198.75,322.32 199.00,324.55 199.25,326.78 199.50,329.01 199.75,331.24 200.00,333.47 200.25,335.70 200.50,337.93 200.75,340.16 201.00,342.38 201.25,344.61 201.50,346.83 201.75,349.05 202.00,351.26 202.25,353.47 202.50,355.68 202.75,357.88 203.00,360.07 203.25,362.26 203.50,364.45 203.75,366.63 204.00,368.80 204.25,370.96 204.50,373.12 204.75,375.26 205.00,377.40 205.25,379.54 205.50,381.66 205.75,383.77 206.00,385.87 206.25,387.96 206.50,390.05 206.75,392.12 207.00,394.18 207.25,396.22 207.50,398.26 207.75,400.28 208.00,402.29 208.25,404.28 208.50,406.27 208.75,408.23 209.00,410.19 209.25,412.12 209.50,414.05 209.75,415.96 210.00,417.85 210.25,419.72 210.50,421.58 210.75,423.42 211.00,425.25 211.25,427.06 211.50,428.85 211.75,430.62 212.00,432.37 212.25,434.10 212.50,435.82 212.75,437.51 213.00,439.19 213.25,440.84 213.50,442.48 213.75,444.09 214.00,445.68 214.25,447.25 214.50,448.80 214.75,450.33 215.00,451.83 215.25,453.32 215.50,454.78 215.75,456.21 216.00,457.63 216.25,459.02 216.50,460.38 216.75,461.73 217.00,463.04 217.25,464.34 217.50,465.60 217.75,466.85 218.00,468.07 218.25,469.26 218.50,470.43 218.75,471.57 219.00,472.68 219.25,473.77 219.50,474.83 219.75,475.87 220.00,476.87 220.25,477.86 220.50,478.81 220.75,479.73 221.00,480.63 221.25,481.50 221.50,482.35 221.75,483.16 222.00,483.95 222.25,484.71 222.50,485.44 222.75,486.14 223.00,486.81 223.25,487.45 223.50,488.06 223.75,488.65 224.00,489.20 224.25,489.73 224.50,490.23 224.75,490.69 225.00,491.13 225.25,491.54 225.50,491.92 225.75,492.26 226.00,492.58 226.25,492.87 226.50,493.13 226.75,493.35 227.00,493.55 227.25,493.72 227.50,493.85 227.75,493.96 228.00,494.04 228.25,494.08 228.50,494.10 228.75,494.08 229.00,494.04 229.25,493.96 229.50,493.86 229.75,493.72 230.00,493.56 230.25,493.36 230.50,493.14 230.75,492.88 231.00,492.59 231.25,492.28 231.50,491.93 231.75,491.55 232.00,491.15 232.25,490.71 232.50,490.25 232.75,489.75 233.00,489.23 233.25,488.67 233.50,488.09 233.75,487.48 234.00,486.83 234.25,486.16 234.50,485.46 234.75,484.74 235.00,483.98 235.25,483.19 235.50,482.38 235.75,481.54 236.00,480.67 236.25,479.77 236.50,478.85 236.75,477.89 237.00,476.91 237.25,475.91 237.50,474.87 237.75,473.81 238.00,472.72 238.25,471.61 238.50,470.47 238.75,469.31 239.00,468.11 239.25,466.90 239.50,465.66 239.75,464.39 240.00,463.10 240.25,461.78 240.50,460.44 240.75,459.07 241.00,457.68 241.25,456.27 241.50,454.84 241.75,453.38 242.00,451.89 242.25,450.39 242.50,448.86 242.75,447.32 243.00,445.75 243.25,444.15 243.50,442.54 243.75,440.91 244.00,439.25 244.25,437.58 244.50,435.89 244.75,434.17 245.00,432.44 245.25,430.69 245.50,428.92 245.75,427.13 246.00,425.32 246.25,423.50 246.50,421.66 246.75,419.80 247.00,417.92 247.25,416.03 247.50,414.12 247.75,412.20 248.00,410.26 248.25,408.31 248.50,406.34 248.75,404.36 249.00,402.37 249.25,400.36 249.50,398.34 249.75,396.30 250.00,394.26 250.25,392.20 250.50,390.13 250.75,388.05 251.00,385.96 251.25,383.85 251.50,381.74 251.75,379.62 252.00,377.49 252.25,375.35 252.50,373.20 252.75,371.05 253.00,368.88 253.25,366.71 253.50,364.53 253.75,362.35 254.00,360.16 254.25,357.97 254.50,355.76 254.75,353.56 255.00,351.35 255.25,349.13 255.50,346.92 255.75,344.70 256.00,342.47 256.25,340.25 256.50,338.02 256.75,335.79 257.00,333.56 257.25,331.33 257.50,329.10 257.75,326.87 258.00,324.64 258.25,322.41 258.50,320.18 258.75,317.95 259.00,315.73 259.25,313.51 259.50,311.29 259.75,309.07 260.00,306.86 260.25,304.65 260.50,302.45 260.75,300.25 261.00,298.06 261.25,295.87 261.50,293.69 261.75,291.52 262.00,289.35 262.25,287.19 262.50,285.04 262.75,282.90 263.00,280.77 263.25,278.64 263.50,276.53 263.75,274.42 264.00,272.32 264.25,270.24 264.50,268.17 264.75,266.10 265.00,264.05 265.25,262.01 265.50,259.99 265.75,257.97 266.00,255.97 266.25,253.99 266.50,252.01 266.75,250.06 267.00,248.11 267.25,246.18 267.50,244.27 267.75,242.37 268.00,240.49 268.25,238.63 268.50,236.78 268.75,234.95 269.00,233.14 269.25,231.34 269.50,229.56 269.75,227.80 270.00,226.06 270.25,224.34 270.50,222.64 270.75,220.96 271.00,219.30 271.25,217.66 271.50,216.04 271.75,214.44 272.00,212.86 272.25,211.30 272.50,209.77 272.75,208.25 273.00,206.76 273.25,205.30 273.50,203.85 273.75,202.43 274.00,201.03 274.25,199.66 274.50,198.31 274.75,196.98 275.00,195.68 275.25,194.40 275.50,193.15 275.75,191.92 276.00,190.72 276.25,189.55 276.50,188.40 276.75,187.27 277.00,186.18 277.25,185.11 277.50,184.06 277.75,183.04 278.00,182.05 278.25,181.09 278.50,180.16 278.75,179.25 279.00,178.37 279.25,177.52 279.50,176.69 279.75,175.90 280.00,175.13 280.25,174.39 280.50,173.68 280.75,173.00 281.00,172.34 281.25,171.72 281.50,171.13 281.75,170.56 282.00,170.02 282.25,169.52 282.50,169.04 282.75,168.59 283.00,168.18 283.25,167.79 283.50,167.43 283.75,167.10 284.00,166.81 284.25,166.54 284.50,166.30 284.75,166.09 285.00,165.92 285.25,165.77 285.50,165.65 285.75,165.56 286.00,165.51 286.25,165.48 286.50,165.49 286.75,165.52 287.00,165.59 287.25,165.68 287.50,165.81 287.75,165.96 288.00,166.15 288.25,166.36 288.50,166.61 288.75,166.89 289.00,167.19 289.25,167.53 289.50,167.89 289.75,168.29 290.00,168.72 290.25,169.17 290.50,169.66 290.75,170.17 291.00,170.72 291.25,171.29 291.50,171.89 291.75,172.52 292.00,173.18 292.25,173.87 292.50,174.59 292.75,175.34 293.00,176.12 293.25,176.92 293.50,177.75 293.75,178.61 294.00,179.50 294.25,180.42 294.50,181.36 294.75,182.33 295.00,183.33 295.25,184.35 295.50,185.40 295.75,186.48 296.00,187.59 296.25,188.72 296.50,189.87 296.75,191.06 297.00,192.27 297.25,193.50 297.50,194.76 297.75,196.04 298.00,197.35 298.25,198.68 298.50,200.04 298.75,201.42 299.00,202.83 299.25,204.25 299.50,205.70 299.75,207.18 300.00,208.68 300.25,210.19 300.50,211.74 300.75,213.30 301.00,214.88 301.25,216.49 301.50,218.11 301.75,219.76 302.00,221.43 302.25,223.12 302.50,224.82 302.75,226.55 303.00,228.29 303.25,230.06 303.50,231.84 303.75,233.64 304.00,235.46 304.25,237.29 304.50,239.15 304.75,241.02 305.00,242.90 305.25,244.80 305.50,246.72 305.75,248.65 306.00,250.60 306.25,252.56 306.50,254.54 306.75,256.53 307.00,258.54 307.25,260.55 307.50,262.58 307.75,264.62 308.00,266.68 308.25,268.75 308.50,270.82 308.75,272.91 309.00,275.01 309.25,277.12 309.50,279.24 309.75,281.36 310.00,283.50 310.25,285.65 310.50,287.80 310.75,289.96 311.00,292.13 311.25,294.30 311.50,296.49 311.75,298.67 312.00,300.87 312.25,303.07 312.50,305.27 312.75,307.48 313.00,309.69 313.25,311.91 313.50,314.13 313.75,316.35 314.00,318.57 314.25,320.80 314.50,323.03 314.75,325.26 315.00,327.49 315.25,329.72 315.50,331.95 315.75,334.18 316.00,336.41 316.25,338.64 316.50,340.87 316.75,343.10 317.00,345.32 317.25,347.54 317.50,349.76 317.75,351.97 318.00,354.18 318.25,356.38 318.50,358.58 318.75,360.77 319.00,362.96 319.25,365.15 319.50,367.32 319.75,369.49 320.00,371.65 320.25,373.80 320.50,375.95 320.75,378.09 321.00,380.22 321.25,382.33 321.50,384.44 321.75,386.54 322.00,388.63 322.25,390.71 322.50,392.78 322.75,394.83 323.00,396.87 323.25,398.90 323.50,400.92 323.75,402.93 324.00,404.92 324.25,406.90 324.50,408.86 324.75,410.81 325.00,412.74 325.25,414.66 325.50,416.56 325.75,418.45 326.00,420.32 326.25,422.17 326.50,424.01 326.75,425.83 327.00,427.63 327.25,429.41 327.50,431.18 327.75,432.93 328.00,434.65 328.25,436.36 328.50,438.05 328.75,439.72 329.00,441.37 329.25,442.99 329.50,444.60 329.75,446.19 330.00,447.75 330.25,449.29 330.50,450.81 330.75,452.31 331.00,453.79 331.25,455.24 331.50,456.67 331.75,458.07 332.00,459.46 332.25,460.82 332.50,462.15 332.75,463.46 333.00,464.75 333.25,466.01 333.50,467.24 333.75,468.45 334.00,469.63 334.25,470.79 334.50,471.93 334.75,473.03 335.00,474.11 335.25,475.17 335.50,476.19 335.75,477.19 336.00,478.16 336.25,479.11 336.50,480.03 336.75,480.92 337.00,481.78 337.25,482.61 337.50,483.42 337.75,484.19 338.00,484.94 338.25,485.66 338.50,486.35 338.75,487.02 339.00,487.65 339.25,488.25 339.50,488.83 339.75,489.38 340.00,489.89 340.25,490.38 340.50,490.84 340.75,491.26 341.00,491.66 341.25,492.03 341.50,492.37 341.75,492.68 342.00,492.95 342.25,493.20 342.50,493.42 342.75,493.61 343.00,493.76 343.25,493.89 343.50,493.99 343.75,494.06 344.00,494.09 344.25,494.10 344.50,494.07 344.75,494.02 345.00,493.93 345.25,493.82 345.50,493.67 345.75,493.50 346.00,493.29 346.25,493.06 346.50,492.79 346.75,492.49 347.00,492.17 347.25,491.81 347.50,491.43 347.75,491.01 348.00,490.57 348.25,490.09 348.50,489.59 348.75,489.05 349.00,488.49 349.25,487.90 349.50,487.27 349.75,486.62 350.00,485.94 350.25,485.23 350.50,484.50 350.75,483.73 351.00,482.94 351.25,482.11 351.50,481.26 351.75,480.38 352.00,479.48 352.25,478.54 352.50,477.58 352.75,476.59 353.00,475.58 353.25,474.54 353.50,473.47 353.75,472.37 354.00,471.25 354.25,470.10 354.50,468.93 354.75,467.73 355.00,466.50 355.25,465.25 355.50,463.98 355.75,462.68 356.00,461.35 356.25,460.00 356.50,458.63 356.75,457.23 357.00,455.81 357.25,454.37 357.50,452.90 357.75,451.42 358.00,449.90 358.25,448.37 358.50,446.82 358.75,445.24 359.00,443.64 359.25,442.02 359.50,440.38 359.75,438.72 360.00,437.04 360.25,435.34 360.50,433.62 360.75,431.88 361.00,430.12 361.25,428.35 361.50,426.55 361.75,424.74 362.00,422.91 362.25,421.06 362.50,419.20 362.75,417.32 363.00,415.42 363.25,413.51 363.50,411.58 363.75,409.64 364.00,407.68 364.25,405.71 364.50,403.73 364.75,401.73 365.00,399.71 365.25,397.69 365.50,395.65 365.75,393.60 366.00,391.54 366.25,389.46 366.50,387.38 366.75,385.28 367.00,383.18 367.25,381.06 367.50,378.94 367.75,376.81 368.00,374.66 368.25,372.51 368.50,370.36 368.75,368.19 369.00,366.02 369.25,363.84 369.50,361.65 369.75,359.46 370.00,357.26 370.25,355.06 370.50,352.85 370.75,350.64 371.00,348.43 371.25,346.21 371.50,343.99 371.75,341.76 372.00,339.53 372.25,337.31 372.50,335.08 372.75,332.85 373.00,330.62 373.25,328.38 373.50,326.15 373.75,323.92 374.00,321.69 374.25,319.47 374.50,317.24 374.75,315.02 375.00,312.80 375.25,310.58 375.50,308.36 375.75,306.15 376.00,303.95 376.25,301.75 376.50,299.55 376.75,297.36 377.00,295.18 377.25,293.00 377.50,290.83 377.75,288.66 378.00,286.51 378.25,284.36 378.50,282.22 378.75,280.09 379.00,277.96 379.25,275.85 379.50,273.75 379.75,271.66 380.00,269.57 380.25,267.50 380.50,265.45 380.75,263.40 381.00,261.36 381.25,259.34 381.50,257.33 381.75,255.34 382.00,253.35 382.25,251.39 382.50,249.43 382.75,247.49 383.00,245.57 383.25,243.66 383.50,241.77 383.75,239.89 384.00,238.03 384.25,236.19 384.50,234.37 384.75,232.56 385.00,230.77 385.25,229.00 385.50,227.24 385.75,225.51 386.00,223.80 386.25,222.10 386.50,220.43 386.75,218.77 387.00,217.14 387.25,215.52 387.50,213.93 387.75,212.36 388.00,210.81 388.25,209.28 388.50,207.77 388.75,206.29 389.00,204.83 389.25,203.39 389.50,201.98 389.75,200.59 390.00,199.22 390.25,197.88 390.50,196.56 390.75,195.27 391.00,194.00 391.25,192.76 391.50,191.54 391.75,190.34 392.00,189.18 392.25,188.04 392.50,186.92 392.75,185.83 393.00,184.77 393.25,183.73 393.50,182.72 393.75,181.74 394.00,180.79 394.25,179.86 394.50,178.96 394.75,178.09 395.00,177.25 395.25,176.43 395.50,175.65 395.75,174.89 396.00,174.16 396.25,173.46 396.50,172.78 396.75,172.14 397.00,171.53 397.25,170.94 397.50,170.39 397.75,169.86 398.00,169.36 398.25,168.90 398.50,168.46 398.75,168.05 399.00,167.67 399.25,167.32 399.50,167.00 399.75,166.72 400.00,166.46 400.25,166.23 400.50,166.03 400.75,165.86 401.00,165.73 401.25,165.62 401.50,165.54 401.75,165.50 402.00,165.48 402.25,165.49 402.50,165.54 402.75,165.61 403.00,165.72 403.25,165.85 403.50,166.02 403.75,166.21 404.00,166.44 404.25,166.69 404.50,166.98 404.75,167.30 405.00,167.64 405.25,168.02 405.50,168.42 405.75,168.86 406.00,169.32 406.25,169.82 406.50,170.34 406.75,170.90 407.00,171.48 407.25,172.09 407.50,172.73 407.75,173.40 408.00,174.10 408.25,174.83 408.50,175.59 408.75,176.37 409.00,177.18 409.25,178.02 409.50,178.89 409.75,179.79 410.00,180.71 410.25,181.67 410.50,182.65 410.75,183.65 411.00,184.69 411.25,185.75 411.50,186.83 411.75,187.95 412.00,189.08 412.25,190.25 412.50,191.44 412.75,192.66 413.00,193.90 413.25,195.17 413.50,196.46 413.75,197.77 414.00,199.11 414.25,200.48 414.50,201.87 414.75,203.28 415.00,204.72 415.25,206.17 415.50,207.65 415.75,209.16 416.00,210.68 416.25,212.23 416.50,213.80 416.75,215.39 417.00,217.01 417.25,218.64 417.50,220.29 417.75,221.97 418.00,223.66 418.25,225.37 418.50,227.11 418.75,228.86 419.00,230.63 419.25,232.41 419.50,234.22 419.75,236.04 420.00,237.89 420.25,239.74 420.50,241.62 420.75,243.51 421.00,245.42 421.25,247.34 421.50,249.28 421.75,251.23 422.00,253.20 422.25,255.18 422.50,257.17 422.75,259.18 423.00,261.20 423.25,263.23 423.50,265.28 423.75,267.34 424.00,269.41 424.25,271.49 424.50,273.58 424.75,275.68 425.00,277.79 425.25,279.92 425.50,282.05 425.75,284.19 426.00,286.33 426.25,288.49 426.50,290.65 426.75,292.82 427.00,295.00 427.25,297.18 427.50,299.37 427.75,301.57 428.00,303.77 428.25,305.98 428.50,308.19 428.75,310.40 429.00,312.62 429.25,314.84 429.50,317.06 429.75,319.29 430.00,321.51 430.25,323.74 430.50,325.97 430.75,328.21 431.00,330.44 431.25,332.67 431.50,334.90 431.75,337.13 432.00,339.36 432.25,341.58 432.50,343.81 432.75,346.03 433.00,348.25 433.25,350.46 433.50,352.68 433.75,354.88 434.00,357.09 434.25,359.28 434.50,361.48 434.75,363.66 435.00,365.84 435.25,368.02 435.50,370.18 435.75,372.34 436.00,374.49 436.25,376.64 436.50,378.77 436.75,380.89 437.00,383.01 437.25,385.12 437.50,387.21 437.75,389.30 438.00,391.37 438.25,393.44 438.50,395.49 438.75,397.53 439.00,399.55 439.25,401.57 439.50,403.57 439.75,405.55 440.00,407.53 440.25,409.48 440.50,411.43 440.75,413.36 441.00,415.27 441.25,417.17 441.50,419.05 441.75,420.92 442.00,422.76 442.25,424.59 442.50,426.41 442.75,428.20 443.00,429.98 443.25,431.74 443.50,433.48 443.75,435.20 444.00,436.90 444.25,438.59 444.50,440.25 444.75,441.89 445.00,443.51 445.25,445.11 445.50,446.69 445.75,448.25 446.00,449.78 446.25,451.30 446.50,452.79 446.75,454.25 447.00,455.70 447.25,457.12 447.50,458.52 447.75,459.89 448.00,461.25 448.25,462.57 448.50,463.87 448.75,465.15 449.00,466.40 449.25,467.63 449.50,468.83 449.75,470.01 450.00,471.16 450.25,472.28 450.50,473.38 450.75,474.45 451.00,475.50 451.25,476.51 451.50,477.51 451.75,478.47 452.00,479.40 452.25,480.31 452.50,481.19 452.75,482.05 453.00,482.87 453.25,483.67 453.50,484.44 453.75,485.18 454.00,485.89 454.25,486.57 454.50,487.22 454.75,487.85 455.00,488.44 455.25,489.01 455.50,489.54 455.75,490.05 456.00,490.53 456.25,490.98 456.50,491.39 456.75,491.78 457.00,492.14 457.25,492.47 457.50,492.77 457.75,493.04 458.00,493.27 458.25,493.48 458.50,493.66 458.75,493.81 459.00,493.93 459.25,494.01 459.50,494.07 459.75,494.10 460.00,494.09 460.25,494.06 460.50,494.00 460.75,493.90 461.00,493.78 461.25,493.62 461.50,493.44 461.75,493.22 462.00,492.97 462.25,492.70 462.50,492.39 462.75,492.06 463.00,491.69 463.25,491.30 463.50,490.87 463.75,490.42 464.00,489.93 464.25,489.42 464.50,488.87 464.75,488.30 465.00,487.70 465.25,487.07 465.50,486.41 465.75,485.72 466.00,485.00 466.25,484.25 466.50,483.48 466.75,482.68 467.00,481.84 467.25,480.99 467.50,480.10 467.75,479.18 468.00,478.24 468.25,477.27 468.50,476.27 468.75,475.25 469.00,474.20 469.25,473.12 469.50,472.02 469.75,470.88 470.00,469.73 470.25,468.55 470.50,467.34 470.75,466.11 471.00,464.85 471.25,463.56 471.50,462.26 471.75,460.92 472.00,459.57 472.25,458.19 472.50,456.78 472.75,455.35 473.00,453.90 473.25,452.43 473.50,450.93 473.75,449.42 474.00,447.88 474.25,446.31 474.50,444.73 474.75,443.12 475.00,441.50 475.25,439.85 475.50,438.18 475.75,436.50 476.00,434.79 476.25,433.07 476.50,431.32 476.75,429.56 477.00,427.77 477.25,425.97 477.50,424.16 477.75,422.32 478.00,420.47 478.25,418.60 478.50,416.71 478.75,414.81 479.00,412.90 479.25,410.96 479.50,409.02 479.75,407.05 480.00,405.08 480.25,403.09 480.50,401.08 480.75,399.07 481.00,397.04 481.25,395.00 481.50,392.94 481.75,390.88 482.00,388.80 482.25,386.71 482.50,384.61 482.75,382.50 483.00,380.39 483.25,378.26 483.50,376.12 483.75,373.98 484.00,371.82 484.25,369.66 484.50,367.49 484.75,365.32 485.00,363.14 485.25,360.95 485.50,358.76 485.75,356.56 486.00,354.35 486.25,352.14 486.50,349.93 486.75,347.72 487.00,345.50 487.25,343.27 487.50,341.05 487.75,338.82 488.00,336.59 488.25,334.36 488.50,332.13 488.75,329.90 489.00,327.67 489.25,325.44 489.50,323.21 489.75,320.98 490.00,318.75 490.25,316.53 490.50,314.30 490.75,312.09 491.00,309.87 491.25,307.66 491.50,305.45 491.75,303.24 492.00,301.04 492.25,298.85 492.50,296.66 492.75,294.48 493.00,292.30 493.25,290.13 493.50,287.97 493.75,285.82 494.00,283.67 494.25,281.53 494.50,279.41 494.75,277.29 495.00,275.18 495.25,273.08 495.50,270.99 495.75,268.91 496.00,266.84 496.25,264.79 496.50,262.75 496.75,260.71 497.00,258.70 497.25,256.69 497.50,254.70 497.75,252.72 498.00,250.76 498.25,248.81 498.50,246.88 498.75,244.96 499.00,243.05 499.25,241.17 499.50,239.30 499.75,237.44 500.00,235.61 500.25,233.79 500.50,231.98 500.75,230.20 501.00,228.43 501.25,226.69 501.50,224.96 501.75,223.25 502.00,221.56 502.25,219.89 502.50,218.25 502.75,216.62 503.00,215.01 503.25,213.42 503.50,211.86 503.75,210.32 504.00,208.80 504.25,207.30 504.50,205.82 504.75,204.37 505.00,202.94 505.25,201.53 505.50,200.15 505.75,198.79 506.00,197.46 506.25,196.15 506.50,194.86 506.75,193.60 507.00,192.36 507.25,191.15 507.50,189.97 507.75,188.81 508.00,187.68 508.25,186.57 508.50,185.49 508.75,184.43 509.00,183.41 509.25,182.41 509.50,181.44 509.75,180.49 510.00,179.57 510.25,178.68 510.50,177.82 510.75,176.98 511.00,176.18 511.25,175.40 511.50,174.65 511.75,173.93 512.00,173.24 512.25,172.58 512.50,171.94 512.75,171.34 513.00,170.76 513.25,170.21 513.50,169.70 513.75,169.21 514.00,168.75 514.25,168.32 514.50,167.93 514.75,167.56 515.00,167.22 515.25,166.91 515.50,166.63 515.75,166.38 516.00,166.16 516.25,165.98 516.50,165.82 516.75,165.69 517.00,165.59 517.25,165.52 517.50,165.49 517.75,165.48 518.00,165.50 518.25,165.56 518.50,165.64 518.75,165.76 519.00,165.90 519.25,166.08 519.50,166.28 519.75,166.52 520.00,166.78 520.25,167.08 520.50,167.40 520.75,167.76 521.00,168.14 521.25,168.56 521.50,169.00 521.75,169.48 522.00,169.98 522.25,170.52 522.50,171.08 522.75,171.67 523.00,172.29 523.25,172.94 523.50,173.62 523.75,174.33 524.00,175.07 524.25,175.83 524.50,176.63 524.75,177.45 525.00,178.30 525.25,179.18 525.50,180.08 525.75,181.02 526.00,181.98 526.25,182.96 526.50,183.98 526.75,185.02 527.00,186.09 527.25,187.19 527.50,188.31 527.75,189.45 528.00,190.63 528.25,191.83 528.50,193.05 528.75,194.30 529.00,195.58 529.25,196.88 529.50,198.20 529.75,199.55 530.00,200.92 530.25,202.32 530.50,203.74 530.75,205.18 531.00,206.65 531.25,208.13 531.50,209.64 531.75,211.18 532.00,212.73 532.25,214.31 532.50,215.91 532.75,217.53 533.00,219.17 533.25,220.83 533.50,222.51 533.75,224.21 534.00,225.93 534.25,227.66 534.50,229.42 534.75,231.20 535.00,232.99 535.25,234.80 535.50,236.63 535.75,238.48 536.00,240.34 536.25,242.22 536.50,244.12 536.75,246.03 537.00,247.96 537.25,249.90 537.50,251.86 537.75,253.83 538.00,255.81 538.25,257.81 538.50,259.83 538.75,261.85 539.00,263.89 539.25,265.94 539.50,268.00 539.75,270.07 540.00,272.16 540.25,274.25 540.50,276.36 540.75,278.47 541.00,280.60 541.25,282.73 541.50,284.87 541.75,287.02 542.00,289.18 542.25,291.35 542.50,293.52 542.75,295.70 543.00,297.88 543.25,300.08 543.50,302.27 543.75,304.48 544.00,306.68 544.25,308.89 544.50,311.11 544.75,313.33 545.00,315.55 545.25,317.77 545.50,320.00 545.75,322.23 546.00,324.46 546.25,326.69 546.50,328.92 546.75,331.15 547.00,333.38 547.25,335.61 547.50,337.84 547.75,340.07 548.00,342.30 548.25,344.52 548.50,346.74 548.75,348.96 549.00,351.17 549.25,353.38 549.50,355.59 549.75,357.79 550.00,359.99 550.25,362.18 550.50,364.36 550.75,366.54 551.00,368.71 551.25,370.87 551.50,373.03 551.75,375.18 552.00,377.32 552.25,379.45 552.50,381.57 552.75,383.69 553.00,385.79 553.25,387.88 553.50,389.96 553.75,392.03 554.00,394.09 554.25,396.14 554.50,398.18 554.75,400.20 555.00,402.21 555.25,404.20 555.50,406.19 555.75,408.15 556.00,410.11 556.25,412.05 556.50,413.97 556.75,415.88 557.00,417.77 557.25,419.65 557.50,421.51 557.75,423.35 558.00,425.18 558.25,426.98 558.50,428.77 558.75,430.55 559.00,432.30 559.25,434.03 559.50,435.75 559.75,437.44 560.00,439.12 560.25,440.78 560.50,442.41 560.75,444.03 561.00,445.62 561.25,447.19 561.50,448.74 561.75,450.27 562.00,451.77 562.25,453.26 562.50,454.72 562.75,456.16 563.00,457.57 563.25,458.96 563.50,460.33 563.75,461.67 564.00,462.99 564.25,464.29 564.50,465.55 564.75,466.80 565.00,468.02 565.25,469.21 565.50,470.38 565.75,471.52 566.00,472.64 566.25,473.73 566.50,474.79 566.75,475.83 567.00,476.83 567.25,477.82 567.50,478.77 567.75,479.70 568.00,480.60 568.25,481.47 568.50,482.31 568.75,483.13 569.00,483.92 569.25,484.68 569.50,485.41 569.75,486.11 570.00,486.78 570.25,487.43 570.50,488.04 570.75,488.63 571.00,489.18 571.25,489.71 571.50,490.21 571.75,490.67 572.00,491.11 572.25,491.52 572.50,491.90 572.75,492.25 573.00,492.57 573.25,492.86 573.50,493.12 573.75,493.34 574.00,493.54 574.25,493.71 574.50,493.85 574.75,493.96 575.00,494.03 575.25,494.08 575.50,494.10 575.75,494.09 576.00,494.04 576.25,493.97 576.50,493.86 576.75,493.73 577.00,493.56 577.25,493.37 577.50,493.14 577.75,492.89 578.00,492.60 578.25,492.29 578.50,491.94 578.75,491.57 579.00,491.16 579.25,490.73 579.50,490.26 579.75,489.77 580.00,489.25 580.25,488.69 580.50,488.11 580.75,487.50 581.00,486.86 581.25,486.19 581.50,485.49 581.75,484.77 582.00,484.01 582.25,483.23 582.50,482.41 582.75,481.57 583.00,480.70 583.25,479.81 583.50,478.88 583.75,477.93 584.00,476.95 584.25,475.95 584.50,474.91 584.75,473.86 585.00,472.77 585.25,471.66 585.50,470.52 585.75,469.35 586.00,468.16 586.25,466.95 586.50,465.71 586.75,464.44 587.00,463.15 587.25,461.83 587.50,460.49 587.75,459.13 588.00,457.74 588.25,456.33 588.50,454.89 588.75,453.43 589.00,451.95 589.25,450.45 589.50,448.93 589.75,447.38 590.00,445.81 590.25,444.22 590.50,442.61 590.75,440.97 591.00,439.32 591.25,437.65 591.50,435.95 591.75,434.24 592.00,432.51 592.25,430.76 592.50,428.99 592.75,427.20 593.00,425.39 593.25,423.57 593.50,421.73 593.75,419.87 594.00,418.00 594.25,416.11 594.50,414.20 594.75,412.28 595.00,410.34 595.25,408.39 595.50,406.42 595.75,404.44 596.00,402.45 596.25,400.44 596.50,398.42 596.75,396.39 597.00,394.34 597.25,392.28 597.50,390.21 597.75,388.13 598.00,386.04 598.25,383.94 598.50,381.83 598.75,379.71 599.00,377.58 599.25,375.44 599.50,373.29 599.75,371.13 600.00,368.97 600.25,366.80 600.50,364.62 600.75,362.44 601.00,360.25 601.25,358.05 601.50,355.85 601.75,353.65 602.00,351.44 602.25,349.22 602.50,347.01 602.75,344.79 603.00,342.56 603.25,340.34 603.50,338.11 603.75,335.88 604.00,333.65 604.25,331.42 604.50,329.19 604.75,326.96 605.00,324.73 605.25,322.50 605.50,320.27 605.75,318.04 606.00,315.82 606.25,313.59 606.50,311.38 606.75,309.16 607.00,306.95 607.25,304.74 607.50,302.54 607.75,300.34 608.00,298.15 608.25,295.96 608.50,293.78 608.75,291.61 609.00,289.44 609.25,287.28 609.50,285.13 609.75,282.99 610.00,280.85 610.25,278.73 610.50,276.61 610.75,274.50 611.00,272.41 611.25,270.32 611.50,268.25 611.75,266.19 612.00,264.13 612.25,262.09 612.50,260.07 612.75,258.05 613.00,256.05 613.25,254.07 613.50,252.09 613.75,250.13 614.00,248.19 614.25,246.26 614.50,244.35 614.75,242.45 615.00,240.57 615.25,238.70 615.50,236.85 615.75,235.02 616.00,233.21 616.25,231.41 616.50,229.63 616.75,227.87 617.00,226.13 617.25,224.41 617.50,222.71 617.75,221.03 618.00,219.36 618.25,217.72 618.50,216.10 618.75,214.50 619.00,212.92 619.25,211.36 619.50,209.83 619.75,208.31 620.00,206.82 620.25,205.35 620.50,203.91 620.75,202.49 621.00,201.09 621.25,199.71 621.50,198.36 621.75,197.03 622.00,195.73 622.25,194.45 622.50,193.20 622.75,191.97 623.00,190.77 623.25,189.59 623.50,188.44 623.75,187.32 624.00,186.22 624.25,185.15 624.50,184.10 624.75,183.08 625.00,182.09 625.25,181.13 625.50,180.19 625.75,179.28 626.00,178.40 626.25,177.55 626.50,176.72 626.75,175.93 627.00,175.16 627.25,174.42 627.50,173.71 627.75,173.02 628.00,172.37 628.25,171.74 628.50,171.15 628.75,170.58 629.00,170.05 629.25,169.54 629.50,169.06 629.75,168.61 630.00,168.19 630.25,167.80 630.50,167.45 630.75,167.12 631.00,166.82 631.25,166.55 631.50,166.31 631.75,166.10 632.00,165.92 632.25,165.77 632.50,165.66 632.75,165.57 633.00,165.51 633.25,165.48 633.50,165.49 633.75,165.52 634.00,165.58 634.25,165.68 634.50,165.80 634.75,165.95 635.00,166.14 635.25,166.35 635.50,166.60 635.75,166.87 636.00,167.18 636.25,167.51 636.50,167.88 636.75,168.27 637.00,168.70 637.25,169.15 637.50,169.64 637.75,170.15 638.00,170.69 638.25,171.27 638.50,171.87 638.75,172.50 639.00,173.16 639.25,173.85 639.50,174.56 639.75,175.31 640.00,176.08 640.25,176.89 640.50,177.72 640.75,178.58 641.00,179.46 641.25,180.38 641.50,181.32 641.75,182.29 642.00,183.29 642.25,184.31 642.50,185.36 642.75,186.44 643.00,187.54 643.25,188.67 643.50,189.83 643.75,191.01 644.00,192.22 644.25,193.45 644.50,194.71 644.75,195.99 645.00,197.30 645.25,198.63 645.50,199.98 645.75,201.36 646.00,202.77 646.25,204.20 646.50,205.65 646.75,207.12 647.00,208.61 647.25,210.13 647.50,211.67 647.75,213.23 648.00,214.82 648.25,216.42 648.50,218.05 648.75,219.69 649.00,221.36 649.25,223.05 649.50,224.75 649.75,226.48 650.00,228.22 650.25,229.99 650.50,231.77 650.75,233.57 651.00,235.39 651.25,237.22 651.50,239.07 651.75,240.94 652.00,242.83 652.25,244.73 652.50,246.64 652.75,248.58 653.00,250.52 653.25,252.49 653.50,254.46 653.75,256.45 654.00,258.46 654.25,260.47 654.50,262.50 654.75,264.54 655.00,266.60 655.25,268.66 655.50,270.74 655.75,272.83 656.00,274.92 656.25,277.03 656.50,279.15 656.75,281.28 657.00,283.41 657.25,285.56 657.50,287.71 657.75,289.87 658.00,292.04 658.25,294.22 658.50,296.40 658.75,298.59 659.00,300.78 659.25,302.98 659.50,305.18 659.75,307.39 660.00,309.60 660.25,311.82 660.50,314.04 660.75,316.26 661.00,318.49 661.25,320.71 661.50,322.94 661.75,325.17 662.00,327.40 662.25,329.63 662.50,331.86 662.75,334.10 663.00,336.33 663.25,338.55 663.50,340.78 663.75,343.01 664.00,345.23 664.25,347.45 664.50,349.67 664.75,351.88 665.00,354.09 665.25,356.29 665.50,358.49 665.75,360.69 666.00,362.88 666.25,365.06 666.50,367.23 666.75,369.40 667.00,371.56 667.25,373.72 667.50,375.86 667.75,378.00 668.00,380.13 668.25,382.25 668.50,384.36 668.75,386.46 669.00,388.55 669.25,390.63 669.50,392.69 669.75,394.75 670.00,396.79 670.25,398.82 670.50,400.84 670.75,402.85 671.00,404.84 671.25,406.82 671.50,408.78 671.75,410.73 672.00,412.66 672.25,414.58 672.50,416.49 672.75,418.37 673.00,420.25 673.25,422.10 673.50,423.94 673.75,425.76 674.00,427.56 674.25,429.34 674.50,431.11 674.75,432.86 675.00,434.58 675.25,436.29 675.50,437.98 675.75,439.65 676.00,441.30 676.25,442.93 676.50,444.54 676.75,446.12 677.00,447.69 677.25,449.23 677.50,450.75 677.75,452.25 678.00,453.73 678.25,455.18 678.50,456.61 678.75,458.02 679.00,459.40 679.25,460.76 679.50,462.10 679.75,463.41 680.00,464.69 680.25,465.96 680.50,467.19 680.75,468.40 681.00,469.59 681.25,470.75 681.50,471.88 681.75,472.99 682.00,474.07 682.25,475.12 682.50,476.15 682.75,477.15 683.00,478.12 683.25,479.07 683.50,479.99 683.75,480.88 684.00,481.74 684.25,482.58 684.50,483.38 684.75,484.16 685.00,484.91 685.25,485.63 685.50,486.33 685.75,486.99 686.00,487.63 686.25,488.23 686.50,488.81 686.75,489.35 687.00,489.87 687.25,490.36 687.50,490.82 687.75,491.25 688.00,491.65 688.25,492.02 688.50,492.35 688.75,492.66 689.00,492.94 689.25,493.19 689.50,493.41 689.75,493.60 690.00,493.76 690.25,493.89 690.50,493.99 690.75,494.05 691.00,494.09 691.25,494.10 691.50,494.08 691.75,494.02 692.00,493.94 692.25,493.82 692.50,493.68 692.75,493.51 693.00,493.30 693.25,493.07 693.50,492.80 693.75,492.51 694.00,492.18 694.25,491.83 694.50,491.44 694.75,491.03 695.00,490.58 695.25,490.11 695.50,489.61 695.75,489.07 696.00,488.51 696.25,487.92 696.50,487.30 696.75,486.65 697.00,485.97 697.25,485.26 697.50,484.53 697.75,483.76 698.00,482.97 698.25,482.15 698.50,481.30 698.75,480.42 699.00,479.52 699.25,478.58 699.50,477.62 699.75,476.63 700.00,475.62 700.25,474.58 700.50,473.51 700.75,472.42 701.00,471.29 701.25,470.15 701.50,468.97 701.75,467.78 702.00,466.55 702.25,465.30 702.50,464.03 702.75,462.73 703.00,461.41 703.25,460.06 703.50,458.69 703.75,457.29 704.00,455.87 704.25,454.43 704.50,452.96 704.75,451.48 705.00,449.96 705.25,448.43 705.50,446.88 705.75,445.30 706.00,443.70 706.25,442.09 706.50,440.45 706.75,438.79 707.00,437.11 707.25,435.41 707.50,433.69 707.75,431.95 708.00,430.19 708.25,428.42 708.50,426.62 708.75,424.81 709.00,422.98 709.25,421.14 709.50,419.27 709.75,417.40 710.00,415.50 710.25,413.59 710.50,411.66 710.75,409.72 711.00,407.76 711.25,405.79 711.50,403.81 711.75,401.81 712.00,399.79 712.25,397.77 712.50,395.73 712.75,393.68 713.00,391.62 713.25,389.55 713.50,387.46 713.75,385.37 714.00,383.26 714.25,381.15 714.50,379.03 714.75,376.89 715.00,374.75 715.25,372.60 715.50,370.44 715.75,368.28 716.00,366.10 716.25,363.92 716.50,361.74 716.75,359.55 717.00,357.35 717.25,355.15 717.50,352.94 717.75,350.73 718.00,348.51 718.25,346.30 718.50,344.07 718.75,341.85 719.00,339.62 719.25,337.40 719.50,335.17 719.75,332.94 720.00,330.70 720.25,328.47 720.50,326.24 720.75,324.01 721.00,321.78 721.25,319.55 721.50,317.33 721.75,315.10 722.00,312.88 722.25,310.67 722.50,308.45 722.75,306.24 723.00,304.04 723.25,301.83 723.50,299.64 723.75,297.45 724.00,295.26 724.25,293.08 724.50,290.91 724.75,288.75 725.00,286.59 725.25,284.44 725.50,282.30 725.75,280.17 726.00,278.05 726.25,275.94 726.50,273.83 726.75,271.74 727.00,269.66 727.25,267.59 727.50,265.53 727.75,263.48 728.00,261.44 728.25,259.42 728.50,257.41 728.75,255.42 729.00,253.43 729.25,251.46 729.50,249.51 729.75,247.57 730.00,245.65 730.25,243.74 730.50,241.84 730.75,239.97 731.00,238.11 731.25,236.26 731.50,234.44 731.75,232.63 732.00,230.84 732.25,229.07 732.50,227.31 732.75,225.58 733.00,223.86 733.25,222.17 733.50,220.49 733.75,218.84 734.00,217.20 734.25,215.59 734.50,213.99 734.75,212.42 735.00,210.87 735.25,209.34 735.50,207.83 735.75,206.35 736.00,204.89 736.25,203.45 736.50,202.04 736.75,200.64 737.00,199.28 737.25,197.93 737.50,196.61 737.75,195.32 738.00,194.05 738.25,192.81 738.50,191.59 738.75,190.39 739.00,189.22 739.25,188.08 739.50,186.96 739.75,185.87 740.00,184.81 740.25,183.77 740.50,182.76 740.75,181.78 741.00,180.83 741.25,179.90 741.50,179.00 741.75,178.13 742.00,177.28 742.25,176.47 742.50,175.68 742.75,174.92 743.00,174.19 743.25,173.48 743.50,172.81 743.75,172.17 744.00,171.55 744.25,170.96 744.50,170.41 744.75,169.88 745.00,169.38 745.25,168.91 745.50,168.47 745.75,168.07 746.00,167.69 746.25,167.34 746.50,167.02 746.75,166.73 747.00,166.47 747.25,166.24 747.50,166.04 747.75,165.87 748.00,165.73 748.25,165.62 748.50,165.55 748.75,165.50 749.00,165.48 749.25,165.49 749.50,165.54 749.75,165.61 750.00,165.71 750.25,165.85 750.50,166.01 750.75,166.20 751.00,166.43 751.25,166.68 751.50,166.97 751.75,167.28 752.00,167.63 752.25,168.00 752.50,168.41 752.75,168.84 753.00,169.30 753.25,169.80 753.50,170.32 753.75,170.87 754.00,171.46 754.25,172.07 754.50,172.71 754.75,173.37 755.00,174.07 755.25,174.80 755.50,175.55 755.75,176.34 756.00,177.15 756.25,177.99 756.50,178.86 756.75,179.75 757.00,180.68 757.25,181.63 757.50,182.61 757.75,183.61 758.00,184.64 758.25,185.70 758.50,186.79 758.75,187.90 759.00,189.04 759.25,190.20 759.50,191.39 759.75,192.61 760.00,193.85 760.25,195.11 760.50,196.41 760.75,197.72 761.00,199.06 761.25,200.42 761.50,201.81 761.75,203.22 762.00,204.66 762.25,206.11 762.50,207.60 762.75,209.10 763.00,210.62 763.25,212.17 763.50,213.74 763.75,215.33 764.00,216.94 764.25,218.57 764.50,220.23 764.75,221.90 765.00,223.59 765.25,225.30 765.50,227.04 765.75,228.79 766.00,230.56 766.25,232.34 766.50,234.15 766.75,235.97 767.00,237.81 767.25,239.67 767.50,241.54 767.75,243.43 768.00,245.34 768.25,247.26 768.50,249.20 768.75,251.15 769.00,253.12 769.25,255.10 769.50,257.09 769.75,259.10 770.00,261.12 770.25,263.15 770.50,265.20 770.75,267.26 771.00,269.33 771.25,271.41 771.50,273.50 771.75,275.60 772.00,277.71 772.25,279.83 772.50,281.96 772.75,284.10 773.00,286.25 773.25,288.40 773.50,290.57 773.75,292.74 774.00,294.91 774.25,297.10 774.50,299.29 774.75,301.48 775.00,303.68 775.25,305.89 775.50,308.10 775.75,310.31 776.00,312.53 776.25,314.75 776.50,316.97 776.75,319.20 777.00,321.43 777.25,323.65 777.50,325.89 777.75,328.12 778.00,330.35 778.25,332.58 778.50,334.81 778.75,337.04 779.00,339.27 779.25,341.49 779.50,343.72 779.75,345.94 780.00,348.16 780.25,350.38 780.50,352.59 780.75,354.79 781.00,357.00 781.25,359.20 781.50,361.39 781.75,363.57 782.00,365.75 782.25,367.93 782.50,370.10 782.75,372.25 783.00,374.41 783.25,376.55 783.50,378.68 783.75,380.81 784.00,382.93 784.25,385.03 784.50,387.13 784.75,389.21 785.00,391.29 785.25,393.35 785.50,395.40 785.75,397.44 786.00,399.47 786.25,401.49 786.50,403.49 786.75,405.47 787.00,407.45 787.25,409.41 787.50,411.35 787.75,413.28 788.00,415.19 788.25,417.09 788.50,418.98 788.75,420.84 789.00,422.69 789.25,424.52 789.50,426.34 789.75,428.13 790.00,429.91 790.25,431.67 790.50,433.41 790.75,435.13 791.00,436.84 791.25,438.52 791.50,440.18 791.75,441.82 792.00,443.45 792.25,445.05 792.50,446.63 792.75,448.19 793.00,449.72 793.25,451.24 793.50,452.73 793.75,454.20 794.00,455.64 794.25,457.06 794.50,458.46 794.75,459.84 795.00,461.19 795.25,462.52 795.50,463.82 795.75,465.10 796.00,466.35 796.25,467.58 796.50,468.78 796.75,469.96 797.00,471.11 797.25,472.24 797.50,473.34 797.75,474.41 798.00,475.46 798.25,476.47 798.50,477.47 798.75,478.43 799.00,479.37 799.25,480.28 799.50,481.16 799.75,482.01 800.00,482.84 800.25,483.64 800.50,484.41 800.75,485.15 801.00,485.86 801.25,486.54 801.50,487.20 801.75,487.82 802.00,488.42 802.25,488.99 802.50,489.52 802.75,490.03 803.00,490.51 803.25,490.96 803.50,491.38 803.75,491.77 804.00,492.13 804.25,492.46 804.50,492.76 804.75,493.03 805.00,493.27 805.25,493.48 805.50,493.65 805.75,493.80 806.00,493.92 806.25,494.01 806.50,494.07 806.75,494.10 807.00,494.09 807.25,494.06 807.50,494.00 807.75,493.91 808.00,493.78 808.25,493.63 808.50,493.44 808.75,493.23 809.00,492.99 809.25,492.71 809.50,492.41 809.75,492.07 810.00,491.71 810.25,491.31 810.50,490.89 810.75,490.44 811.00,489.95 811.25,489.44 811.50,488.90 811.75,488.32 812.00,487.72 812.25,487.09 812.50,486.43 812.75,485.75 813.00,485.03 813.25,484.28 813.50,483.51 813.75,482.71 814.00,481.88 814.25,481.02 814.50,480.13 814.75,479.22 815.00,478.28 815.25,477.31 815.50,476.31 815.75,475.29 816.00,474.24 816.25,473.16 816.50,472.06 816.75,470.93 817.00,469.78 817.25,468.59 817.50,467.39 817.75,466.15 818.00,464.90 818.25,463.62 818.50,462.31 818.75,460.98 819.00,459.62 819.25,458.24 819.50,456.84 819.75,455.41 820.00,453.96 820.25,452.49 820.50,450.99 820.75,449.48 821.00,447.94 821.25,446.38 821.50,444.79 821.75,443.19 822.00,441.56 822.25,439.92 822.50,438.25 822.75,436.57 823.00,434.86 823.25,433.13 823.50,431.39 823.75,429.63 824.00,427.85 824.25,426.05 824.50,424.23 824.75,422.40 825.00,420.54 825.25,418.67 825.50,416.79 825.75,414.89 826.00,412.97 826.25,411.04 826.50,409.09 826.75,407.13 827.00,405.16 827.25,403.17 827.50,401.16 827.75,399.15 828.00,397.12 828.25,395.08 828.50,393.02 828.75,390.96 829.00,388.88 829.25,386.79 829.50,384.70 829.75,382.59 830.00,380.47 830.25,378.34 830.50,376.21 830.75,374.06 831.00,371.91 831.25,369.75 831.50,367.58 831.75,365.41 832.00,363.23 832.25,361.04 832.50,358.84 832.75,356.65 833.00,354.44 833.25,352.23 833.50,350.02 833.75,347.80 834.00,345.59 834.25,343.36 834.50,341.14 834.75,338.91 835.00,336.68 835.25,334.45 835.50,332.22 835.75,329.99 836.00,327.76 836.25,325.53 836.50,323.30 836.75,321.07 837.00,318.84 837.25,316.62 837.50,314.39 837.75,312.17 838.00,309.96 838.25,307.74 838.50,305.53 838.75,303.33 839.00,301.13 839.25,298.94 839.50,296.75 839.75,294.56 840.00,292.39 840.25,290.22 840.50,288.06 840.75,285.90 841.00,283.76 841.25,281.62 841.50,279.49 841.75,277.37 842.00,275.26 842.25,273.16 842.50,271.07 842.75,268.99 843.00,266.93 843.25,264.87 843.50,262.83 843.75,260.80 844.00,258.78 844.25,256.77 844.50,254.78 844.75,252.80 845.00,250.84 845.25,248.89 845.50,246.95 845.75,245.03 846.00,243.13 846.25,241.24 846.50,239.37 846.75,237.52 847.00,235.68 847.25,233.86 847.50,232.06 847.75,230.27 848.00,228.50 848.25,226.76 848.50,225.03 848.75,223.32 849.00,221.63 849.25,219.96 849.50,218.31 849.75,216.68 850.00,215.07 850.25,213.49 850.50,211.92 850.75,210.38 851.00,208.86 851.25,207.36 851.50,205.88 851.75,204.43 852.00,203.00 852.25,201.59 852.50,200.20 852.75,198.84 853.00,197.51 853.25,196.20 853.50,194.91 853.75,193.65 854.00,192.41 854.25,191.20 854.50,190.01 854.75,188.85 855.00,187.72 855.25,186.61 855.50,185.53 855.75,184.48 856.00,183.45 856.25,182.45 856.50,181.47 856.75,180.53 857.00,179.61 857.25,178.72 857.50,177.85 857.75,177.02 858.00,176.21 858.25,175.43 858.50,174.68 858.75,173.96 859.00,173.27 859.25,172.60 859.50,171.97 859.75,171.36 860.00,170.78 860.25,170.24 860.50,169.72 860.75,169.23 861.00,168.77 861.25,168.34 861.50,167.94 861.75,167.57 862.00,167.23 862.25,166.92 862.50,166.64 862.75,166.39 863.00,166.17 863.25,165.98 863.50,165.82 863.75,165.69 864.00,165.60 864.25,165.53 864.50,165.49 864.75,165.48 865.00,165.50 865.25,165.56 865.50,165.64 865.75,165.75 866.00,165.90 866.25,166.07 866.50,166.27 866.75,166.51 867.00,166.77 867.25,167.07 867.50,167.39 867.75,167.74 868.00,168.13 868.25,168.54 868.50,168.99 868.75,169.46 869.00,169.96 869.25,170.49 869.50,171.06 869.75,171.65 870.00,172.27 870.25,172.92 870.50,173.60 870.75,174.30 871.00,175.04 871.25,175.80 871.50,176.59 871.75,177.42 872.00,178.26 872.25,179.14 872.50,180.05 872.75,180.98 873.00,181.94 873.25,182.92 873.50,183.94 873.75,184.98 874.00,186.05 874.25,187.14 874.50,188.26 874.75,189.41 875.00,190.58 875.25,191.78 875.50,193.00 875.75,194.25 876.00,195.53 876.25,196.82 876.50,198.15 876.75,199.49 877.00,200.87 877.25,202.26 877.50,203.68 877.75,205.12 878.00,206.59 878.25,208.07 878.50,209.58 878.75,211.12 879.00,212.67 879.25,214.25 879.50,215.84 879.75,217.46 880.00,219.10 880.25,220.76 880.50,222.44 880.75,224.14 881.00,225.86 881.25,227.59 881.50,229.35 881.75,231.13 882.00,232.92 882.25,234.73 882.50,236.56 882.75,238.40 883.00,240.27 883.25,242.15 883.50,244.04 883.75,245.95 884.00,247.88 884.25,249.82 884.50,251.78 884.75,253.75 885.00,255.73 885.25,257.73 885.50,259.74 885.75,261.77 886.00,263.81 886.25,265.86 886.50,267.92 886.75,269.99 887.00,272.07 887.25,274.17 887.50,276.27 887.75,278.39 888.00,280.51 888.25,282.64 888.50,284.79 888.75,286.94 889.00,289.09 889.25,291.26 889.50,293.43 889.75,295.61 890.00,297.80 890.25,299.99 890.50,302.19 890.75,304.39 891.00,306.59 891.25,308.81 891.50,311.02 891.75,313.24 892.00,315.46 892.25,317.68 892.50,319.91 892.75,322.14 893.00,324.37 893.25,326.60 893.50,328.83 893.75,331.06 894.00,333.29 894.25,335.52 894.50,337.75 894.75,339.98 895.00,342.21 895.25,344.43 895.50,346.65 895.75,348.87 896.00,351.08 896.25,353.29 896.50,355.50 896.75,357.70 897.00,359.90 897.25,362.09 897.50,364.27 897.75,366.45 898.00,368.62 898.25,370.79 898.50,372.94 898.75,375.09 899.00,377.23 899.25,379.37 899.50,381.49 899.75,383.60 900.00,385.70 900.25,387.80 900.50,389.88 900.75,391.95 901.00,394.01 901.25,396.06 901.50,398.09 901.75,400.12 902.00,402.13 902.25,404.12 902.50,406.11 902.75,408.08 903.00,410.03 903.25,411.97 903.50,413.89 903.75,415.80 904.00,417.70 904.25,419.57 904.50,421.43 904.75,423.28 905.00,425.10 905.25,426.91 905.50,428.70 905.75,430.48 906.00,432.23 906.25,433.97 906.50,435.68 906.75,437.38 907.00,439.05 907.25,440.71 907.50,442.35 907.75,443.96 908.00,445.56 908.25,447.13 908.50,448.68 908.75,450.21 909.00,451.72 909.25,453.20 909.50,454.66 909.75,456.10 910.00,457.52 910.25,458.91 910.50,460.28 910.75,461.62 911.00,462.94 911.25,464.23 911.50,465.50 911.75,466.75 912.00,467.97 912.25,469.16 912.50,470.33 912.75,471.48 913.00,472.59 913.25,473.68 913.50,474.75 913.75,475.78 914.00,476.79 914.25,477.78 914.50,478.73 914.75,479.66 915.00,480.56 915.25,481.44 915.50,482.28 915.75,483.10 916.00,483.89 916.25,484.65 916.50,485.38 916.75,486.08 917.00,486.75 917.25,487.40 917.50,488.02 917.75,488.60 918.00,489.16 918.25,489.69 918.50,490.19 918.75,490.66 919.00,491.10 919.25,491.51 919.50,491.89 919.75,492.24 920.00,492.56 920.25,492.85 920.50,493.11 920.75,493.34 921.00,493.54 921.25,493.71 921.50,493.84 921.75,493.95 922.00,494.03 922.25,494.08 922.50,494.10 922.75,494.09 923.00,494.04 923.25,493.97 923.50,493.87 923.75,493.74 924.00,493.57 924.25,493.38 924.50,493.15 924.75,492.90 925.00,492.62 925.25,492.30 925.50,491.96 925.75,491.58 926.00,491.18 926.25,490.75 926.50,490.28 926.75,489.79 927.00,489.27 927.25,488.72 927.50,488.14 927.75,487.53 928.00,486.89 928.25,486.22 928.50,485.52 928.75,484.79 929.00,484.04 929.25,483.26 929.50,482.45 929.75,481.61 930.00,480.74 930.25,479.84 930.50,478.92 930.75,477.97 931.00,476.99 931.25,475.99 931.50,474.96 931.75,473.90 932.00,472.81 932.25,471.70 932.50,470.56 932.75,469.40 933.00,468.21 933.25,467.00 933.50,465.76 933.75,464.49 934.00,463.20 934.25,461.89 934.50,460.55 934.75,459.18 935.00,457.80 935.25,456.38 935.50,454.95 935.75,453.49 936.00,452.01 936.25,450.51 936.50,448.99 936.75,447.44 937.00,445.87 937.25,444.28 937.50,442.67 937.75,441.04 938.00,439.39 938.25,437.71 938.50,436.02 938.75,434.31 939.00,432.58 939.25,430.83 939.50,429.06 939.75,427.27 940.00,425.47 940.25,423.64 940.50,421.80 940.75,419.95 941.00,418.07 941.25,416.18 941.50,414.28 941.75,412.36 942.00,410.42 942.25,408.47 942.50,406.50 942.75,404.52 943.00,402.53 943.25,400.52 943.50,398.50 943.75,396.47 944.00,394.42 944.25,392.36 944.50,390.30 944.75,388.22 945.00,386.12 945.25,384.02 945.50,381.91 945.75,379.79 946.00,377.66 946.25,375.52 946.50,373.37 946.75,371.22 947.00,369.06 947.25,366.89 947.50,364.71 947.75,362.53 948.00,360.34 948.25,358.14 948.50,355.94 948.75,353.74 949.00,351.53 949.25,349.31 949.50,347.09 949.75,344.87 950.00,342.65 950.25,340.43 950.50,338.20 950.75,335.97 951.00,333.74 951.25,331.51 951.50,329.28 951.75,327.05 952.00,324.81 952.25,322.58 952.50,320.36 952.75,318.13 953.00,315.91 953.25,313.68 953.50,311.46 953.75,309.25 954.00,307.04 954.25,304.83 954.50,302.63 954.75,300.43 955.00,298.24 955.25,296.05 955.50,293.87 955.75,291.69 956.00,289.53 956.25,287.37 956.50,285.22 956.75,283.07 957.00,280.94 957.25,278.81 957.50,276.70 957.75,274.59 958.00,272.49 958.25,270.41 958.50,268.33 958.75,266.27 959.00,264.22 959.25,262.18 959.50,260.15 959.75,258.13 960.00,256.13 960.25,254.14 960.50,252.17 960.75,250.21 961.00,248.27 961.25,246.34 961.50,244.42 961.75,242.52 962.00,240.64 962.25,238.78 962.50,236.93 962.75,235.09 963.00,233.28 963.25,231.48 963.50,229.70 963.75,227.94 964.00,226.20 964.25,224.48 964.50,222.78 964.75,221.09 965.00,219.43 965.25,217.79 965.50,216.16 965.75,214.56 966.00,212.98 966.25,211.43 966.50,209.89 966.75,208.37 967.00,206.88 967.25,205.41 967.50,203.97 967.75,202.54 968.00,201.14 968.25,199.77 968.50,198.41 968.75,197.09 969.00,195.78 969.25,194.50 969.50,193.25 969.75,192.02 970.00,190.82 970.25,189.64 970.50,188.49 970.75,187.36 971.00,186.26 971.25,185.19 971.50,184.14 971.75,183.13 972.00,182.13 972.25,181.17 972.50,180.23 972.75,179.32 973.00,178.44 973.25,177.58 973.50,176.76 973.75,175.96 974.00,175.19 974.25,174.45 974.50,173.73 974.75,173.05 975.00,172.40 975.25,171.77 975.50,171.17 975.75,170.60 976.00,170.07 976.25,169.56 976.50,169.08 976.75,168.63 977.00,168.21 977.25,167.82 977.50,167.46 977.75,167.13 978.00,166.83 978.25,166.56 978.50,166.32 978.75,166.11 979.00,165.93 979.25,165.78 979.50,165.66 979.75,165.57 980.00,165.51 980.25,165.48 980.50,165.48 980.75,165.52 981.00,165.58 981.25,165.67 981.50,165.79 981.75,165.95 982.00,166.13 982.25,166.35 982.50,166.59 982.75,166.86 983.00,167.17 983.25,167.50 983.50,167.86 983.75,168.26 984.00,168.68 984.25,169.13 984.50,169.62 984.75,170.13 985.00,170.67 985.25,171.24 985.50,171.84 985.75,172.47 986.00,173.13 986.25,173.82 986.50,174.53 986.75,175.28 987.00,176.05 987.25,176.85 987.50,177.68 987.75,178.54 988.00,179.43 988.25,180.34 988.50,181.28 988.75,182.25 989.00,183.25 989.25,184.27 989.50,185.32 989.75,186.39 990.00,187.50 990.25,188.63 990.50,189.78 990.75,190.96 991.00,192.17 991.25,193.40 991.50,194.66 991.75,195.94 992.00,197.24 992.25,198.58 992.50,199.93 992.75,201.31 993.00,202.71 993.25,204.14 993.50,205.59 993.75,207.06 994.00,208.55 994.25,210.07 994.50,211.61 994.75,213.17 995.00,214.75 995.25,216.36 995.50,217.98 995.75,219.63 996.00,221.29 996.25,222.98 996.50,224.69 996.75,226.41 997.00,228.15 997.25,229.92 997.50,231.70 997.75,233.50 998.00,235.31 998.25,237.15 998.50,239.00 998.75,240.87 999.00,242.75 999.25,244.65 999.50,246.57 999.75,248.50 1000.00,250.45 1000.25,252.41 1000.50,254.38 1000.75,256.37 1001.00,258.37 1001.25,260.39 1001.50,262.42 1001.75,264.46 1002.00,266.51 1002.25,268.58 1002.50,270.66 1002.75,272.74 1003.00,274.84 1003.25,276.95 1003.50,279.07 1003.75,281.19 1004.00,283.33 1004.25,285.47 1004.50,287.63 1004.75,289.79 1005.00,291.95 1005.25,294.13 1005.50,296.31 1005.75,298.50 1006.00,300.69 1006.25,302.89 1006.50,305.09 1006.75,307.30 1007.00,309.51 1007.25,311.73 1007.50,313.95 1007.75,316.17 1008.00,318.40 1008.25,320.62 1008.50,322.85 1008.75,325.08 1009.00,327.31 1009.25,329.54 1009.50,331.78 1009.75,334.01 1010.00,336.24 1010.25,338.47 1010.50,340.69 1010.75,342.92 1011.00,345.14 1011.25,347.36 1011.50,349.58 1011.75,351.79 1012.00,354.00 1012.25,356.20 1012.50,358.40 1012.75,360.60 1013.00,362.79 1013.25,364.97 1013.50,367.15 1013.75,369.32 1014.00,371.48 1014.25,373.63 1014.50,375.78 1014.75,377.92 1015.00,380.05 1015.25,382.17 1015.50,384.28 1015.75,386.38 1016.00,388.47 1016.25,390.54 1016.50,392.61 1016.75,394.67 1017.00,396.71 1017.25,398.74 1017.50,400.76 1017.75,402.77 1018.00,404.76 1018.25,406.74 1018.50,408.70 1018.75,410.65 1019.00,412.59 1019.25,414.51 1019.50,416.41 1019.75,418.30 1020.00,420.17 1020.25,422.03 1020.50,423.86 1020.75,425.68 1021.00,427.49 1021.25,429.27 1021.50,431.04 1021.75,432.79 1022.00,434.52 1022.25,436.23 1022.50,437.92 1022.75,439.59 1023.00,441.24 1023.25,442.87 1023.50,444.47 1023.75,446.06 1024.00,447.63 1024.25,449.17 1024.50,450.69 1024.75,452.19 1025.00,453.67 1025.25,455.12 1025.50,456.56 1025.75,457.96 1026.00,459.35 1026.25,460.71 1026.50,462.04 1026.75,463.36 1027.00,464.64 1027.25,465.91 1027.50,467.14 1027.75,468.35 1028.00,469.54 1028.25,470.70 1028.50,471.84 1028.75,472.94 1029.00,474.03 1029.25,475.08 1029.50,476.11 1029.75,477.11 1030.00,478.09 1030.25,479.03 1030.50,479.95 1030.75,480.85 1031.00,481.71 1031.25,482.55 1031.50,483.35 1031.75,484.13 1032.00,484.88 1032.25,485.61 1032.50,486.30 1032.75,486.96 1033.00,487.60 1033.25,488.21 1033.50,488.78 1033.75,489.33 1034.00,489.85 1034.25,490.34 1034.50,490.80 1034.75,491.23 1035.00,491.63 1035.25,492.00 1035.50,492.34 1035.75,492.65 1036.00,492.93 1036.25,493.18 1036.50,493.40 1036.75,493.59 1037.00,493.75 1037.25,493.88 1037.50,493.98 1037.75,494.05 1038.00,494.09 1038.25,494.10 1038.50,494.08 1038.75,494.02 1039.00,493.94 1039.25,493.83 1039.50,493.69 1039.75,493.51 1040.00,493.31 1040.25,493.08 1040.50,492.81 1040.75,492.52 1041.00,492.20 1041.25,491.84 1041.50,491.46 1041.75,491.05 1042.00,490.60 1042.25,490.13 1042.50,489.63 1042.75,489.10 1043.00,488.53 1043.25,487.94 1043.50,487.32 1043.75,486.68 1044.00,486.00 1044.25,485.29 1044.50,484.56 1044.75,483.79 1045.00,483.00 1045.25,482.18 1045.50,481.33 1045.75,480.46 1046.00,479.55 1046.25,478.62 1046.50,477.66 1046.75,476.67 1047.00,475.66 1047.25,474.62 1047.50,473.55 1047.75,472.46 1048.00,471.34 1048.25,470.19 1048.50,469.02 1048.75,467.82 1049.00,466.60 1049.25,465.35 1049.50,464.08 1049.75,462.78 1050.00,461.46 1050.25,460.11 1050.50,458.74 1050.75,457.35 1051.00,455.93 1051.25,454.49 1051.50,453.02 1051.75,451.54 1052.00,450.03 1052.25,448.49 1052.50,446.94 1052.75,445.37 1053.00,443.77 1053.25,442.15 1053.50,440.51 1053.75,438.85 1054.00,437.17 1054.25,435.48 1054.50,433.76 1054.75,432.02 1055.00,430.26 1055.25,428.49 1055.50,426.70 1055.75,424.89 1056.00,423.06 1056.25,421.21 1056.50,419.35 1056.75,417.47 1057.00,415.58 1057.25,413.66 1057.50,411.74 1057.75,409.80 1058.00,407.84 1058.25,405.87 1058.50,403.89 1058.75,401.89 1059.00,399.88 1059.25,397.85 1059.50,395.81 1059.75,393.76 1060.00,391.70 1060.25,389.63 1060.50,387.55 1060.75,385.45 1061.00,383.35 1061.25,381.23 1061.50,379.11 1061.75,376.98 1062.00,374.84 1062.25,372.69 1062.50,370.53 1062.75,368.36 1063.00,366.19 1063.25,364.01 1063.50,361.83 1063.75,359.63 1064.00,357.44 1064.25,355.24 1064.50,353.03 1064.75,350.82 1065.00,348.60 1065.25,346.38 1065.50,344.16 1065.75,341.94 1066.00,339.71 1066.25,337.48 1066.50,335.26 1066.75,333.02 1067.00,330.79 1067.25,328.56 1067.50,326.33 1067.75,324.10 1068.00,321.87 1068.25,319.64 1068.50,317.42 1068.75,315.19 1069.00,312.97 1069.25,310.75 1069.50,308.54 1069.75,306.33 1070.00,304.12 1070.25,301.92 1070.50,299.73 1070.75,297.53 1071.00,295.35 1071.25,293.17 1071.50,291.00 1071.75,288.83 1072.00,286.68 1072.25,284.53 1072.50,282.39 1072.75,280.26 1073.00,278.13 1073.25,276.02 1073.50,273.92 1073.75,271.82 1074.00,269.74 1074.25,267.67 1074.50,265.61 1074.75,263.56 1075.00,261.53 1075.25,259.50 1075.50,257.49 1075.75,255.49 1076.00,253.51 1076.25,251.54 1076.50,249.59 1076.75,247.65 1077.00,245.72 1077.25,243.81 1077.50,241.92 1077.75,240.04 1078.00,238.18 1078.25,236.34 1078.50,234.51 1078.75,232.70 1079.00,230.91 1079.25,229.14 1079.50,227.38 1079.75,225.65 1080.00,223.93 1080.25,222.24 1080.50,220.56 1080.75,218.90 1081.00,217.27 1081.25,215.65 1081.50,214.06 1081.75,212.48 1082.00,210.93 1082.25,209.40 1082.50,207.89 1082.75,206.41 1083.00,204.95 1083.25,203.51 1083.50,202.09 1083.75,200.70 1084.00,199.33 1084.25,197.99 1084.50,196.67 1084.75,195.37 1085.00,194.10 1085.25,192.85 1085.50,191.63 1085.75,190.44 1086.00,189.27 1086.25,188.13 1086.50,187.01 1086.75,185.92 1087.00,184.85 1087.25,183.82 1087.50,182.80 1087.75,181.82 1088.00,180.86 1088.25,179.94 1088.50,179.03 1088.75,178.16 1089.00,177.32 1089.25,176.50 1089.50,175.71 1089.75,174.95 1090.00,174.22 1090.25,173.51 1090.50,172.84 1090.75,172.19 1091.00,171.58 1091.25,170.99 1091.50,170.43 1091.75,169.90 1092.00,169.40 1092.25,168.93 1092.50,168.49 1092.75,168.08 1093.00,167.70 1093.25,167.35 1093.50,167.03 1093.75,166.74 1094.00,166.48 1094.25,166.25 1094.50,166.05 1094.75,165.88 1095.00,165.74 1095.25,165.63 1095.50,165.55 1095.75,165.50 1096.00,165.48 1096.25,165.49 1096.50,165.53 1096.75,165.61 1097.00,165.71 1097.25,165.84 1097.50,166.00 1097.75,166.20 1098.00,166.42 1098.25,166.67 1098.50,166.96 1098.75,167.27 1099.00,167.61 1099.25,167.99 1099.50,168.39 1099.75,168.82 1100.00,169.29 1100.25,169.78 1100.50,170.30 1100.75,170.85 1101.00,171.43 1101.25,172.04 1101.50,172.68 1101.75,173.35 1102.00,174.04 1102.25,174.77 1102.50,175.52 1102.75,176.31 1103.00,177.12 1103.25,177.96 1103.50,178.82 1103.75,179.72 1104.00,180.64 1104.25,181.59 1104.50,182.57 1104.75,183.57 1105.00,184.60 1105.25,185.66 1105.50,186.74 1105.75,187.86 1106.00,188.99 1106.25,190.16 1106.50,191.34 1106.75,192.56 1107.00,193.80 1107.25,195.06 1107.50,196.35 1107.75,197.67 1108.00,199.01 1108.25,200.37 1108.50,201.76 1108.75,203.17 1109.00,204.60 1109.25,206.06 1109.50,207.54 1109.75,209.04 1110.00,210.56 1110.25,212.11 1110.50,213.68 1110.75,215.27 1111.00,216.88 1111.25,218.51 1111.50,220.16 1111.75,221.83 1112.00,223.52 1112.25,225.24 1112.50,226.97 1112.75,228.72 1113.00,230.48 1113.25,232.27 1113.50,234.08 1113.75,235.90 1114.00,237.74 1114.25,239.59 1114.50,241.47 1114.75,243.36 1115.00,245.26 1115.25,247.18 1115.50,249.12 1115.75,251.07 1116.00,253.04 1116.25,255.02 1116.50,257.01 1116.75,259.02 1117.00,261.04 1117.25,263.07 1117.50,265.12 1117.75,267.17 1118.00,269.24 1118.25,271.32 1118.50,273.41 1118.75,275.51 1119.00,277.63 1119.25,279.75 1119.50,281.88 1119.75,284.01 1120.00,286.16 1120.25,288.32 1120.50,290.48 1120.75,292.65 1121.00,294.83 1121.25,297.01 1121.50,299.20 1121.75,301.39 1122.00,303.59 1122.25,305.80 1122.50,308.01 1122.75,310.22 1123.00,312.44 1123.25,314.66 1123.50,316.88 1123.75,319.11 1124.00,321.34 1124.25,323.57 1124.50,325.80 1124.75,328.03 1125.00,330.26 1125.25,332.49 1125.50,334.72 1125.75,336.95 1126.00,339.18 1126.25,341.41 1126.50,343.63 1126.75,345.85 1127.00,348.07 1127.25,350.29 1127.50,352.50 1127.75,354.71 1128.00,356.91 1128.25,359.11 1128.50,361.30 1128.75,363.49 1129.00,365.67 1129.25,367.84 1129.50,370.01 1129.75,372.17 1130.00,374.32 1130.25,376.46 1130.50,378.60 1130.75,380.73 1131.00,382.84 1131.25,384.95 1131.50,387.05 1131.75,389.13 1132.00,391.21 1132.25,393.27 1132.50,395.32 1132.75,397.36 1133.00,399.39 1133.25,401.41 1133.50,403.41 1133.75,405.39 1134.00,407.37 1134.25,409.33 1134.50,411.27 1134.75,413.20 1135.00,415.12 1135.25,417.02 1135.50,418.90 1135.75,420.77 1136.00,422.62 1136.25,424.45 1136.50,426.26 1136.75,428.06 1137.00,429.84 1137.25,431.60 1137.50,433.34 1137.75,435.07 1138.00,436.77 1138.25,438.45 1138.50,440.12 1138.75,441.76 1139.00,443.38 1139.25,444.98 1139.50,446.56 1139.75,448.12 1140.00,449.66 1140.25,451.18 1140.50,452.67 1140.75,454.14 1141.00,455.58 1141.25,457.01 1141.50,458.41 1141.75,459.79 1142.00,461.14 1142.25,462.47 1142.50,463.77 1142.75,465.05 1143.00,466.30 1143.25,467.53 1143.50,468.74 1143.75,469.92 1144.00,471.07 1144.25,472.19 1144.50,473.29 1144.75,474.37 1145.00,475.41 1145.25,476.43 1145.50,477.43 1145.75,478.39 1146.00,479.33 1146.25,480.24 1146.50,481.12 1146.75,481.98 1147.00,482.81 1147.25,483.61 1147.50,484.38 1147.75,485.12 1148.00,485.83 1148.25,486.52 1148.50,487.17 1148.75,487.80 1149.00,488.40 1149.25,488.96 1149.50,489.50 1149.75,490.01 1150.00,490.49 1150.25,490.94 1150.50,491.36 1150.75,491.75 1151.00,492.11 1151.25,492.44 1151.50,492.75 1151.75,493.02 1152.00,493.26 1152.25,493.47 1152.50,493.65 1152.75,493.80 1153.00,493.92 1153.25,494.01 1153.50,494.07 1153.75,494.10 1154.00,494.09 1154.25,494.06 1154.50,494.00 1154.75,493.91 1155.00,493.79 1155.25,493.63 1155.50,493.45 1155.75,493.24 1156.00,493.00 1156.25,492.72 1156.50,492.42 1156.75,492.09 1157.00,491.72 1157.25,491.33 1157.50,490.91 1157.75,490.45 1158.00,489.97 1158.25,489.46 1158.50,488.92 1158.75,488.35 1159.00,487.75 1159.25,487.12 1159.50,486.46 1159.75,485.77 1160.00,485.06 1160.25,484.32 1160.50,483.54 1160.75,482.74 1161.00,481.91 1161.25,481.05 1161.50,480.17 1161.75,479.26 1162.00,478.32 1162.25,477.35 1162.50,476.35 1162.75,475.33 1163.00,474.28 1163.25,473.21 1163.50,472.10 1163.75,470.98 1164.00,469.82 1164.25,468.64 1164.50,467.44 1164.75,466.20 1165.00,464.95 1165.25,463.67 1165.50,462.36 1165.75,461.03 1166.00,459.68 1166.25,458.30 1166.50,456.90 1166.75,455.47 1167.00,454.02 1167.25,452.55 1167.50,451.05 1167.75,449.54 1168.00,448.00 1168.25,446.44 1168.50,444.86 1168.75,443.25 1169.00,441.63 1169.25,439.98 1169.50,438.32 1169.75,436.63 1170.00,434.93 1170.25,433.20 1170.50,431.46 1170.75,429.70 1171.00,427.92 1171.25,426.12 1171.50,424.30 1171.75,422.47 1172.00,420.62 1172.25,418.75 1172.50,416.87 1172.75,414.97 1173.00,413.05 1173.25,411.12 1173.50,409.17 1173.75,407.21 1174.00,405.24 1174.25,403.25 1174.50,401.24 1174.75,399.23 1175.00,397.20 1175.25,395.16 1175.50,393.11 1175.75,391.04 1176.00,388.97 1176.25,386.88 1176.50,384.78 1176.75,382.67 1177.00,380.56 1177.25,378.43 1177.50,376.29 1177.75,374.15 1178.00,372.00 1178.25,369.84 1178.50,367.67 1178.75,365.49 1179.00,363.31 1179.25,361.13 1179.50,358.93 1179.75,356.73 1180.00,354.53 1180.25,352.32 1180.50,350.11 1180.75,347.89 1181.00,345.67 1181.25,343.45 1181.50,341.23 1181.75,339.00 1182.00,336.77 1182.25,334.54 1182.50,332.31 1182.75,330.08 1183.00,327.85 1183.25,325.62 1183.50,323.39 1183.75,321.16 1184.00,318.93 1184.25,316.71 1184.50,314.48 1184.75,312.26 1185.00,310.05 1185.25,307.83 1185.50,305.62 1185.75,303.42 1186.00,301.22 1186.25,299.02 1186.50,296.83 1186.75,294.65 1187.00,292.48 1187.25,290.31 1187.50,288.14 1187.75,285.99 1188.00,283.84 1188.25,281.70 1188.50,279.58 1188.75,277.46 1189.00,275.35 1189.25,273.25 1189.50,271.16 1189.75,269.08 1190.00,267.01 1190.25,264.95 1190.50,262.91 1190.75,260.88 1191.00,258.86 1191.25,256.85 1191.50,254.86 1191.75,252.88 1192.00,250.92 1192.25,248.97 1192.50,247.03 1192.75,245.11 1193.00,243.21 1193.25,241.32 1193.50,239.45 1193.75,237.59 1194.00,235.75 1194.25,233.93 1194.50,232.13 1194.75,230.34 1195.00,228.58 1195.25,226.83 1195.50,225.10 1195.75,223.39 1196.00,221.70 1196.25,220.03 1196.50,218.38 1196.75,216.75 1197.00,215.14 1197.25,213.55 1197.50,211.98 1197.75,210.44 1198.00,208.92 1198.25,207.42 1198.50,205.94 1198.75,204.48 1199.00,203.05 1199.25,201.64 1199.50,200.26 1199.75,198.90 1200.00,197.56 1200.25,196.25 1200.50,194.96 1200.75,193.70 1201.00,192.46 1201.25,191.25 1201.50,190.06 1201.75,188.90 1202.00,187.77 1202.25,186.66 1202.50,185.57 1202.75,184.52 1203.00,183.49 1203.25,182.49 1203.50,181.51 1203.75,180.56 1204.00,179.64 1204.25,178.75 1204.50,177.89 1204.75,177.05 1205.00,176.24 1205.25,175.46 1205.50,174.71 1205.75,173.99 1206.00,173.29 1206.25,172.63 1206.50,171.99 1206.75,171.38 1207.00,170.81 1207.25,170.26 1207.50,169.74 1207.75,169.25 1208.00,168.79 1208.25,168.36 1208.50,167.96 1208.75,167.59 1209.00,167.24 1209.25,166.93 1209.50,166.65 1209.75,166.40 1210.00,166.18 1210.25,165.99 1210.50,165.83 1210.75,165.70 1211.00,165.60 1211.25,165.53 1211.50,165.49 1211.75,165.48 1212.00,165.50 1212.25,165.55 1212.50,165.64 1212.75,165.75 1213.00,165.89 1213.25,166.06 1213.50,166.26 1213.75,166.50 1214.00,166.76 1214.25,167.05 1214.50,167.38 1214.75,167.73 1215.00,168.11 1215.25,168.53 1215.50,168.97 1215.75,169.44 1216.00,169.94 1216.25,170.47 1216.50,171.03 1216.75,171.62 1217.00,172.24 1217.25,172.89 1217.50,173.57 1217.75,174.27 1218.00,175.01 1218.25,175.77 1218.50,176.56 1218.75,177.38 1219.00,178.23 1219.25,179.11 1219.50,180.01 1219.75,180.94 1220.00,181.90 1220.25,182.88 1220.50,183.90 1220.75,184.94 1221.00,186.00 1221.25,187.10 1221.50,188.22 1221.75,189.36 1222.00,190.53 1222.25,191.73 1222.50,192.95 1222.75,194.20 1223.00,195.47 1223.25,196.77 1223.50,198.09 1223.75,199.44 1224.00,200.81 1224.25,202.20 1224.50,203.62 1224.75,205.06 1225.00,206.53 1225.25,208.01 1225.50,209.52 1225.75,211.05 1226.00,212.61 1226.25,214.18 1226.50,215.78 1226.75,217.40 1227.00,219.03 1227.25,220.69 1227.50,222.37 1227.75,224.07 1228.00,225.79 1228.25,227.52 1228.50,229.28 1228.75,231.05 1229.00,232.85 1229.25,234.66 1229.50,236.49 1229.75,238.33 1230.00,240.19 1230.25,242.07 1230.50,243.97 1230.75,245.88 1231.00,247.80 1231.25,249.74 1231.50,251.70 1231.75,253.67 1232.00,255.65 1232.25,257.65 1232.50,259.66 1232.75,261.69 1233.00,263.72 1233.25,265.77 1233.50,267.83 1233.75,269.91 1234.00,271.99 1234.25,274.08 1234.50,276.19 1234.75,278.30 1235.00,280.43 1235.25,282.56 1235.50,284.70 1235.75,286.85 1236.00,289.01 1236.25,291.17 1236.50,293.35 1236.75,295.52 1237.00,297.71 1237.25,299.90 1237.50,302.10 1237.75,304.30 1238.00,306.51 1238.25,308.72 1238.50,310.93 1238.75,313.15 1239.00,315.37 1239.25,317.60 1239.50,319.82 1239.75,322.05 1240.00,324.28 1240.25,326.51 1240.50,328.74 1240.75,330.97 1241.00,333.20 1241.25,335.43 1241.50,337.66 1241.75,339.89 1242.00,342.12 1242.25,344.34 1242.50,346.56 1242.75,348.78 1243.00,350.99 1243.25,353.21 1243.50,355.41 1243.75,357.61 1244.00,359.81" fill="none" stroke="#00ff00" stroke-width="1"/><text x="332" y="135" fill="#00ff00" style="font-size:13px;font-weight:bold">V(7)</text><text x="932" y="135" fill="#ff0000" style="font-size:13px;font-weight:bold">V(1)</text></svg><div style="position:absolute;left:2px;top:536px;width:1276px;height:439px;background:#c0dcc0"></div><div style="position:absolute;left:3px;top:537px;width:1273px;height:1px;background:#fff"></div><div style="position:absolute;left:3px;top:537px;width:1px;height:436px;background:#fff"></div><div style="position:absolute;left:3px;top:973px;width:1274px;height:1px;background:#808080"></div><div style="position:absolute;left:1276px;top:537px;width:1px;height:437px;background:#808080"></div><div style="position:absolute;left:2px;top:974px;width:1276px;height:1px;background:#404040"></div><div style="position:absolute;left:1277px;top:536px;width:1px;height:439px;background:#404040"></div><div style="position:absolute;left:6px;top:540px;width:63px;height:18px;background:#002080"></div><div style="position:absolute;left:69px;top:540px;width:42px;height:18px;background:#202080"></div><div style="position:absolute;left:111px;top:540px;width:206px;height:18px;background:#204080"></div><div style="position:absolute;left:317px;top:540px;width:23px;height:18px;background:#404080"></div><div style="position:absolute;left:340px;top:540px;width:168px;height:18px;background:#406080"></div><div style="position:absolute;left:508px;top:540px;width:51px;height:18px;background:#4060c0"></div><div style="position:absolute;left:559px;top:540px;width:14px;height:18px;background:#6060c0"></div><div style="position:absolute;left:573px;top:540px;width:229px;height:18px;background:#6080c0"></div><div style="position:absolute;left:802px;top:540px;width:5px;height:18px;background:#60a0c0"></div><div style="position:absolute;left:807px;top:540px;width:224px;height:18px;background:#80a0c0"></div><div style="position:absolute;left:1031px;top:540px;width:19px;height:18px;background:#80c0c0"></div><div style="position:absolute;left:1050px;top:540px;width:28px;height:18px;background:#a0c0c0"></div><div style="position:absolute;left:1078px;top:540px;width:196px;height:18px;background:#a6caf0"></div><svg style="left:10px;top:541px" width="13" height="17" viewBox="0 0 13 17"><rect x="3" y="3" width="2" height="10" fill="#0000ff"/><rect x="0" y="7" width="3" height="1" fill="#0000ff"/><path d="M5 5 L10.5 0.3 M5 10 L11 15.7" stroke="#0000ff" stroke-width="1.1" fill="none"/><path d="M7.5 13.5 L10 11.5 L11 15.5 Z" fill="#0000ff"/></svg><span class="t" style="left:26px;top:543px;font-size:12px;font-weight:bold;color:#fff;">Draft3.asc</span><div style="position:absolute;left:1222px;top:542px;width:16px;height:14px;background:#c0dcc0"></div><div style="position:absolute;left:1222px;top:542px;width:15px;height:1px;background:#fff"></div><div style="position:absolute;left:1222px;top:542px;width:1px;height:13px;background:#fff"></div><div style="position:absolute;left:1222px;top:555px;width:16px;height:1px;background:#404040"></div><div style="position:absolute;left:1237px;top:542px;width:1px;height:14px;background:#404040"></div><div style="position:absolute;left:1223px;top:554px;width:14px;height:1px;background:#808080"></div><div style="position:absolute;left:1236px;top:543px;width:1px;height:12px;background:#808080"></div><div style="position:absolute;left:1226px;top:551px;width:6px;height:2px;background:#000"></div><div style="position:absolute;left:1238px;top:542px;width:16px;height:14px;background:#c0dcc0"></div><div style="position:absolute;left:1238px;top:542px;width:15px;height:1px;background:#fff"></div><div style="position:absolute;left:1238px;top:542px;width:1px;height:13px;background:#fff"></div><div style="position:absolute;left:1238px;top:555px;width:16px;height:1px;background:#404040"></div><div style="position:absolute;left:1253px;top:542px;width:1px;height:14px;background:#404040"></div><div style="position:absolute;left:1239px;top:554px;width:14px;height:1px;background:#808080"></div><div style="position:absolute;left:1252px;top:543px;width:1px;height:12px;background:#808080"></div><div style="position:absolute;left:1241px;top:544px;width:9px;height:9px;border:1px solid #000;border-top-width:2px;box-sizing:border-box"></div><div style="position:absolute;left:1256px;top:542px;width:16px;height:14px;background:#c0dcc0"></div><div style="position:absolute;left:1256px;top:542px;width:15px;height:1px;background:#fff"></div><div style="position:absolute;left:1256px;top:542px;width:1px;height:13px;background:#fff"></div><div style="position:absolute;left:1256px;top:555px;width:16px;height:1px;background:#404040"></div><div style="position:absolute;left:1271px;top:542px;width:1px;height:14px;background:#404040"></div><div style="position:absolute;left:1257px;top:554px;width:14px;height:1px;background:#808080"></div><div style="position:absolute;left:1270px;top:543px;width:1px;height:12px;background:#808080"></div><svg style="position:absolute;left:1260px;top:545px" width="8" height="7" shape-rendering="crispEdges"><path d="M0 0h2l2 2.5l2-2.5h2l-3 3.5l3 3.5h-2l-2-2.5l-2 2.5h-2l3-3.5z" fill="#000"/></svg><div style="position:absolute;left:6px;top:559px;width:1267px;height:1px;background:#808080"></div><div style="position:absolute;left:6px;top:559px;width:1px;height:411px;background:#808080"></div><div style="position:absolute;left:7px;top:560px;width:1265px;height:1px;background:#404040"></div><div style="position:absolute;left:7px;top:560px;width:1px;height:409px;background:#404040"></div><div style="position:absolute;left:7px;top:969px;width:1266px;height:1px;background:#c0dcc0"></div><div style="position:absolute;left:1272px;top:560px;width:1px;height:410px;background:#c0dcc0"></div><div style="position:absolute;left:6px;top:970px;width:1268px;height:1px;background:#fff"></div><div style="position:absolute;left:1273px;top:559px;width:1px;height:412px;background:#fff"></div><div style="position:absolute;left:8px;top:561px;width:1264px;height:408px;background:#fff"></div><svg style="left:8px;top:561px" width="1264" height="408" viewBox="8 561 1264 408" shape-rendering="crispEdges" font-family="Liberation Sans" font-size="9.5" letter-spacing="0.4" fill="#000"><polyline points="183.5,568.5 1127.5,568.5" fill="none" stroke="#0000ff" stroke-linecap="square"/><polyline points="37.5,737.5 1236.5,737.5" fill="none" stroke="#0000ff" stroke-linecap="square"/><rect x="225" y="566" width="5" height="5" fill="#0000ff"/><rect x="408" y="566" width="5" height="5" fill="#0000ff"/><rect x="606" y="566" width="5" height="5" fill="#0000ff"/><rect x="642" y="566" width="5" height="5" fill="#0000ff"/><rect x="723" y="566" width="5" height="5" fill="#0000ff"/><rect x="927" y="566" width="5" height="5" fill="#0000ff"/><rect x="225" y="735" width="5" height="5" fill="#0000ff"/><polyline points="227.5,568.5 227.5,643.5" fill="none" stroke="#0000ff" stroke-linecap="square"/><polyline points="227.5,678.5 227.5,737.5" fill="none" stroke="#0000ff" stroke-linecap="square"/><circle cx="227.5" cy="659.3" r="14" fill="none" stroke="#000080" stroke-width="1"/><path d="M227.5 643 V645.3 M227.5 673.3 V678 M224 651.5 H232 M227.5 647 V655 M224 669.5 H232" fill="none" stroke="#000080"/><polyline points="37.5,627.5 53.5,627.5" fill="none" stroke="#0000ff" stroke-linecap="square"/><polyline points="82.5,627.5 198.5,627.5" fill="none" stroke="#0000ff" stroke-linecap="square"/><polyline points="37.5,627.5 37.5,694.5" fill="none" stroke="#0000ff" stroke-linecap="square"/><polyline points="37.5,723.5 37.5,737.5" fill="none" stroke="#0000ff" stroke-linecap="square"/><polyline points="37.5,678.5 52.5,678.5" fill="none" stroke="#0000ff" stroke-linecap="square"/><polyline points="88.5,678.5 153.5,678.5" fill="none" stroke="#0000ff" stroke-linecap="square"/><polyline points="132.5,627.5 132.5,635.5" fill="none" stroke="#0000ff" stroke-linecap="square"/><polyline points="132.5,671.5 132.5,678.5" fill="none" stroke="#0000ff" stroke-linecap="square"/><polyline points="110.5,678.5 110.5,694.5" fill="none" stroke="#0000ff" stroke-linecap="square"/><polyline points="110.5,723.5 110.5,737.5" fill="none" stroke="#0000ff" stroke-linecap="square"/><polyline points="183.5,568.5 183.5,576.5" fill="none" stroke="#0000ff" stroke-linecap="square"/><polyline points="183.5,612.5 183.5,657.5" fill="none" stroke="#0000ff" stroke-linecap="square"/><polyline points="183.5,700.5 183.5,751.5" fill="none" stroke="#0000ff" stroke-linecap="square"/><path d="M53 627.5 H65.5 M65.5 620 V635 M68.5 620 V635 M68.5 627.5 H82" fill="none" stroke="#000080"/><path d="M37.5 694 V706.5 M30 706.5 H45 M30 709.5 H45 M37.5 709.5 V723" fill="none" stroke="#000080"/><path d="M110.5 694 V706.5 M103 706.5 H118 M103 709.5 H118 M110.5 709.5 V723" fill="none" stroke="#000080"/><polyline points="52.5,678.5 52.5,676.5 53.5,675.5 54.5,674.5 55.5,673.5 57.5,672.5 63.5,672.5 65.5,674.5 64.5,675.5 63.5,678.5 63.5,681.5 64.5,683.5 65.5,684.5 66.5,683.5 67.5,681.5 67.5,678.5 66.5,675.5 65.5,674.5 67.5,672.5 74.5,672.5 76.5,674.5 75.5,675.5 74.5,678.5 74.5,681.5 75.5,683.5 76.5,684.5 77.5,683.5 78.5,681.5 78.5,678.5 77.5,675.5 76.5,674.5 78.5,672.5 84.5,672.5 86.5,673.5 87.5,675.5 88.5,676.5 88.5,678.5" fill="none" stroke="#000080" stroke-width="1"/><polyline points="132.5,635.5 132.5,639.1 140.5,642.8 125.5,650.1 140.5,657.3 125.5,664.6 132.5,668.3 132.5,671.5" fill="none" stroke="#000080"/><polyline points="183.5,576.5 183.5,580.1 191.5,583.8 176.5,591.1 191.5,598.3 176.5,605.6 183.5,609.3 183.5,612.5" fill="none" stroke="#000080"/><rect x="160" y="667" width="2" height="23" fill="#000080"/><path d="M153 678.5 H160" stroke="#000080"/><polyline points="162,670.5 183.5,656.5" fill="none" stroke="#000080" stroke-width="1"/><polyline points="162,686.5 183.5,700.5" fill="none" stroke="#000080" stroke-width="1"/><polygon points="183.5,700.5 174.5,691 171,695.5" fill="none" stroke="#000080" stroke-width="1"/><polygon points="175,751.5 192,751.5 183.5,760.5" fill="none" stroke="#0000ff" stroke-width="1"/><rect x="130" y="625" width="5" height="5" fill="#0000ff"/><rect x="181" y="625" width="5" height="5" fill="#0000ff"/><rect x="35" y="676" width="5" height="5" fill="#0000ff"/><rect x="108" y="676" width="5" height="5" fill="#0000ff"/><rect x="130" y="676" width="5" height="5" fill="#0000ff"/><rect x="108" y="735" width="5" height="5" fill="#0000ff"/><rect x="181" y="735" width="5" height="5" fill="#0000ff"/><polygon points="198.5,621.5 206.5,621.5 212.5,627.5 206.5,633.5 198.5,633.5" fill="none" stroke="#0000ff"/><polyline points="264.5,627.5 280.5,627.5" fill="none" stroke="#0000ff" stroke-linecap="square"/><polyline points="309.5,627.5 425.5,627.5" fill="none" stroke="#0000ff" stroke-linecap="square"/><polyline points="264.5,627.5 264.5,694.5" fill="none" stroke="#0000ff" stroke-linecap="square"/><polyline points="264.5,723.5 264.5,737.5" fill="none" stroke="#0000ff" stroke-linecap="square"/><polyline points="264.5,678.5 279.5,678.5" fill="none" stroke="#0000ff" stroke-linecap="square"/><polyline points="315.5,678.5 379.5,678.5" fill="none" stroke="#0000ff" stroke-linecap="square"/><polyline points="359.5,627.5 359.5,635.5" fill="none" stroke="#0000ff" stroke-linecap="square"/><polyline points="359.5,671.5 359.5,678.5" fill="none" stroke="#0000ff" stroke-linecap="square"/><polyline points="337.5,678.5 337.5,694.5" fill="none" stroke="#0000ff" stroke-linecap="square"/><polyline points="337.5,723.5 337.5,737.5" fill="none" stroke="#0000ff" stroke-linecap="square"/><polyline points="410.5,568.5 410.5,576.5" fill="none" stroke="#0000ff" stroke-linecap="square"/><polyline points="410.5,612.5 410.5,657.5" fill="none" stroke="#0000ff" stroke-linecap="square"/><polyline points="410.5,700.5 410.5,751.5" fill="none" stroke="#0000ff" stroke-linecap="square"/><path d="M280 627.5 H292.5 M292.5 620 V635 M295.5 620 V635 M295.5 627.5 H309" fill="none" stroke="#000080"/><path d="M264.5 694 V706.5 M257 706.5 H272 M257 709.5 H272 M264.5 709.5 V723" fill="none" stroke="#000080"/><path d="M337.5 694 V706.5 M330 706.5 H345 M330 709.5 H345 M337.5 709.5 V723" fill="none" stroke="#000080"/><polyline points="279.5,678.5 279.5,676.5 280.5,675.5 281.5,674.5 282.5,673.5 284.5,672.5 290.5,672.5 292.5,674.5 291.5,675.5 290.5,678.5 290.5,681.5 291.5,683.5 292.5,684.5 293.5,683.5 294.5,681.5 294.5,678.5 293.5,675.5 292.5,674.5 294.5,672.5 301.5,672.5 303.5,674.5 302.5,675.5 301.5,678.5 301.5,681.5 302.5,683.5 303.5,684.5 304.5,683.5 305.5,681.5 305.5,678.5 304.5,675.5 303.5,674.5 305.5,672.5 311.5,672.5 313.5,673.5 314.5,675.5 315.5,676.5 315.5,678.5" fill="none" stroke="#000080" stroke-width="1"/><polyline points="359.5,635.5 359.5,639.1 367.5,642.8 352.5,650.1 367.5,657.3 352.5,664.6 359.5,668.3 359.5,671.5" fill="none" stroke="#000080"/><polyline points="410.5,576.5 410.5,580.1 418.5,583.8 403.5,591.1 418.5,598.3 403.5,605.6 410.5,609.3 410.5,612.5" fill="none" stroke="#000080"/><rect x="386.5" y="667.5" width="2" height="22" fill="#fff" stroke="#000080"/><path d="M379 678.5 H386" stroke="#000080"/><polyline points="389,670.5 410.5,656.5" fill="none" stroke="#000080" stroke-width="1"/><polyline points="389,686.5 410.5,700.5" fill="none" stroke="#000080" stroke-width="1"/><polygon points="410.5,700.5 401.5,691 398,695.5" fill="none" stroke="#000080" stroke-width="1"/><polygon points="402,751.5 419,751.5 410.5,760.5" fill="none" stroke="#0000ff" stroke-width="1"/><rect x="357" y="625" width="5" height="5" fill="#0000ff"/><rect x="408" y="625" width="5" height="5" fill="#0000ff"/><rect x="262" y="676" width="5" height="5" fill="#0000ff"/><rect x="335" y="676" width="5" height="5" fill="#0000ff"/><rect x="357" y="676" width="5" height="5" fill="#0000ff"/><rect x="335" y="735" width="5" height="5" fill="#0000ff"/><rect x="408" y="735" width="5" height="5" fill="#0000ff"/><rect x="262" y="735" width="5" height="5" fill="#0000ff"/><polygon points="425.5,621.5 433.5,621.5 439.5,627.5 433.5,633.5 425.5,633.5" fill="none" stroke="#0000ff"/><polyline points="461.5,627.5 477.5,627.5" fill="none" stroke="#0000ff" stroke-linecap="square"/><polyline points="506.5,627.5 622.5,627.5" fill="none" stroke="#0000ff" stroke-linecap="square"/><polyline points="461.5,627.5 461.5,694.5" fill="none" stroke="#0000ff" stroke-linecap="square"/><polyline points="461.5,723.5 461.5,737.5" fill="none" stroke="#0000ff" stroke-linecap="square"/><polyline points="461.5,678.5 476.5,678.5" fill="none" stroke="#0000ff" stroke-linecap="square"/><polyline points="512.5,678.5 577.5,678.5" fill="none" stroke="#0000ff" stroke-linecap="square"/><polyline points="556.5,627.5 556.5,635.5" fill="none" stroke="#0000ff" stroke-linecap="square"/><polyline points="556.5,671.5 556.5,678.5" fill="none" stroke="#0000ff" stroke-linecap="square"/><polyline points="534.5,678.5 534.5,694.5" fill="none" stroke="#0000ff" stroke-linecap="square"/><polyline points="534.5,723.5 534.5,737.5" fill="none" stroke="#0000ff" stroke-linecap="square"/><polyline points="608.5,568.5 608.5,576.5" fill="none" stroke="#0000ff" stroke-linecap="square"/><polyline points="608.5,612.5 608.5,657.5" fill="none" stroke="#0000ff" stroke-linecap="square"/><polyline points="608.5,700.5 608.5,751.5" fill="none" stroke="#0000ff" stroke-linecap="square"/><path d="M477 627.5 H489.5 M489.5 620 V635 M492.5 620 V635 M492.5 627.5 H506" fill="none" stroke="#000080"/><path d="M461.5 694 V706.5 M454 706.5 H469 M454 709.5 H469 M461.5 709.5 V723" fill="none" stroke="#000080"/><path d="M534.5 694 V706.5 M527 706.5 H542 M527 709.5 H542 M534.5 709.5 V723" fill="none" stroke="#000080"/><polyline points="476.5,678.5 476.5,676.5 477.5,675.5 478.5,674.5 479.5,673.5 481.5,672.5 487.5,672.5 489.5,674.5 488.5,675.5 487.5,678.5 487.5,681.5 488.5,683.5 489.5,684.5 490.5,683.5 491.5,681.5 491.5,678.5 490.5,675.5 489.5,674.5 491.5,672.5 498.5,672.5 500.5,674.5 499.5,675.5 498.5,678.5 498.5,681.5 499.5,683.5 500.5,684.5 501.5,683.5 502.5,681.5 502.5,678.5 501.5,675.5 500.5,674.5 502.5,672.5 508.5,672.5 510.5,673.5 511.5,675.5 512.5,676.5 512.5,678.5" fill="none" stroke="#000080" stroke-width="1"/><polyline points="556.5,635.5 556.5,639.1 564.5,642.8 549.5,650.1 564.5,657.3 549.5,664.6 556.5,668.3 556.5,671.5" fill="none" stroke="#000080"/><polyline points="608.5,576.5 608.5,580.1 616.5,583.8 601.5,591.1 616.5,598.3 601.5,605.6 608.5,609.3 608.5,612.5" fill="none" stroke="#000080"/><rect x="584.5" y="667.5" width="2" height="22" fill="#fff" stroke="#000080"/><path d="M577 678.5 H584" stroke="#000080"/><polyline points="587,670.5 608.5,656.5" fill="none" stroke="#000080" stroke-width="1"/><polyline points="587,686.5 608.5,700.5" fill="none" stroke="#000080" stroke-width="1"/><polygon points="608.5,700.5 599.5,691 596,695.5" fill="none" stroke="#000080" stroke-width="1"/><polygon points="600,751.5 617,751.5 608.5,760.5" fill="none" stroke="#0000ff" stroke-width="1"/><rect x="554" y="625" width="5" height="5" fill="#0000ff"/><rect x="606" y="625" width="5" height="5" fill="#0000ff"/><rect x="459" y="676" width="5" height="5" fill="#0000ff"/><rect x="532" y="676" width="5" height="5" fill="#0000ff"/><rect x="554" y="676" width="5" height="5" fill="#0000ff"/><rect x="532" y="735" width="5" height="5" fill="#0000ff"/><rect x="606" y="735" width="5" height="5" fill="#0000ff"/><rect x="459" y="735" width="5" height="5" fill="#0000ff"/><polygon points="622.5,621.5 630.5,621.5 636.5,627.5 630.5,633.5 622.5,633.5" fill="none" stroke="#0000ff"/><polyline points="725.5,568.5 725.5,576.5" fill="none" stroke="#0000ff" stroke-linecap="square"/><polyline points="725.5,612.5 725.5,694.5" fill="none" stroke="#0000ff" stroke-linecap="square"/><polyline points="725.5,723.5 725.5,737.5" fill="none" stroke="#0000ff" stroke-linecap="square"/><polyline points="673.5,627.5 747.5,627.5" fill="none" stroke="#0000ff" stroke-linecap="square"/><polyline points="783.5,627.5 834.5,627.5 834.5,694.5" fill="none" stroke="#0000ff" stroke-linecap="square"/><polyline points="834.5,723.5 834.5,737.5" fill="none" stroke="#0000ff" stroke-linecap="square"/><polyline points="673.5,627.5 673.5,635.5" fill="none" stroke="#0000ff" stroke-linecap="square"/><polyline points="673.5,664.5 673.5,678.5 767.5,678.5" fill="none" stroke="#0000ff" stroke-linecap="square"/><polyline points="695.5,627.5 695.5,635.5" fill="none" stroke="#0000ff" stroke-linecap="square"/><polyline points="695.5,671.5 695.5,678.5" fill="none" stroke="#0000ff" stroke-linecap="square"/><polyline points="798.5,657.5 798.5,605.5 820.5,605.5" fill="none" stroke="#0000ff" stroke-linecap="square"/><polyline points="798.5,700.5 798.5,751.5" fill="none" stroke="#0000ff" stroke-linecap="square"/><path d="M673.5 635 V647.5 M666 647.5 H681 M666 650.5 H681 M673.5 650.5 V664" fill="none" stroke="#000080"/><polyline points="695.5,635.5 695.5,639.1 703.5,642.8 688.5,650.1 703.5,657.3 688.5,664.6 695.5,668.3 695.5,671.5" fill="none" stroke="#000080"/><polyline points="725.5,576.5 725.5,580.1 733.5,583.8 718.5,591.1 733.5,598.3 718.5,605.6 725.5,609.3 725.5,612.5" fill="none" stroke="#000080"/><path d="M725.5 694 V706.5 M718 706.5 H733 M718 709.5 H733 M725.5 709.5 V723" fill="none" stroke="#000080"/><polyline points="747.5,627.5 747.5,625.5 748.5,624.5 749.5,623.5 750.5,622.5 752.5,621.5 758.5,621.5 760.5,623.5 759.5,624.5 758.5,627.5 758.5,630.5 759.5,632.5 760.5,633.5 761.5,632.5 762.5,630.5 762.5,627.5 761.5,624.5 760.5,623.5 762.5,621.5 769.5,621.5 771.5,623.5 770.5,624.5 769.5,627.5 769.5,630.5 770.5,632.5 771.5,633.5 772.5,632.5 773.5,630.5 773.5,627.5 772.5,624.5 771.5,623.5 773.5,621.5 779.5,621.5 781.5,622.5 782.5,624.5 783.5,625.5 783.5,627.5" fill="none" stroke="#000080" stroke-width="1"/><path d="M834.5 694 V706.5 M827 706.5 H842 M827 709.5 H842 M834.5 709.5 V723" fill="none" stroke="#000080"/><rect x="774.5" y="667.5" width="2" height="22" fill="#fff" stroke="#000080"/><path d="M767 678.5 H774" stroke="#000080"/><polyline points="777,670.5 798.5,656.5" fill="none" stroke="#000080" stroke-width="1"/><polyline points="777,686.5 798.5,700.5" fill="none" stroke="#000080" stroke-width="1"/><polygon points="798.5,700.5 789.5,691 786,695.5" fill="none" stroke="#000080" stroke-width="1"/><polygon points="790,751.5 807,751.5 798.5,760.5" fill="none" stroke="#0000ff" stroke-width="1"/><rect x="693" y="625" width="5" height="5" fill="#0000ff"/><rect x="723" y="625" width="5" height="5" fill="#0000ff"/><rect x="796" y="625" width="5" height="5" fill="#0000ff"/><rect x="693" y="676" width="5" height="5" fill="#0000ff"/><rect x="723" y="735" width="5" height="5" fill="#0000ff"/><rect x="796" y="735" width="5" height="5" fill="#0000ff"/><rect x="832" y="735" width="5" height="5" fill="#0000ff"/><polygon points="820.5,599.5 828.5,599.5 834.5,605.5 828.5,611.5 820.5,611.5" fill="none" stroke="#0000ff"/><polyline points="929.5,568.5 929.5,576.5" fill="none" stroke="#0000ff" stroke-linecap="square"/><polyline points="929.5,612.5 929.5,694.5" fill="none" stroke="#0000ff" stroke-linecap="square"/><polyline points="929.5,723.5 929.5,737.5" fill="none" stroke="#0000ff" stroke-linecap="square"/><polyline points="878.5,627.5 951.5,627.5" fill="none" stroke="#0000ff" stroke-linecap="square"/><polyline points="987.5,627.5 1039.5,627.5 1039.5,694.5" fill="none" stroke="#0000ff" stroke-linecap="square"/><polyline points="1039.5,723.5 1039.5,737.5" fill="none" stroke="#0000ff" stroke-linecap="square"/><polyline points="878.5,627.5 878.5,635.5" fill="none" stroke="#0000ff" stroke-linecap="square"/><polyline points="878.5,664.5 878.5,678.5 972.5,678.5" fill="none" stroke="#0000ff" stroke-linecap="square"/><polyline points="900.5,627.5 900.5,635.5" fill="none" stroke="#0000ff" stroke-linecap="square"/><polyline points="900.5,671.5 900.5,678.5" fill="none" stroke="#0000ff" stroke-linecap="square"/><polyline points="1002.5,657.5 1002.5,605.5 1024.5,605.5" fill="none" stroke="#0000ff" stroke-linecap="square"/><polyline points="1002.5,737.5 1002.5,751.5" fill="none" stroke="#0000ff" stroke-linecap="square"/><polyline points="1002.5,700.5 1002.5,704.1 1010.5,707.8 995.5,715.1 1010.5,722.3 995.5,729.6 1002.5,733.3 1002.5,736.5" fill="none" stroke="#000080"/><path d="M878.5 635 V647.5 M871 647.5 H886 M871 650.5 H886 M878.5 650.5 V664" fill="none" stroke="#000080"/><polyline points="900.5,635.5 900.5,639.1 908.5,642.8 893.5,650.1 908.5,657.3 893.5,664.6 900.5,668.3 900.5,671.5" fill="none" stroke="#000080"/><polyline points="929.5,576.5 929.5,580.1 937.5,583.8 922.5,591.1 937.5,598.3 922.5,605.6 929.5,609.3 929.5,612.5" fill="none" stroke="#000080"/><path d="M929.5 694 V706.5 M922 706.5 H937 M922 709.5 H937 M929.5 709.5 V723" fill="none" stroke="#000080"/><polyline points="951.5,627.5 951.5,625.5 952.5,624.5 953.5,623.5 954.5,622.5 956.5,621.5 962.5,621.5 964.5,623.5 963.5,624.5 962.5,627.5 962.5,630.5 963.5,632.5 964.5,633.5 965.5,632.5 966.5,630.5 966.5,627.5 965.5,624.5 964.5,623.5 966.5,621.5 973.5,621.5 975.5,623.5 974.5,624.5 973.5,627.5 973.5,630.5 974.5,632.5 975.5,633.5 976.5,632.5 977.5,630.5 977.5,627.5 976.5,624.5 975.5,623.5 977.5,621.5 983.5,621.5 985.5,622.5 986.5,624.5 987.5,625.5 987.5,627.5" fill="none" stroke="#000080" stroke-width="1"/><path d="M1039.5 694 V706.5 M1032 706.5 H1047 M1032 709.5 H1047 M1039.5 709.5 V723" fill="none" stroke="#000080"/><rect x="979.5" y="667.5" width="2" height="22" fill="#fff" stroke="#000080"/><path d="M972 678.5 H979" stroke="#000080"/><polyline points="982,670.5 1002.5,656.5" fill="none" stroke="#000080" stroke-width="1"/><polyline points="982,686.5 1002.5,700.5" fill="none" stroke="#000080" stroke-width="1"/><polygon points="1002.5,700.5 993.5,691 990,695.5" fill="none" stroke="#000080" stroke-width="1"/><polygon points="994,751.5 1011,751.5 1002.5,760.5" fill="none" stroke="#0000ff" stroke-width="1"/><rect x="898" y="625" width="5" height="5" fill="#0000ff"/><rect x="927" y="625" width="5" height="5" fill="#0000ff"/><rect x="1000" y="625" width="5" height="5" fill="#0000ff"/><rect x="898" y="676" width="5" height="5" fill="#0000ff"/><rect x="927" y="735" width="5" height="5" fill="#0000ff"/><rect x="1000" y="735" width="5" height="5" fill="#0000ff"/><rect x="1037" y="735" width="5" height="5" fill="#0000ff"/><polygon points="1024.5,599.5 1032.5,599.5 1038.5,605.5 1032.5,611.5 1024.5,611.5" fill="none" stroke="#0000ff"/><polyline points="1127.5,568.5 1127.5,576.5" fill="none" stroke="#0000ff" stroke-linecap="square"/><polyline points="1127.5,612.5 1127.5,694.5" fill="none" stroke="#0000ff" stroke-linecap="square"/><polyline points="1127.5,723.5 1127.5,737.5" fill="none" stroke="#0000ff" stroke-linecap="square"/><polyline points="1076.5,627.5 1149.5,627.5" fill="none" stroke="#0000ff" stroke-linecap="square"/><polyline points="1185.5,627.5 1236.5,627.5 1236.5,694.5" fill="none" stroke="#0000ff" stroke-linecap="square"/><polyline points="1236.5,723.5 1236.5,737.5" fill="none" stroke="#0000ff" stroke-linecap="square"/><polyline points="1076.5,627.5 1076.5,635.5" fill="none" stroke="#0000ff" stroke-linecap="square"/><polyline points="1076.5,664.5 1076.5,678.5 1169.5,678.5" fill="none" stroke="#0000ff" stroke-linecap="square"/><polyline points="1098.5,627.5 1098.5,635.5" fill="none" stroke="#0000ff" stroke-linecap="square"/><polyline points="1098.5,671.5 1098.5,678.5" fill="none" stroke="#0000ff" stroke-linecap="square"/><polyline points="1200.5,657.5 1200.5,605.5 1222.5,605.5" fill="none" stroke="#0000ff" stroke-linecap="square"/><polyline points="1200.5,737.5 1200.5,751.5" fill="none" stroke="#0000ff" stroke-linecap="square"/><polyline points="1200.5,700.5 1200.5,704.1 1208.5,707.8 1193.5,715.1 1208.5,722.3 1193.5,729.6 1200.5,733.3 1200.5,736.5" fill="none" stroke="#000080"/><path d="M1076.5 635 V647.5 M1069 647.5 H1084 M1069 650.5 H1084 M1076.5 650.5 V664" fill="none" stroke="#000080"/><polyline points="1098.5,635.5 1098.5,639.1 1106.5,642.8 1091.5,650.1 1106.5,657.3 1091.5,664.6 1098.5,668.3 1098.5,671.5" fill="none" stroke="#000080"/><polyline points="1127.5,576.5 1127.5,580.1 1135.5,583.8 1120.5,591.1 1135.5,598.3 1120.5,605.6 1127.5,609.3 1127.5,612.5" fill="none" stroke="#000080"/><path d="M1127.5 694 V706.5 M1120 706.5 H1135 M1120 709.5 H1135 M1127.5 709.5 V723" fill="none" stroke="#000080"/><polyline points="1149.5,627.5 1149.5,625.5 1150.5,624.5 1151.5,623.5 1152.5,622.5 1154.5,621.5 1160.5,621.5 1162.5,623.5 1161.5,624.5 1160.5,627.5 1160.5,630.5 1161.5,632.5 1162.5,633.5 1163.5,632.5 1164.5,630.5 1164.5,627.5 1163.5,624.5 1162.5,623.5 1164.5,621.5 1171.5,621.5 1173.5,623.5 1172.5,624.5 1171.5,627.5 1171.5,630.5 1172.5,632.5 1173.5,633.5 1174.5,632.5 1175.5,630.5 1175.5,627.5 1174.5,624.5 1173.5,623.5 1175.5,621.5 1181.5,621.5 1183.5,622.5 1184.5,624.5 1185.5,625.5 1185.5,627.5" fill="none" stroke="#000080" stroke-width="1"/><path d="M1236.5 694 V706.5 M1229 706.5 H1244 M1229 709.5 H1244 M1236.5 709.5 V723" fill="none" stroke="#000080"/><rect x="1176.5" y="667.5" width="2" height="22" fill="#fff" stroke="#000080"/><path d="M1169 678.5 H1176" stroke="#000080"/><polyline points="1179,670.5 1200.5,656.5" fill="none" stroke="#000080" stroke-width="1"/><polyline points="1179,686.5 1200.5,700.5" fill="none" stroke="#000080" stroke-width="1"/><polygon points="1200.5,700.5 1191.5,691 1188,695.5" fill="none" stroke="#000080" stroke-width="1"/><polygon points="1192,751.5 1209,751.5 1200.5,760.5" fill="none" stroke="#0000ff" stroke-width="1"/><rect x="1096" y="625" width="5" height="5" fill="#0000ff"/><rect x="1125" y="625" width="5" height="5" fill="#0000ff"/><rect x="1198" y="625" width="5" height="5" fill="#0000ff"/><rect x="1096" y="676" width="5" height="5" fill="#0000ff"/><rect x="1125" y="735" width="5" height="5" fill="#0000ff"/><rect x="1198" y="735" width="5" height="5" fill="#0000ff"/><polygon points="1222.5,599.5 1230.5,599.5 1236.5,605.5 1230.5,611.5 1222.5,611.5" fill="none" stroke="#0000ff"/><polyline points="644.5,568.5 644.5,773.5 615.5,773.5 615.5,781.5" fill="none" stroke="#0000ff" stroke-linecap="square"/><polyline points="615.5,817.5 615.5,899.5" fill="none" stroke="#0000ff" stroke-linecap="square"/><polyline points="615.5,928.5 615.5,941.5 725.5,941.5" fill="none" stroke="#0000ff" stroke-linecap="square"/><polyline points="564.5,832.5 637.5,832.5" fill="none" stroke="#0000ff" stroke-linecap="square"/><polyline points="673.5,832.5 725.5,832.5 725.5,899.5" fill="none" stroke="#0000ff" stroke-linecap="square"/><polyline points="725.5,928.5 725.5,941.5" fill="none" stroke="#0000ff" stroke-linecap="square"/><polyline points="564.5,832.5 564.5,840.5" fill="none" stroke="#0000ff" stroke-linecap="square"/><polyline points="564.5,869.5 564.5,883.5 658.5,883.5" fill="none" stroke="#0000ff" stroke-linecap="square"/><polyline points="586.5,832.5 586.5,840.5" fill="none" stroke="#0000ff" stroke-linecap="square"/><polyline points="586.5,876.5 586.5,883.5" fill="none" stroke="#0000ff" stroke-linecap="square"/><polyline points="688.5,832.5 688.5,810.5 710.5,810.5" fill="none" stroke="#0000ff" stroke-linecap="square"/><polyline points="688.5,905.5 688.5,956.5" fill="none" stroke="#0000ff" stroke-linecap="square"/><polyline points="615.5,781.5 615.5,785.1 623.5,788.8 608.5,796.1 623.5,803.3 608.5,810.6 615.5,814.3 615.5,817.5" fill="none" stroke="#000080"/><polyline points="586.5,840.5 586.5,844.1 594.5,847.8 579.5,855.1 594.5,862.3 579.5,869.6 586.5,873.3 586.5,876.5" fill="none" stroke="#000080"/><path d="M564.5 840 V852.5 M557 852.5 H572 M557 855.5 H572 M564.5 855.5 V869" fill="none" stroke="#000080"/><path d="M615.5 899 V911.5 M608 911.5 H623 M608 914.5 H623 M615.5 914.5 V928" fill="none" stroke="#000080"/><path d="M725.5 899 V911.5 M718 911.5 H733 M718 914.5 H733 M725.5 914.5 V928" fill="none" stroke="#000080"/><polyline points="637.5,832.5 637.5,830.5 638.5,829.5 639.5,828.5 640.5,827.5 642.5,826.5 648.5,826.5 650.5,828.5 649.5,829.5 648.5,832.5 648.5,835.5 649.5,837.5 650.5,838.5 651.5,837.5 652.5,835.5 652.5,832.5 651.5,829.5 650.5,828.5 652.5,826.5 659.5,826.5 661.5,828.5 660.5,829.5 659.5,832.5 659.5,835.5 660.5,837.5 661.5,838.5 662.5,837.5 663.5,835.5 663.5,832.5 662.5,829.5 661.5,828.5 663.5,826.5 669.5,826.5 671.5,827.5 672.5,829.5 673.5,830.5 673.5,832.5" fill="none" stroke="#000080" stroke-width="1"/><path d="M688.5 832 V861 M681 841.5 H696 M681 852.5 H696" fill="none" stroke="#000080"/><polyline points="681.5,841.5 688.5,851.5 695.5,841.5" fill="none" stroke="#000080" stroke-width="1"/><rect x="664.5" y="872.5" width="2" height="22" fill="#fff" stroke="#000080"/><path d="M657 883.5 H664" stroke="#000080"/><polyline points="667,875.5 688.5,861.5" fill="none" stroke="#000080" stroke-width="1"/><polyline points="667,891.5 688.5,905.5" fill="none" stroke="#000080" stroke-width="1"/><polygon points="688.5,905.5 679.5,896 676,900.5" fill="none" stroke="#000080" stroke-width="1"/><polygon points="680,956.5 697,956.5 688.5,965.5" fill="none" stroke="#0000ff" stroke-width="1"/><rect x="584" y="830" width="5" height="5" fill="#0000ff"/><rect x="613" y="830" width="5" height="5" fill="#0000ff"/><rect x="686" y="830" width="5" height="5" fill="#0000ff"/><rect x="584" y="881" width="5" height="5" fill="#0000ff"/><rect x="686" y="939" width="5" height="5" fill="#0000ff"/><polygon points="710.5,804.5 718.5,804.5 724.5,810.5 718.5,816.5 710.5,816.5" fill="none" stroke="#0000ff"/><text x="238" y="646">V1</text><text x="238" y="686">9</text><text x="42" y="576" letter-spacing="0.73">.options plotwinsize=0</text><text x="56" y="594" letter-spacing="0.58">.tran 0 2m 0 50nn</text><text x="200" y="632">1</text><text x="194" y="591">R1</text><text x="193" y="607">447</text><text x="60" y="618">C3</text><text x="58" y="644">10n</text><text x="111" y="647">R2</text><text x="104" y="664">57K</text><text x="65" y="669">L1</text><text x="59" y="693">1.6m</text><text x="21" y="700">C2</text><text x="22" y="726">1n</text><text x="115" y="700">C1</text><text x="115" y="726">1n</text><text x="181" y="675">Q1</text><text x="180" y="691">2N2222</text><text x="427" y="632">2</text><text x="419" y="591">R3</text><text x="419" y="607">470</text><text x="287" y="618">C6</text><text x="285" y="644">10n</text><text x="337" y="647">R4</text><text x="331" y="664">56K</text><text x="292" y="669">L2</text><text x="286" y="693">160µ</text><text x="248" y="700">C5</text><text x="243" y="726">10n</text><text x="342" y="700">C4</text><text x="342" y="726">10n</text><text x="407" y="675">Q2</text><text x="406" y="691">2N2222</text><text x="624" y="632">3</text><text x="618" y="591">R5</text><text x="617" y="607">470</text><text x="485" y="618">C9</text><text x="483" y="644">10n</text><text x="535" y="647">R6</text><text x="528" y="664">56K</text><text x="488" y="669">L3</text><text x="483" y="693">160µ</text><text x="446" y="700">C8</text><text x="447" y="726">1n</text><text x="539" y="700">C7</text><text x="539" y="726">100n</text><text x="605" y="675">Q3</text><text x="604" y="691">2N2222</text><text x="822" y="610">4</text><text x="735" y="591">R7</text><text x="734" y="607">470</text><text x="651" y="638">C12</text><text x="653" y="664">10n</text><text x="705" y="648">R8</text><text x="704" y="665">56K</text><text x="760" y="618">L4</text><text x="754" y="642">160µ</text><text x="795" y="675">Q4</text><text x="794" y="691">2N2222</text><text x="728" y="700">C10</text><text x="729" y="726">100n</text><text x="839" y="700">C11</text><text x="839" y="726">1n</text><text x="1026" y="610">5</text><text x="938" y="591">R11</text><text x="938" y="607">470</text><text x="856" y="638">C18</text><text x="857" y="664">10n</text><text x="909" y="648">R12</text><text x="909" y="665">56K</text><text x="964" y="618">L6</text><text x="959" y="642">160µ</text><text x="1000" y="675">Q6</text><text x="998" y="691">2N2222</text><text x="933" y="700">C16</text><text x="934" y="726">100n</text><text x="1043" y="700">C17</text><text x="1043" y="726">1n</text><text x="1013" y="715">R13</text><text x="1013" y="732">150</text><text x="1224" y="610">6</text><text x="1137" y="591">R14</text><text x="1136" y="607">470</text><text x="1054" y="638">C21</text><text x="1055" y="664">10n</text><text x="1107" y="648">R15</text><text x="1106" y="665">560K</text><text x="1161" y="618">L7</text><text x="1158" y="642">80µ</text><text x="1197" y="675">Q7</text><text x="1196" y="691">2N2222</text><text x="1130" y="700">C19</text><text x="1130" y="726">330n</text><text x="1241" y="700">C20</text><text x="1241" y="726">1n5</text><text x="1209" y="715">R16</text><text x="1209" y="732">47</text><text x="712" y="815">7</text><text x="624" y="796">R9</text><text x="623" y="812">470</text><text x="650" y="822">L5</text><text x="643" y="846">160µ</text><text x="692" y="837">D1</text><text x="541" y="843">C15</text><text x="543" y="869">10n</text><text x="595" y="853">R10</text><text x="594" y="870">56K</text><text x="693" y="869">1N914</text><text x="684" y="880">Q5</text><text x="684" y="895">2N2222</text><text x="619" y="905">C13</text><text x="619" y="930">100n</text><text x="728" y="905">C14</text><text x="728" y="930">1n</text></svg><div style="position:absolute;left:0px;top:977px;width:1280px;height:1px;background:#fff"></div><div style="position:absolute;left:1229px;top:980px;width:50px;height:1px;background:#808080"></div><div style="position:absolute;left:1229px;top:980px;width:1px;height:15px;background:#808080"></div><div style="position:absolute;left:1229px;top:995px;width:50px;height:1px;background:#fff"></div><div style="position:absolute;left:0px;top:997px;width:1280px;height:1px;background:#fff"></div></body></html>
